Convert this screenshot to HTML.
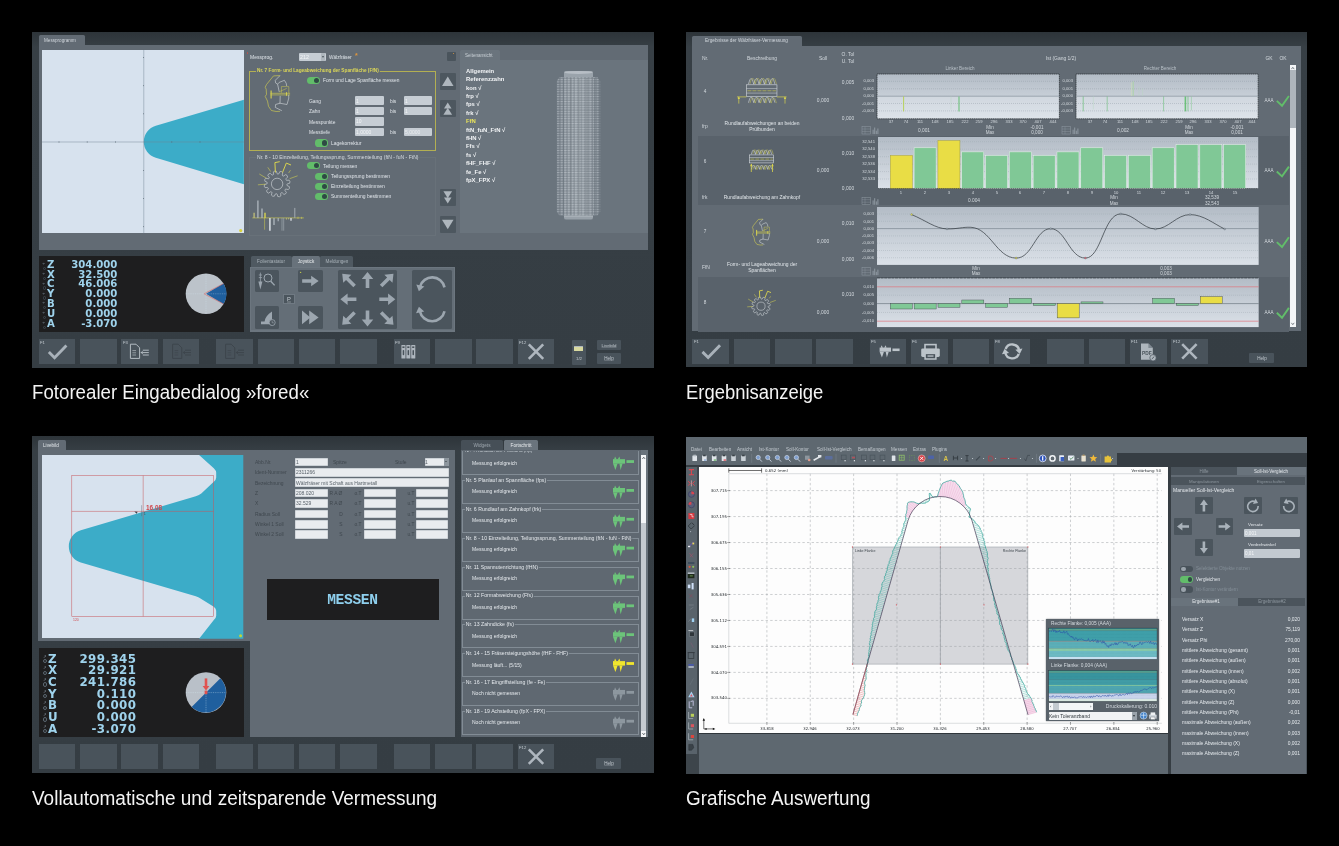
<!DOCTYPE html>
<html lang="de"><head><meta charset="utf-8"><title>fored – Softwareansichten</title>
<style>
html,body{margin:0;padding:0;background:#000;}
body{width:1339px;height:846px;position:relative;overflow:hidden;font-family:"Liberation Sans",sans-serif;color:#fff;}
.a{position:absolute;}
.t{position:absolute;white-space:nowrap;transform-origin:0 0;}
.cap{position:absolute;white-space:nowrap;font-size:20px;line-height:24px;color:#f4f4f4;transform-origin:0 50%;filter:blur(.25px);}
svg{overflow:visible;}
section{position:absolute;left:0;top:0;width:1339px;height:846px;filter:blur(.3px);}
</style></head><body>
<section>
<div class="a" style="left:32px;top:32px;width:622px;height:335.6px;background:#353d43;background:linear-gradient(#2d3439,#373f45 15px,#353d43)"></div>
<div class="a" style="left:38.75px;top:35.2px;width:45.85px;height:10.8px;background:#626b74;border-radius:1.5px 1.5px 0 0"></div>
<div class="t" style="left:43.5px;top:38px;font-size:18.4px;line-height:22.08px;color:#d0d6dc;transform:scale(0.25);">Messprogramm</div>
<div class="a" style="left:38.75px;top:45.4px;width:609.05px;height:204.2px;background:#626b74;"></div>
<div class="a" style="left:41.9px;top:50px;width:201.9px;height:183.4px;background:#d7e2ee;"></div>
<svg class="a" style="left:41.9px;top:50px;" width="201.9" height="183.4" viewBox="41.9 50 201.9 183.4"><path d="M243.8 99.7 L155.7 125.66 A16.71 16.71 0 0 0 155.7 157.74 L243.8 184.3 Z" fill="#3cacc8"/><path d="M143.7 50V233.4M41.9 142H243.8" stroke="#6f8290" stroke-width="0.45" fill="none"/><rect x="58.5" y="141.5" width="0.8" height="1" fill="#55636e"/><rect x="86.7" y="141.5" width="0.8" height="1" fill="#55636e"/><rect x="114.9" y="141.5" width="0.8" height="1" fill="#55636e"/><rect x="171.3" y="141.5" width="0.8" height="1" fill="#55636e"/><rect x="199.5" y="141.5" width="0.8" height="1" fill="#55636e"/><rect x="143" y="57.2" width="0.8" height="0.8" fill="#55636e"/><rect x="143" y="85.3" width="0.8" height="0.8" fill="#55636e"/><rect x="143" y="113.4" width="0.8" height="0.8" fill="#55636e"/><rect x="143" y="170.2" width="0.8" height="0.8" fill="#55636e"/><rect x="143" y="198.2" width="0.8" height="0.8" fill="#55636e"/><rect x="143" y="226.3" width="0.8" height="0.8" fill="#55636e"/><circle cx="240.6" cy="230.6" r="1.6" fill="#d8d23c"/></svg>
<div class="t" style="left:250px;top:54px;font-size:20px;line-height:24px;color:#dfe4e9;transform:scale(0.25);">Messprog.</div>
<div class="a" style="left:246.7px;top:52.2px;width:1.4px;height:1.4px;background:#c0504d;border-radius:50%"></div>
<div class="a" style="left:298.8px;top:53px;width:27px;height:8.2px;background:#c6cdd4;border-radius:1px"></div>
<div class="a" style="left:320.6px;top:53.4px;width:4.8px;height:7.4px;background:#aeb6bd;border-radius:.8px"></div>
<div class="t" style="left:299.6px;top:54px;font-size:21.6px;line-height:25.92px;color:#f4f6f8;transform:scale(0.25);">212</div>
<div class="a" style="left:321.6px;top:56.2px;border:1.4px solid transparent;border-top:2px solid #4a545c;width:0;height:0"></div>
<div class="t" style="left:329px;top:55px;font-size:19px;line-height:22.8px;color:#dfe4e9;transform:scale(0.25);">Wälzfräser</div>
<div class="t" style="left:355px;top:51px;font-size:28px;line-height:33.6px;color:#e0963c;transform:scale(0.25);font-weight:bold;">*</div>
<div class="a" style="left:447px;top:52.4px;width:8.5px;height:8.6px;background:#4a545c;border-radius:1px"></div>
<div class="a" style="left:452.6px;top:53.2px;width:1.3px;height:1.3px;background:#e0963c;border-radius:50%"></div>
<div class="a" style="left:249px;top:70.6px;width:187.2px;height:80.4px;background:transparent;border:0.5px solid #b3af52;box-sizing:border-box"></div>
<div class="t" style="left:255.6px;top:68px;font-size:18.88px;line-height:22.66px;color:#dcd757;transform:scale(0.25);font-weight:bold;background:#626b74;padding:0 4px;">Nr. 7 Form- und Lageabweichung der Spanfläche (FfN)</div>
<div class="a" style="left:306.7px;top:76.6px;width:13.6px;height:7.2px;background:#62bd6a;border-radius:3.6px"></div>
<div class="a" style="left:314.1px;top:77.6px;width:5.2px;height:5.2px;background:#2f4a44;border-radius:50%"></div>
<div class="t" style="left:322.6px;top:77px;font-size:19.28px;line-height:23.14px;color:#dfe4e9;transform:scale(0.25);">Form und Lage Spanfläche messen</div>
<div class="t" style="left:308.8px;top:98px;font-size:19.6px;line-height:23.52px;color:#dfe4e9;transform:scale(0.25);">Gang</div>
<div class="t" style="left:308.8px;top:108px;font-size:19.6px;line-height:23.52px;color:#dfe4e9;transform:scale(0.25);">Zahn</div>
<div class="t" style="left:308.8px;top:119px;font-size:19.6px;line-height:23.52px;color:#dfe4e9;transform:scale(0.25);">Messpunkte</div>
<div class="t" style="left:308.8px;top:129px;font-size:19.6px;line-height:23.52px;color:#dfe4e9;transform:scale(0.25);">Messtiefe</div>
<div class="a" style="left:354.7px;top:96.3px;width:29.3px;height:8.6px;background:#c6cdd4;border-radius:1px"></div>
<div class="t" style="left:355.7px;top:98px;font-size:20px;line-height:24px;color:#f2f4f6;transform:scale(0.25);">1</div>
<div class="a" style="left:403.9px;top:96.3px;width:28.6px;height:8.6px;background:#c6cdd4;border-radius:1px"></div>
<div class="t" style="left:404.9px;top:98px;font-size:20px;line-height:24px;color:#f2f4f6;transform:scale(0.25);">1</div>
<div class="a" style="left:354.7px;top:106.7px;width:29.3px;height:8.6px;background:#c6cdd4;border-radius:1px"></div>
<div class="t" style="left:355.7px;top:108px;font-size:20px;line-height:24px;color:#f2f4f6;transform:scale(0.25);">1</div>
<div class="a" style="left:403.9px;top:106.7px;width:28.6px;height:8.6px;background:#c6cdd4;border-radius:1px"></div>
<div class="t" style="left:404.9px;top:108px;font-size:20px;line-height:24px;color:#f2f4f6;transform:scale(0.25);">1</div>
<div class="a" style="left:354.7px;top:117.2px;width:29.3px;height:8.6px;background:#c6cdd4;border-radius:1px"></div>
<div class="t" style="left:355.7px;top:118px;font-size:20px;line-height:24px;color:#f2f4f6;transform:scale(0.25);">10</div>
<div class="a" style="left:354.7px;top:127.6px;width:29.3px;height:8.6px;background:#c6cdd4;border-radius:1px"></div>
<div class="t" style="left:355.7px;top:129px;font-size:20px;line-height:24px;color:#f2f4f6;transform:scale(0.25);">1,0000</div>
<div class="a" style="left:403.9px;top:127.6px;width:28.6px;height:8.6px;background:#c6cdd4;border-radius:1px"></div>
<div class="t" style="left:404.9px;top:129px;font-size:20px;line-height:24px;color:#e9ecef;transform:scale(0.25);">5,0000</div>
<div class="t" style="left:389.8px;top:98px;font-size:19.6px;line-height:23.52px;color:#dfe4e9;transform:scale(0.25);">bis</div>
<div class="t" style="left:389.8px;top:108px;font-size:19.6px;line-height:23.52px;color:#dfe4e9;transform:scale(0.25);">bis</div>
<div class="t" style="left:389.8px;top:129px;font-size:19.6px;line-height:23.52px;color:#dfe4e9;transform:scale(0.25);">bis</div>
<div class="a" style="left:314.5px;top:139.4px;width:13.6px;height:7.2px;background:#62bd6a;border-radius:3.6px"></div>
<div class="a" style="left:321.9px;top:140.4px;width:5.2px;height:5.2px;background:#2f4a44;border-radius:50%"></div>
<div class="t" style="left:330.6px;top:140px;font-size:19.72px;line-height:23.66px;color:#dfe4e9;transform:scale(0.25);">Lagekorrektur</div>
<div class="a" style="left:249px;top:157px;width:187.2px;height:79px;background:transparent;border:0.5px solid #687179;box-sizing:border-box"></div>
<div class="t" style="left:255.6px;top:154px;font-size:20.2px;line-height:24.24px;color:#d6dce1;transform:scale(0.25);background:#626b74;padding:0 4px;">Nr. 8 - 10 Einzelteilung, Teilungssprung, Summenteilung (ftN - fuN - FtN)</div>
<div class="a" style="left:306.7px;top:162.2px;width:13.6px;height:7.2px;background:#62bd6a;border-radius:3.6px"></div>
<div class="a" style="left:314.1px;top:163.2px;width:5.2px;height:5.2px;background:#2f4a44;border-radius:50%"></div>
<div class="t" style="left:322.6px;top:163px;font-size:19.8px;line-height:23.76px;color:#dfe4e9;transform:scale(0.25);">Teilung messen</div>
<div class="a" style="left:314.5px;top:172.6px;width:13.6px;height:7.2px;background:#62bd6a;border-radius:3.6px"></div>
<div class="a" style="left:321.9px;top:173.6px;width:5.2px;height:5.2px;background:#2f4a44;border-radius:50%"></div>
<div class="t" style="left:330.6px;top:173px;font-size:19.88px;line-height:23.86px;color:#dfe4e9;transform:scale(0.25);">Teilungssprung bestimmen</div>
<div class="a" style="left:314.5px;top:182.7px;width:13.6px;height:7.2px;background:#62bd6a;border-radius:3.6px"></div>
<div class="a" style="left:321.9px;top:183.7px;width:5.2px;height:5.2px;background:#2f4a44;border-radius:50%"></div>
<div class="t" style="left:330.6px;top:183px;font-size:19.88px;line-height:23.86px;color:#dfe4e9;transform:scale(0.25);">Einzelteilung bestimmen</div>
<div class="a" style="left:314.5px;top:193px;width:13.6px;height:7.2px;background:#62bd6a;border-radius:3.6px"></div>
<div class="a" style="left:321.9px;top:194px;width:5.2px;height:5.2px;background:#2f4a44;border-radius:50%"></div>
<div class="t" style="left:330.6px;top:193px;font-size:19.88px;line-height:23.86px;color:#dfe4e9;transform:scale(0.25);">Summenteilung bestimmen</div>
<svg class="a" style="left:249px;top:72px;" width="57" height="164" viewBox="249 72 57 164"><path d="M280 75.6 L273.5 75.9 L266.5 84.5 L265.2 87.3 L266.2 89.2 L266.5 94.4 L265.2 96.4 L267.5 101.1 L268.5 106.3 L271.4 110.5 L276.1 111.5 L280 111.3" fill="none" stroke="#d9d44e" stroke-width="0.6" stroke-linejoin="round"/><path d="M280 75.6 L275.3 80.3 L275.6 82.9 L277.6 84.2 L279.2 82.4 L284.4 80.3 L286.2 83.2 L286.7 86 M277.6 84.2 L279.2 91.8 M280.2 95.9 L280 103.2 L275.6 104.5 L275.3 107.4 L281.8 110.7 M279.7 103.2 L287 104.5 L288.8 98 L288.6 94.9" fill="none" stroke="#d5dade" stroke-width="0.6" stroke-linejoin="round"/><path d="M281.4 92.8 V86.6 H288.8 V93.3 M279.2 91.8 L286.7 88.4" fill="none" stroke="#d9d44e" stroke-width="0.55" opacity=".85"/><path d="M270.4 93.3 H290.1 M270.4 94.9 H290.1" fill="none" stroke="#d9d44e" stroke-width="0.6"/><path d="M271.1 90.5 V98.5" stroke="#d9d44e" stroke-width="1.1"/><path d="M286.5 92.2 V95.8" stroke="#d9d44e" stroke-width="0.9"/><path d="M277.1 173.7 Q277.89 174.53 278.8 173.84 L279.85 171.6 Q281.71 171.1 282.82 172.67 L282.2 175.07L282.2 175.07 Q282.46 176.18 283.6 176.04 L285.63 174.63 Q287.49 175.12 287.67 177.04 L285.93 178.8L285.93 178.8 Q285.61 179.9 286.66 180.34 L289.12 180.13 Q290.49 181.49 289.68 183.24 L287.3 183.9L287.3 183.9 Q286.47 184.69 287.16 185.6 L289.4 186.65 Q289.9 188.51 288.33 189.62 L285.93 189L285.93 189 Q284.82 189.26 284.96 190.4 L286.37 192.43 Q285.88 194.29 283.96 194.47 L282.2 192.73L282.2 192.73 Q281.1 192.41 280.66 193.46 L280.87 195.92 Q279.51 197.29 277.76 196.48 L277.1 194.1L277.1 194.1 Q276.31 193.27 275.4 193.96 L274.35 196.2 Q272.49 196.7 271.38 195.13 L272 192.73L272 192.73 Q271.74 191.62 270.6 191.76 L268.57 193.17 Q266.71 192.68 266.53 190.76 L268.27 189L268.27 189 Q268.59 187.9 267.54 187.46 L265.08 187.67 Q263.71 186.31 264.52 184.56 L266.9 183.9L266.9 183.9 Q267.73 183.11 267.04 182.2 L264.8 181.15 Q264.3 179.29 265.87 178.18 L268.27 178.8L268.27 178.8 Q269.38 178.54 269.24 177.4 L267.83 175.37 Q268.32 173.51 270.24 173.33 L272 175.07L272 175.07 Q273.1 175.39 273.54 174.34 L273.33 171.88 Q274.69 170.51 276.44 171.32 L277.1 173.7Z" fill="none" stroke="#d5dade" stroke-width="0.6" stroke-linejoin="round"/><circle cx="277.1" cy="183.9" r="5.7" fill="none" stroke="#d5dade" stroke-width="0.6"/><path d="M275.4 172.5 L274.9 162.6 L279.7 161.7 M282.5 172.5 L286.3 163.1 L291 165" fill="none" stroke="#d9d44e" stroke-width="1" stroke-linejoin="round"/><path d="M259.3 174 L266.4 178.2 M257.9 184.8 L265.5 184.2 M297.6 175.8 L289.6 178.7 M267.8 167.3 L270.7 171.6 M290.5 170.2 L288.6 173" fill="none" stroke="#d9d44e" stroke-width="0.55"/><path d="M252.3 217.9 H303.8" stroke="#d9d44e" stroke-width="0.6"/><path d="M254.1 212.7V217.9" stroke="#b9b878" stroke-width="1.4"/><path d="M257.9 200.4V217.9" stroke="#aab2b9" stroke-width="1.4"/><path d="M262 208.5V217.9" stroke="#aab2b9" stroke-width="1.4"/><path d="M265 212.7V217.9" stroke="#d9d44e" stroke-width="1.4"/><path d="M264.6 217.9V229.7" stroke="#d9d44e" stroke-width="0.5"/><path d="M269.9 217.9V230.7" stroke="#d5dade" stroke-width="1.6"/><path d="M274 217.9V224.9" stroke="#aab2b9" stroke-width="1.4"/><path d="M278.2 217.9V221.2" stroke="#aab2b9" stroke-width="1.2"/><path d="M282 217.9V230.7" stroke="#aab2b9" stroke-width="0.6"/><path d="M283.7 217.9V230.7" stroke="#aab2b9" stroke-width="0.6"/><path d="M286.4 217.9V219.6" stroke="#b9b878" stroke-width="0.9"/><path d="M288.6 217.9V219.4" stroke="#b9b878" stroke-width="0.9"/><path d="M291 217.9V220.7" stroke="#d5dade" stroke-width="1.4"/><path d="M294.8 207.9V217.9" stroke="#aab2b9" stroke-width="0.9"/><path d="M298 216.6V219" stroke="#d9d44e" stroke-width="0.5"/><path d="M301.6 216.8V219" stroke="#d9d44e" stroke-width="0.5"/></svg>
<div class="a" style="left:439.5px;top:73.2px;width:16.5px;height:16.8px;background:#4d575f;border-radius:1px"></div>
<div class="a" style="left:439.5px;top:100.4px;width:16.5px;height:16.6px;background:#4d575f;border-radius:1px"></div>
<div class="a" style="left:439.5px;top:189px;width:16.5px;height:16.6px;background:#4d575f;border-radius:1px"></div>
<div class="a" style="left:439.5px;top:216px;width:16.5px;height:16.7px;background:#4d575f;border-radius:1px"></div>
<svg class="a" style="left:439px;top:72px;" width="18" height="162" viewBox="439 72 18 162"><polygon points="442,86 447.75,76.6 453.5,86" fill="#aeb6bd"/><polygon points="444,108.6 447.75,102.6 451.5,108.6" fill="#aeb6bd"/><polygon points="443.4,114.8 447.75,107.8 452.1,114.8" fill="#aeb6bd"/><polygon points="443.4,191.2 447.75,198.2 452.1,191.2" fill="#aeb6bd"/><polygon points="444,197.4 447.75,203.4 451.5,197.4" fill="#aeb6bd"/><polygon points="442,219.8 447.75,229.2 453.5,219.8" fill="#aeb6bd"/></svg>
<div class="a" style="left:459.5px;top:50px;width:40.7px;height:10.5px;background:#6a747d;border-radius:1.5px 1.5px 0 0"></div>
<div class="t" style="left:464.6px;top:53px;font-size:18.4px;line-height:22.08px;color:#c9d0d6;transform:scale(0.25);">Seitenansicht</div>
<div class="a" style="left:459.5px;top:60px;width:188.1px;height:172.7px;background:#6a747d;"></div>
<div class="t" style="left:466.2px;top:67px;font-size:23.6px;line-height:28.32px;color:#f2f4f6;transform:scale(0.25);font-weight:bold;">Allgemein</div>
<div class="t" style="left:466.2px;top:75px;font-size:23.6px;line-height:28.32px;color:#f2f4f6;transform:scale(0.25);font-weight:bold;">Referenzzahn</div>
<div class="t" style="left:466.2px;top:84px;font-size:23.6px;line-height:28.32px;color:#f2f4f6;transform:scale(0.25);font-weight:bold;">kon √</div>
<div class="t" style="left:466.2px;top:92px;font-size:23.6px;line-height:28.32px;color:#f2f4f6;transform:scale(0.25);font-weight:bold;">frp √</div>
<div class="t" style="left:466.2px;top:100px;font-size:23.6px;line-height:28.32px;color:#f2f4f6;transform:scale(0.25);font-weight:bold;">fps √</div>
<div class="t" style="left:466.2px;top:109px;font-size:23.6px;line-height:28.32px;color:#f2f4f6;transform:scale(0.25);font-weight:bold;">frk √</div>
<div class="t" style="left:466.2px;top:117px;font-size:23.6px;line-height:28.32px;color:#e9e35a;transform:scale(0.25);font-weight:bold;">FfN</div>
<div class="t" style="left:466.2px;top:126px;font-size:23.6px;line-height:28.32px;color:#f2f4f6;transform:scale(0.25);font-weight:bold;">ftN_fuN_FtN √</div>
<div class="t" style="left:466.2px;top:134px;font-size:23.6px;line-height:28.32px;color:#f2f4f6;transform:scale(0.25);font-weight:bold;">fHN √</div>
<div class="t" style="left:466.2px;top:142px;font-size:23.6px;line-height:28.32px;color:#f2f4f6;transform:scale(0.25);font-weight:bold;">Ffs √</div>
<div class="t" style="left:466.2px;top:151px;font-size:23.6px;line-height:28.32px;color:#f2f4f6;transform:scale(0.25);font-weight:bold;">fs √</div>
<div class="t" style="left:466.2px;top:159px;font-size:23.6px;line-height:28.32px;color:#f2f4f6;transform:scale(0.25);font-weight:bold;">fHF_FHF √</div>
<div class="t" style="left:466.2px;top:168px;font-size:23.6px;line-height:28.32px;color:#f2f4f6;transform:scale(0.25);font-weight:bold;">fe_Fe √</div>
<div class="t" style="left:466.2px;top:176px;font-size:23.6px;line-height:28.32px;color:#f2f4f6;transform:scale(0.25);font-weight:bold;">fpX_FPX √</div>
<svg class="a" style="left:556px;top:70px;" width="45" height="150" viewBox="556 70 45 150"><defs><linearGradient id="hobg" x1="0" x2="1"><stop offset="0" stop-color="#747e87"/><stop offset=".2" stop-color="#8d969e"/><stop offset=".5" stop-color="#99a2a9"/><stop offset=".8" stop-color="#8c959d"/><stop offset="1" stop-color="#727c85"/></linearGradient><pattern id="hobp" x="557" y="79" width="3.6" height="2.45" patternUnits="userSpaceOnUse"><rect x="0" y="0" width="2.2" height="1" fill="#ccd2d7" opacity=".5"/><rect x="1.8" y="1.2" width="1.8" height=".9" fill="#5a646c" opacity=".45"/></pattern></defs><rect x="564" y="71" width="29" height="8" rx="1.6" fill="#9aa3ab"/><ellipse cx="578.5" cy="72.4" rx="14" ry="1.5" fill="#b7bec5"/><rect x="564" y="212" width="29" height="7.6" rx="2.2" fill="#98a1a9"/><rect x="564" y="215.4" width="29" height="1.4" fill="#b4bbc2" opacity=".7"/><path d="M559.4 77 H597.4 L600.2 81.4 V211.4 L597.4 215.6 H559.4 L556.6 211.4 V81.4 Z" fill="url(#hobg)"/><path d="M559.4 77 H597.4 L600.2 81.4 V211.4 L597.4 215.6 H559.4 L556.6 211.4 V81.4 Z" fill="url(#hobp)"/><rect x="563" y="78" width="0.9" height="137" fill="#636d76" opacity=".5"/><rect x="570.5" y="78" width="0.9" height="137" fill="#636d76" opacity=".5"/><rect x="578.5" y="78" width="0.9" height="137" fill="#636d76" opacity=".5"/><rect x="586.5" y="78" width="0.9" height="137" fill="#636d76" opacity=".5"/><rect x="594" y="78" width="0.9" height="137" fill="#636d76" opacity=".5"/></svg>
<div class="a" style="left:38.75px;top:256px;width:205.55px;height:75.8px;background:#1e1e1f;"></div>
<div class="t" style="left:46.9px;top:259.43px;font-size:10.15px;line-height:12.18px;color:#9fd3ec;font-weight:bold;font-family:'DejaVu Sans','Liberation Sans',sans-serif;">Z</div>
<div class="t" style="left:117.4px;top:259.43px;font-size:10.15px;line-height:12.18px;color:#9fd3ec;transform:translateX(-100%);font-weight:bold;font-family:'DejaVu Sans','Liberation Sans',sans-serif;">304.000</div>
<div class="t" style="left:42px;top:261px;font-size:16px;line-height:19.2px;color:#66737d;transform:scale(0.25);font-family:'DejaVu Sans','Liberation Sans',sans-serif;">+</div>
<div class="a" style="left:42.6px;top:266.7px;width:1.6px;height:1.6px;background:transparent;border:0.4px solid #3f4950;border-radius:50%"></div>
<div class="t" style="left:46.9px;top:269.43px;font-size:10.15px;line-height:12.18px;color:#9fd3ec;font-weight:bold;font-family:'DejaVu Sans','Liberation Sans',sans-serif;">X</div>
<div class="t" style="left:117.4px;top:269.43px;font-size:10.15px;line-height:12.18px;color:#9fd3ec;transform:translateX(-100%);font-weight:bold;font-family:'DejaVu Sans','Liberation Sans',sans-serif;">32.500</div>
<div class="t" style="left:42px;top:271px;font-size:16px;line-height:19.2px;color:#66737d;transform:scale(0.25);font-family:'DejaVu Sans','Liberation Sans',sans-serif;">+</div>
<div class="a" style="left:42.6px;top:276.5px;width:1.6px;height:1.6px;background:transparent;border:0.4px solid #3f4950;border-radius:50%"></div>
<div class="t" style="left:46.9px;top:278.43px;font-size:10.15px;line-height:12.18px;color:#9fd3ec;font-weight:bold;font-family:'DejaVu Sans','Liberation Sans',sans-serif;">C</div>
<div class="t" style="left:117.4px;top:278.43px;font-size:10.15px;line-height:12.18px;color:#9fd3ec;transform:translateX(-100%);font-weight:bold;font-family:'DejaVu Sans','Liberation Sans',sans-serif;">46.006</div>
<div class="t" style="left:42px;top:281px;font-size:16px;line-height:19.2px;color:#66737d;transform:scale(0.25);font-family:'DejaVu Sans','Liberation Sans',sans-serif;">+</div>
<div class="a" style="left:42.6px;top:286.3px;width:1.6px;height:1.6px;background:transparent;border:0.4px solid #3f4950;border-radius:50%"></div>
<div class="t" style="left:46.9px;top:288.43px;font-size:10.15px;line-height:12.18px;color:#9fd3ec;font-weight:bold;font-family:'DejaVu Sans','Liberation Sans',sans-serif;">Y</div>
<div class="t" style="left:117.4px;top:288.43px;font-size:10.15px;line-height:12.18px;color:#9fd3ec;transform:translateX(-100%);font-weight:bold;font-family:'DejaVu Sans','Liberation Sans',sans-serif;">0.000</div>
<div class="t" style="left:42px;top:291px;font-size:16px;line-height:19.2px;color:#66737d;transform:scale(0.25);font-family:'DejaVu Sans','Liberation Sans',sans-serif;">+</div>
<div class="a" style="left:42.6px;top:296.1px;width:1.6px;height:1.6px;background:transparent;border:0.4px solid #3f4950;border-radius:50%"></div>
<div class="t" style="left:46.9px;top:298.43px;font-size:10.15px;line-height:12.18px;color:#9fd3ec;font-weight:bold;font-family:'DejaVu Sans','Liberation Sans',sans-serif;">B</div>
<div class="t" style="left:117.4px;top:298.43px;font-size:10.15px;line-height:12.18px;color:#9fd3ec;transform:translateX(-100%);font-weight:bold;font-family:'DejaVu Sans','Liberation Sans',sans-serif;">0.000</div>
<div class="t" style="left:42px;top:300px;font-size:16px;line-height:19.2px;color:#66737d;transform:scale(0.25);font-family:'DejaVu Sans','Liberation Sans',sans-serif;">+</div>
<div class="a" style="left:42.6px;top:305.9px;width:1.6px;height:1.6px;background:transparent;border:0.4px solid #3f4950;border-radius:50%"></div>
<div class="t" style="left:46.9px;top:308.43px;font-size:10.15px;line-height:12.18px;color:#9fd3ec;font-weight:bold;font-family:'DejaVu Sans','Liberation Sans',sans-serif;">U</div>
<div class="t" style="left:117.4px;top:308.43px;font-size:10.15px;line-height:12.18px;color:#9fd3ec;transform:translateX(-100%);font-weight:bold;font-family:'DejaVu Sans','Liberation Sans',sans-serif;">0.000</div>
<div class="t" style="left:42px;top:310px;font-size:16px;line-height:19.2px;color:#66737d;transform:scale(0.25);font-family:'DejaVu Sans','Liberation Sans',sans-serif;">+</div>
<div class="a" style="left:42.6px;top:315.7px;width:1.6px;height:1.6px;background:transparent;border:0.4px solid #3f4950;border-radius:50%"></div>
<div class="t" style="left:46.9px;top:318.43px;font-size:10.15px;line-height:12.18px;color:#9fd3ec;font-weight:bold;font-family:'DejaVu Sans','Liberation Sans',sans-serif;">A</div>
<div class="t" style="left:117.4px;top:318.43px;font-size:10.15px;line-height:12.18px;color:#9fd3ec;transform:translateX(-100%);font-weight:bold;font-family:'DejaVu Sans','Liberation Sans',sans-serif;">-3.070</div>
<div class="t" style="left:42px;top:320px;font-size:16px;line-height:19.2px;color:#66737d;transform:scale(0.25);font-family:'DejaVu Sans','Liberation Sans',sans-serif;">+</div>
<div class="a" style="left:42.6px;top:325.5px;width:1.6px;height:1.6px;background:transparent;border:0.4px solid #3f4950;border-radius:50%"></div>
<svg class="a" style="left:185px;top:273px;" width="42" height="42" viewBox="185 273 42 42"><circle cx="206" cy="293.8" r="20.3" fill="#bcc3ca"/><path d="M206 293.8 L223.6 283.6 A20.3 20.3 0 0 1 223.6 304 Z" fill="#1f5f9e"/><path d="M223.6 283.6 L204 293.8 L223.6 304" fill="none" stroke="#d9534f" stroke-width="0.5"/><path d="M186 293.8H226M206 274V314" stroke="#d8eef8" stroke-width="0.35" stroke-dasharray="1 0.8" opacity=".8"/></svg>
<div class="a" style="left:250.8px;top:256.4px;width:40.8px;height:10.6px;background:#4f5961;border-radius:1.5px 1.5px 0 0"></div>
<div class="a" style="left:292.4px;top:256.4px;width:27.3px;height:10.6px;background:#68727b;border-radius:1.5px 1.5px 0 0"></div>
<div class="a" style="left:320.2px;top:256.4px;width:32.6px;height:10.6px;background:#4f5961;border-radius:1.5px 1.5px 0 0"></div>
<div class="t" style="left:271.2px;top:259px;font-size:18.4px;line-height:22.08px;color:#aab3ba;transform:scale(0.25) translateX(-50%);">Folientastatur</div>
<div class="t" style="left:306px;top:259px;font-size:18.4px;line-height:22.08px;color:#eef1f3;transform:scale(0.25) translateX(-50%);">Joystick</div>
<div class="t" style="left:336.5px;top:259px;font-size:18.4px;line-height:22.08px;color:#aab3ba;transform:scale(0.25) translateX(-50%);">Meldungen</div>
<div class="a" style="left:250px;top:266.9px;width:205px;height:64.7px;background:#6c767f;"></div>
<div class="a" style="left:251.4px;top:268.2px;width:202.2px;height:62px;background:#646e77;"></div>
<div class="a" style="left:254.7px;top:270px;width:24.2px;height:21.6px;background:#4b555d;border-radius:1.5px"></div>
<div class="a" style="left:254.7px;top:306.2px;width:24.2px;height:22.6px;background:#4b555d;border-radius:1.5px"></div>
<div class="a" style="left:297.9px;top:270px;width:24.9px;height:21.6px;background:#4b555d;border-radius:1.5px"></div>
<div class="a" style="left:297.9px;top:306.2px;width:24.9px;height:22.6px;background:#4b555d;border-radius:1.5px"></div>
<div class="a" style="left:337.9px;top:270px;width:59.4px;height:58.8px;background:#4b555d;border-radius:1.5px"></div>
<div class="a" style="left:411.9px;top:270px;width:40.5px;height:58.8px;background:#4b555d;border-radius:1.5px"></div>
<div class="a" style="left:282.8px;top:294.3px;width:11.8px;height:9.9px;background:#4b555d;border:0.5px solid #707a83;box-sizing:border-box"></div>
<div class="t" style="left:288.7px;top:296px;font-size:23.2px;line-height:27.84px;color:#c3cad0;transform:scale(0.25) translateX(-50%);text-decoration:underline;">P</div>
<svg class="a" style="left:250px;top:267px;" width="205" height="65" viewBox="250 267 205 65"><polygon points="-8.25,-1.7 0.75,-1.7 0.75,-5.25 8.25,0 0.75,5.25 0.75,1.7 -8.25,1.7" fill="#9ca6af" transform="translate(310.4 281) rotate(0)"/><polygon points="302,310.6 310.4,317.4 302,324.2" fill="#9ca6af"/><polygon points="309.2,310.6 318.6,317.4 309.2,324.2" fill="#9ca6af"/><circle cx="300.6" cy="272.4" r="0.7" fill="#b9c24a"/><polygon points="-8.75,-1.8 1.55,-1.8 1.55,-5.75 8.75,0 1.55,5.75 1.55,1.8 -8.75,1.8" fill="#9ca6af" transform="translate(348.4 279.9) rotate(225)"/><polygon points="-8,-1.8 0.8,-1.8 0.8,-5.75 8,0 0.8,5.75 0.8,1.8 -8,1.8" fill="#9ca6af" transform="translate(367.5 279.9) rotate(270)"/><polygon points="-8.75,-1.8 1.55,-1.8 1.55,-5.75 8.75,0 1.55,5.75 1.55,1.8 -8.75,1.8" fill="#9ca6af" transform="translate(387.3 279.9) rotate(315)"/><polygon points="-8,-1.8 0.8,-1.8 0.8,-5.75 8,0 0.8,5.75 0.8,1.8 -8,1.8" fill="#9ca6af" transform="translate(348.4 299.2) rotate(180)"/><polygon points="-8,-1.8 0.8,-1.8 0.8,-5.75 8,0 0.8,5.75 0.8,1.8 -8,1.8" fill="#9ca6af" transform="translate(387.3 299.2) rotate(0)"/><polygon points="-8.75,-1.8 1.55,-1.8 1.55,-5.75 8.75,0 1.55,5.75 1.55,1.8 -8.75,1.8" fill="#9ca6af" transform="translate(348.4 318.6) rotate(135)"/><polygon points="-8,-1.8 0.8,-1.8 0.8,-5.75 8,0 0.8,5.75 0.8,1.8 -8,1.8" fill="#9ca6af" transform="translate(367.5 318.6) rotate(90)"/><polygon points="-8.75,-1.8 1.55,-1.8 1.55,-5.75 8.75,0 1.55,5.75 1.55,1.8 -8.75,1.8" fill="#9ca6af" transform="translate(387.3 318.6) rotate(45)"/><path d="M420.03 286.74 A12.6 12.6 0 0 1 444.52 287.38" fill="none" stroke="#9ca6af" stroke-width="2.6"/><polygon points="418.83,291.2 416.3,284.43 424.41,286.61" fill="#9ca6af"/><path d="M419.88 311.22 A12.6 12.6 0 0 0 444.52 311.22" fill="none" stroke="#9ca6af" stroke-width="2.6"/><polygon points="418.91,306.7 424.25,311.58 416.03,313.33" fill="#9ca6af"/><path d="M260.4 272.6V282 M258.8 275H262 M258.8 277.6H262" stroke="#9ca6af" stroke-width="0.8" fill="none"/><polygon points="258.4,281.4 262.4,281.4 260.4,289.6" fill="#9ca6af"/><circle cx="268" cy="278" r="4" fill="none" stroke="#9ca6af" stroke-width="1"/><path d="M270.8 281.2L274.6 285.4" stroke="#9ca6af" stroke-width="1.4"/><path d="M261 324.2 H272 V311.4 C267.5 314 265 318 264.6 321.4 H261 Z" fill="#9ca6af"/><circle cx="272.2" cy="322.6" r="3" fill="#4b555d" stroke="#9ca6af" stroke-width="0.8"/><path d="M272.2 320.8V322.8H273.8" stroke="#9ca6af" stroke-width="0.6" fill="none"/></svg>
<div class="a" style="left:38.75px;top:339px;width:36.6px;height:25.3px;background:#49535b;"></div>
<div class="t" style="left:39.95px;top:340px;font-size:16.8px;line-height:20.16px;color:#c3cad0;transform:scale(0.25);">F1</div>
<div class="a" style="left:80.1px;top:339px;width:36.6px;height:25.3px;background:#49535b;"></div>
<div class="a" style="left:121.45px;top:339px;width:36.6px;height:25.3px;background:#49535b;"></div>
<div class="t" style="left:122.65px;top:340px;font-size:16.8px;line-height:20.16px;color:#c3cad0;transform:scale(0.25);">F3</div>
<div class="a" style="left:162.8px;top:339px;width:36.6px;height:25.3px;background:#49535b;"></div>
<div class="a" style="left:216.2px;top:339px;width:36.6px;height:25.3px;background:#49535b;"></div>
<div class="a" style="left:257.55px;top:339px;width:36.6px;height:25.3px;background:#49535b;"></div>
<div class="a" style="left:298.9px;top:339px;width:36.6px;height:25.3px;background:#49535b;"></div>
<div class="a" style="left:340.25px;top:339px;width:36.6px;height:25.3px;background:#49535b;"></div>
<div class="a" style="left:393.65px;top:339px;width:36.6px;height:25.3px;background:#49535b;"></div>
<div class="t" style="left:394.85px;top:340px;font-size:16.8px;line-height:20.16px;color:#c3cad0;transform:scale(0.25);">F9</div>
<div class="a" style="left:435px;top:339px;width:36.6px;height:25.3px;background:#49535b;"></div>
<div class="a" style="left:476.35px;top:339px;width:36.6px;height:25.3px;background:#49535b;"></div>
<div class="a" style="left:517.7px;top:339px;width:36.6px;height:25.3px;background:#49535b;"></div>
<div class="t" style="left:518.9px;top:340px;font-size:16.8px;line-height:20.16px;color:#c3cad0;transform:scale(0.25);">F12</div>
<svg class="a" style="left:38px;top:339px;" width="522" height="26" viewBox="38 339 522 26"><path d="M48.85 352.08 l5.7 5.7 l11.88 -12.35" fill="none" stroke="#a9b2ba" stroke-width="2.85" stroke-linejoin="miter"/><path d="M528.8 344.4 L543.2 358.8 M543.2 344.4 L528.8 358.8" stroke="#aeb6be" stroke-width="2.6" fill="none"/><g opacity="1"><path d="M130.4 344.2 h5.6 l3.6 3.6 v10.6 h-9.2 z" fill="none" stroke="#b3bbc2" stroke-width="1"/><path d="M132.4 350.6 h3.6 M132.4 352.8 h3.6 M132.4 355 h3.6" stroke="#b3bbc2" stroke-width="0.7"/><path d="M142.8 350.2 h6 M142.8 352.6 h6 M142.8 355 h6" stroke="#b3bbc2" stroke-width="1"/><polygon points="140.4,352.6 142.8,351 142.8,354.2" fill="#b3bbc2"/></g><g opacity="0.9"><path d="M172.6 344.2 h5.6 l3.6 3.6 v10.6 h-9.2 z" fill="none" stroke="#3c444b" stroke-width="1"/><path d="M174.6 350.6 h3.6 M174.6 352.8 h3.6 M174.6 355 h3.6" stroke="#3c444b" stroke-width="0.7"/><path d="M185 350.2 h6 M185 352.6 h6 M185 355 h6" stroke="#3c444b" stroke-width="1"/><polygon points="182.6,352.6 185,351 185,354.2" fill="#3c444b"/></g><g opacity="0.9"><path d="M225.6 344.2 h5.6 l3.6 3.6 v10.6 h-9.2 z" fill="none" stroke="#3c444b" stroke-width="1"/><path d="M227.6 350.6 h3.6 M227.6 352.8 h3.6 M227.6 355 h3.6" stroke="#3c444b" stroke-width="0.7"/><path d="M238 350.2 h6 M238 352.6 h6 M238 355 h6" stroke="#3c444b" stroke-width="1"/><polygon points="235.6,352.6 238,351 238,354.2" fill="#3c444b"/></g><rect x="401.4" y="345" width="4.1" height="13.6" rx=".6" fill="#aeb6be"/><rect x="402.7" y="350" width="1.5" height="5.2" rx=".7" fill="#49535b"/><rect x="402.4" y="346.4" width="2.1" height="1.6" fill="#49535b"/><rect x="406.3" y="345" width="4.1" height="13.6" rx=".6" fill="#aeb6be"/><rect x="407.6" y="350" width="1.5" height="5.2" rx=".7" fill="#49535b"/><rect x="407.3" y="346.4" width="2.1" height="1.6" fill="#49535b"/><rect x="411.2" y="345" width="4.1" height="13.6" rx=".6" fill="#aeb6be"/><rect x="412.5" y="350" width="1.5" height="5.2" rx=".7" fill="#49535b"/><rect x="412.2" y="346.4" width="2.1" height="1.6" fill="#49535b"/></svg>
<div class="a" style="left:571.6px;top:339.5px;width:14.4px;height:25.1px;background:#4a545c;border-radius:1px"></div>
<div class="a" style="left:574.2px;top:345.6px;width:9.2px;height:5px;background:#d8d9a0;border-radius:.6px;border-top:1px solid #aeb6bd;box-sizing:border-box"></div>
<div class="t" style="left:578.8px;top:356px;font-size:17.6px;line-height:21.12px;color:#c3cad0;transform:scale(0.25) translateX(-50%);">1/2</div>
<div class="a" style="left:596.6px;top:340.4px;width:24.5px;height:9.2px;background:#49535b;border-radius:1px"></div>
<div class="a" style="left:596.6px;top:353px;width:24.5px;height:11.2px;background:#49535b;border-radius:1px"></div>
<div class="t" style="left:608.8px;top:343px;font-size:17.6px;line-height:21.12px;color:#c3cad0;transform:scale(0.25) translateX(-50%);text-decoration:underline;">Livebild</div>
<div class="t" style="left:608.8px;top:356px;font-size:18.4px;line-height:22.08px;color:#c3cad0;transform:scale(0.25) translateX(-50%);text-decoration:underline;">Help</div>
</section>
<section>
<div class="a" style="left:686px;top:32px;width:621.4px;height:335.4px;background:#353d43;background:linear-gradient(#2d3439,#373f45 15px,#353d43)"></div>
<div class="a" style="left:692.4px;top:35.6px;width:110px;height:10.8px;background:#626b74;border-radius:1.5px 1.5px 0 0"></div>
<div class="t" style="left:704.6px;top:38px;font-size:18.8px;line-height:22.56px;color:#d0d6dc;transform:scale(0.25);">Ergebnisse der Wälzfräser-Vermessung</div>
<div class="a" style="left:692.4px;top:45.9px;width:608.3px;height:285.6px;background:#626b74;"></div>
<div class="a" style="left:698px;top:136px;width:591px;height:69.3px;background:#59626b;"></div>
<div class="a" style="left:698px;top:277px;width:591px;height:54.5px;background:#59626b;"></div>
<div class="t" style="left:702px;top:55px;font-size:19.8px;line-height:23.76px;color:#d3d9de;transform:scale(0.25);">Nr.</div>
<div class="t" style="left:762px;top:55px;font-size:19.8px;line-height:23.76px;color:#d3d9de;transform:scale(0.25) translateX(-50%);">Beschreibung</div>
<div class="t" style="left:822.7px;top:55px;font-size:19.8px;line-height:23.76px;color:#d3d9de;transform:scale(0.25) translateX(-50%);">Soll</div>
<div class="t" style="left:848px;top:51px;font-size:19.8px;line-height:23.76px;color:#d3d9de;transform:scale(0.25) translateX(-50%);">O. Tol</div>
<div class="t" style="left:848px;top:58px;font-size:19.8px;line-height:23.76px;color:#d3d9de;transform:scale(0.25) translateX(-50%);">U. Tol</div>
<div class="t" style="left:1061px;top:55px;font-size:19.8px;line-height:23.76px;color:#d3d9de;transform:scale(0.25) translateX(-50%);">Ist (Gang 1/2)</div>
<div class="t" style="left:1268.6px;top:55px;font-size:19.8px;line-height:23.76px;color:#d3d9de;transform:scale(0.25) translateX(-50%);">GK</div>
<div class="t" style="left:1283.4px;top:55px;font-size:19.8px;line-height:23.76px;color:#d3d9de;transform:scale(0.25) translateX(-50%);">OK</div>
<div class="t" style="left:960px;top:66px;font-size:18px;line-height:21.6px;color:#b9c1c8;transform:scale(0.25) translateX(-50%);">Linker Bereich</div>
<div class="t" style="left:1159.7px;top:66px;font-size:18px;line-height:21.6px;color:#b9c1c8;transform:scale(0.25) translateX(-50%);">Rechter Bereich</div>
<div class="t" style="left:705.2px;top:89px;font-size:18.8px;line-height:22.56px;color:#d3d9de;transform:scale(0.25) translateX(-50%);">4</div>
<div class="t" style="left:702px;top:123px;font-size:19.6px;line-height:23.52px;color:#d3d9de;transform:scale(0.25);">frp</div>
<div class="t" style="left:848px;top:79px;font-size:19.6px;line-height:23.52px;color:#d3d9de;transform:scale(0.25) translateX(-50%);">0,005</div>
<div class="t" style="left:822.7px;top:97px;font-size:19.6px;line-height:23.52px;color:#d3d9de;transform:scale(0.25) translateX(-50%);">0,000</div>
<div class="t" style="left:848px;top:115px;font-size:19.6px;line-height:23.52px;color:#d3d9de;transform:scale(0.25) translateX(-50%);">0,000</div>
<div class="t" style="left:762px;top:120px;font-size:19.8px;line-height:23.76px;color:#e1e6ea;transform:scale(0.25) translateX(-50%);">Rundlaufabweichungen an beiden</div>
<div class="t" style="left:762px;top:126px;font-size:19.8px;line-height:23.76px;color:#e1e6ea;transform:scale(0.25) translateX(-50%);">Prüfbunden</div>
<div class="t" style="left:1268.6px;top:98px;font-size:18px;line-height:21.6px;color:#d3d9de;transform:scale(0.25) translateX(-50%);">AAA</div>
<div class="t" style="left:705.2px;top:159px;font-size:18.8px;line-height:22.56px;color:#d3d9de;transform:scale(0.25) translateX(-50%);">6</div>
<div class="t" style="left:702px;top:194px;font-size:19.6px;line-height:23.52px;color:#d3d9de;transform:scale(0.25);">frk</div>
<div class="t" style="left:848px;top:150px;font-size:19.6px;line-height:23.52px;color:#d3d9de;transform:scale(0.25) translateX(-50%);">0,010</div>
<div class="t" style="left:822.7px;top:167px;font-size:19.6px;line-height:23.52px;color:#d3d9de;transform:scale(0.25) translateX(-50%);">0,000</div>
<div class="t" style="left:848px;top:185px;font-size:19.6px;line-height:23.52px;color:#d3d9de;transform:scale(0.25) translateX(-50%);">0,000</div>
<div class="t" style="left:762px;top:194px;font-size:19.8px;line-height:23.76px;color:#e1e6ea;transform:scale(0.25) translateX(-50%);">Rundlaufabweichung am Zahnkopf</div>
<div class="t" style="left:1268.6px;top:168px;font-size:18px;line-height:21.6px;color:#d3d9de;transform:scale(0.25) translateX(-50%);">AAA</div>
<div class="t" style="left:705.2px;top:229px;font-size:18.8px;line-height:22.56px;color:#d3d9de;transform:scale(0.25) translateX(-50%);">7</div>
<div class="t" style="left:702px;top:264px;font-size:19.6px;line-height:23.52px;color:#d3d9de;transform:scale(0.25);">FfN</div>
<div class="t" style="left:848px;top:220px;font-size:19.6px;line-height:23.52px;color:#d3d9de;transform:scale(0.25) translateX(-50%);">0,010</div>
<div class="t" style="left:822.7px;top:238px;font-size:19.6px;line-height:23.52px;color:#d3d9de;transform:scale(0.25) translateX(-50%);">0,000</div>
<div class="t" style="left:848px;top:256px;font-size:19.6px;line-height:23.52px;color:#d3d9de;transform:scale(0.25) translateX(-50%);">0,000</div>
<div class="t" style="left:762px;top:261px;font-size:19.8px;line-height:23.76px;color:#e1e6ea;transform:scale(0.25) translateX(-50%);">Form- und Lageabweichung der</div>
<div class="t" style="left:762px;top:267px;font-size:19.8px;line-height:23.76px;color:#e1e6ea;transform:scale(0.25) translateX(-50%);">Spanflächen</div>
<div class="t" style="left:1268.6px;top:239px;font-size:18px;line-height:21.6px;color:#d3d9de;transform:scale(0.25) translateX(-50%);">AAA</div>
<div class="t" style="left:705.2px;top:300px;font-size:18.8px;line-height:22.56px;color:#d3d9de;transform:scale(0.25) translateX(-50%);">8</div>
<div class="t" style="left:848px;top:291px;font-size:19.6px;line-height:23.52px;color:#d3d9de;transform:scale(0.25) translateX(-50%);">0,010</div>
<div class="t" style="left:822.7px;top:309px;font-size:19.6px;line-height:23.52px;color:#d3d9de;transform:scale(0.25) translateX(-50%);">0,000</div>
<div class="t" style="left:1268.6px;top:310px;font-size:18px;line-height:21.6px;color:#d3d9de;transform:scale(0.25) translateX(-50%);">AAA</div>
<svg class="a" style="left:1276px;top:85px;" width="14" height="231" viewBox="1276 85 14 231"><path d="M1276.8 100.9 l5.2 4.9 l6.9 -9.8" fill="none" stroke="#62bd6a" stroke-width="1.9"/><path d="M1276.8 171.5 l5.2 4.9 l6.9 -9.8" fill="none" stroke="#62bd6a" stroke-width="1.9"/><path d="M1276.8 242.1 l5.2 4.9 l6.9 -9.8" fill="none" stroke="#62bd6a" stroke-width="1.9"/><path d="M1276.8 312.8 l5.2 4.9 l6.9 -9.8" fill="none" stroke="#62bd6a" stroke-width="1.9"/></svg>
<div class="a" style="left:1290px;top:65px;width:5.6px;height:261.8px;background:#f4f6f8;"></div>
<div class="a" style="left:1290px;top:70.4px;width:5.6px;height:58px;background:#aeb5bc;"></div>
<svg class="a" style="left:1290px;top:65px" width="5.6" height="262" viewBox="0 0 5.6 262"><path d="M1.4 4 L2.8 2.2 L4.2 4 M1.4 258 L2.8 259.8 L4.2 258" fill="none" stroke="#4a545c" stroke-width="0.7"/></svg>
<svg class="a" style="left:735px;top:76px;" width="55" height="242" viewBox="735 76 55 242"><rect x="746.45" y="84.8" width="30.5" height="11.5" fill="none" stroke="#d5dade" stroke-width="0.6"/><path d="M746.45 88.59H776.95 M746.45 93.08H776.95" stroke="#d5dade" stroke-width="0.5"/><path d="M747.45 90.78H775.95" stroke="#d9d44e" stroke-width="0.7" stroke-dasharray="4 1" opacity=".8"/><path d="M748.45 84.2 q2.65 -11.6 5.3 0 q2.65 -11.6 5.3 0 q2.65 -11.6 5.3 0 q2.65 -11.6 5.3 0 q2.65 -11.6 5.3 0" fill="none" stroke="#d5dade" stroke-width="0.6"/><path d="M749.95 83.9 q2.65 -11.6 5.3 0 q2.65 -11.6 5.3 0 q2.65 -11.6 5.3 0 q2.65 -11.6 5.3 0 q2.65 -11.6 5.3 0" fill="none" stroke="#d9d44e" stroke-width="0.55" opacity=".8"/><path d="M748.45 102.7 q2.65 -11.2 5.3 0 q2.65 -11.2 5.3 0 q2.65 -11.2 5.3 0 q2.65 -11.2 5.3 0 q2.65 -11.2 5.3 0" fill="none" stroke="#d5dade" stroke-width="0.6"/><path d="M749.95 103.1 q2.65 -11.2 5.3 0 q2.65 -11.2 5.3 0 q2.65 -11.2 5.3 0 q2.65 -11.2 5.3 0 q2.65 -11.2 5.3 0" fill="none" stroke="#d9d44e" stroke-width="0.55" opacity=".8"/><path d="M737 96.9H746.4M776.9 96.9H786.6M738.8 97V103.6M785 97V103.6" stroke="#d9d44e" stroke-width="0.7"/><polygon points="737.6,99 738.8,96.6 740,99" fill="#d9d44e"/><polygon points="783.8,99 785,96.6 786.2,99" fill="#d9d44e"/><rect x="749.35" y="154.9" width="24.3" height="8" fill="none" stroke="#d5dade" stroke-width="0.6"/><path d="M749.35 157.54H773.65 M749.35 160.66H773.65" stroke="#d5dade" stroke-width="0.5"/><path d="M750.35 159.06H772.65" stroke="#d9d44e" stroke-width="0.7" stroke-dasharray="4 1" opacity=".8"/><path d="M751.35 154.3 q2.03 -8.8 4.06 0 q2.03 -8.8 4.06 0 q2.03 -8.8 4.06 0 q2.03 -8.8 4.06 0 q2.03 -8.8 4.06 0" fill="none" stroke="#d5dade" stroke-width="0.6"/><path d="M752.85 154 q2.03 -8.8 4.06 0 q2.03 -8.8 4.06 0 q2.03 -8.8 4.06 0 q2.03 -8.8 4.06 0 q2.03 -8.8 4.06 0" fill="none" stroke="#d9d44e" stroke-width="0.55" opacity=".8"/><path d="M751.35 169.3 q2.03 -8.52 4.06 0 q2.03 -8.52 4.06 0 q2.03 -8.52 4.06 0 q2.03 -8.52 4.06 0 q2.03 -8.52 4.06 0" fill="none" stroke="#d5dade" stroke-width="0.6"/><path d="M752.85 169.7 q2.03 -8.52 4.06 0 q2.03 -8.52 4.06 0 q2.03 -8.52 4.06 0 q2.03 -8.52 4.06 0 q2.03 -8.52 4.06 0" fill="none" stroke="#d9d44e" stroke-width="0.55" opacity=".8"/><path d="M751.3 164V172M772.5 164V172" stroke="#d9d44e" stroke-width="0.8"/><polygon points="750.1,166.2 751.3,163.6 752.5,166.2" fill="#d9d44e"/><polygon points="771.3,166.2 772.5,163.6 773.7,166.2" fill="#d9d44e"/><g transform="translate(752.4 219.2) scale(.72) translate(-265.2 -75.6)"><path d="M280 75.6 L273.5 75.9 L266.5 84.5 L265.2 87.3 L266.2 89.2 L266.5 94.4 L265.2 96.4 L267.5 101.1 L268.5 106.3 L271.4 110.5 L276.1 111.5 L280 111.3" fill="none" stroke="#d9d44e" stroke-width="0.75" stroke-linejoin="round"/><path d="M280 75.6 L275.3 80.3 L275.6 82.9 L277.6 84.2 L279.2 82.4 L284.4 80.3 L286.2 83.2 L286.7 86 M277.6 84.2 L279.2 91.8 M280.2 95.9 L280 103.2 L275.6 104.5 L275.3 107.4 L281.8 110.7 M279.7 103.2 L287 104.5 L288.8 98 L288.6 94.9" fill="none" stroke="#d5dade" stroke-width="0.75" stroke-linejoin="round"/><path d="M281.4 92.8 V86.6 H288.8 V93.3 M279.2 91.8 L286.7 88.4" fill="none" stroke="#d9d44e" stroke-width="0.69" opacity=".85"/><path d="M270.4 93.3 H290.1 M270.4 94.9 H290.1" fill="none" stroke="#d9d44e" stroke-width="0.75"/><path d="M271.1 90.5 V98.5" stroke="#d9d44e" stroke-width="1.38"/><path d="M286.5 92.2 V95.8" stroke="#d9d44e" stroke-width="1.12"/></g><g transform="translate(761 306.2) scale(.72) translate(-277.1 -183.9)"><path d="M277.1 173.7 Q277.89 174.53 278.8 173.84 L279.85 171.6 Q281.71 171.1 282.82 172.67 L282.2 175.07L282.2 175.07 Q282.46 176.18 283.6 176.04 L285.63 174.63 Q287.49 175.12 287.67 177.04 L285.93 178.8L285.93 178.8 Q285.61 179.9 286.66 180.34 L289.12 180.13 Q290.49 181.49 289.68 183.24 L287.3 183.9L287.3 183.9 Q286.47 184.69 287.16 185.6 L289.4 186.65 Q289.9 188.51 288.33 189.62 L285.93 189L285.93 189 Q284.82 189.26 284.96 190.4 L286.37 192.43 Q285.88 194.29 283.96 194.47 L282.2 192.73L282.2 192.73 Q281.1 192.41 280.66 193.46 L280.87 195.92 Q279.51 197.29 277.76 196.48 L277.1 194.1L277.1 194.1 Q276.31 193.27 275.4 193.96 L274.35 196.2 Q272.49 196.7 271.38 195.13 L272 192.73L272 192.73 Q271.74 191.62 270.6 191.76 L268.57 193.17 Q266.71 192.68 266.53 190.76 L268.27 189L268.27 189 Q268.59 187.9 267.54 187.46 L265.08 187.67 Q263.71 186.31 264.52 184.56 L266.9 183.9L266.9 183.9 Q267.73 183.11 267.04 182.2 L264.8 181.15 Q264.3 179.29 265.87 178.18 L268.27 178.8L268.27 178.8 Q269.38 178.54 269.24 177.4 L267.83 175.37 Q268.32 173.51 270.24 173.33 L272 175.07L272 175.07 Q273.1 175.39 273.54 174.34 L273.33 171.88 Q274.69 170.51 276.44 171.32 L277.1 173.7Z" fill="none" stroke="#d5dade" stroke-width="0.75" stroke-linejoin="round"/><circle cx="277.1" cy="183.9" r="5.7" fill="none" stroke="#d5dade" stroke-width="0.75"/><path d="M275.4 172.5 L274.9 162.6 L279.7 161.7 M282.5 172.5 L286.3 163.1 L291 165" fill="none" stroke="#d9d44e" stroke-width="1.25" stroke-linejoin="round"/><path d="M259.3 174 L266.4 178.2 M257.9 184.8 L265.5 184.2 M297.6 175.8 L289.6 178.7 M267.8 167.3 L270.7 171.6 M290.5 170.2 L288.6 173" fill="none" stroke="#d9d44e" stroke-width="0.69"/></g></svg>
<svg class="a" style="left:860px;top:125px;" width="225" height="152" viewBox="860 125 225 152"><rect x="862" y="126.6" width="8.6" height="7.4" fill="none" stroke="#8f99a2" stroke-width="0.5"/><path d="M862 129h8.6M862 131.5h8.6M865 126.6v7.4" stroke="#8f99a2" stroke-width="0.4"/><rect x="872.6" y="129.7" width="1" height="4.4" fill="#8f99a2"/><rect x="874.2" y="127.5" width="1" height="6.6" fill="#8f99a2"/><rect x="875.8" y="130.7" width="1" height="3.4" fill="#8f99a2"/><rect x="877.4" y="128.5" width="1" height="5.6" fill="#8f99a2"/><rect x="1062" y="126.6" width="8.6" height="7.4" fill="none" stroke="#8f99a2" stroke-width="0.5"/><path d="M1062 129h8.6M1062 131.5h8.6M1065 126.6v7.4" stroke="#8f99a2" stroke-width="0.4"/><rect x="1072.6" y="129.7" width="1" height="4.4" fill="#8f99a2"/><rect x="1074.2" y="127.5" width="1" height="6.6" fill="#8f99a2"/><rect x="1075.8" y="130.7" width="1" height="3.4" fill="#8f99a2"/><rect x="1077.4" y="128.5" width="1" height="5.6" fill="#8f99a2"/><rect x="862" y="197.3" width="8.6" height="7.4" fill="none" stroke="#8f99a2" stroke-width="0.5"/><path d="M862 199.7h8.6M862 202.2h8.6M865 197.3v7.4" stroke="#8f99a2" stroke-width="0.4"/><rect x="872.6" y="200.4" width="1" height="4.4" fill="#8f99a2"/><rect x="874.2" y="198.2" width="1" height="6.6" fill="#8f99a2"/><rect x="875.8" y="201.4" width="1" height="3.4" fill="#8f99a2"/><rect x="877.4" y="199.2" width="1" height="5.6" fill="#8f99a2"/><rect x="862" y="267.7" width="8.6" height="7.4" fill="none" stroke="#8f99a2" stroke-width="0.5"/><path d="M862 270.1h8.6M862 272.6h8.6M865 267.7v7.4" stroke="#8f99a2" stroke-width="0.4"/><rect x="872.6" y="270.8" width="1" height="4.4" fill="#8f99a2"/><rect x="874.2" y="268.6" width="1" height="6.6" fill="#8f99a2"/><rect x="875.8" y="271.8" width="1" height="3.4" fill="#8f99a2"/><rect x="877.4" y="269.6" width="1" height="5.6" fill="#8f99a2"/></svg>
<svg class="a" style="left:876.5px;top:73.6px;" width="182.4" height="44.8" viewBox="876.5 73.6 182.4 44.8"><defs><linearGradient id="c1l" x1="0" y1="0" x2="0" y2="1"><stop offset="0" stop-color="#b3bcc6"/><stop offset="1" stop-color="#dbe1e8"/></linearGradient></defs><rect x="876.5" y="73.6" width="182.4" height="44.8" fill="url(#c1l)"/><rect x="876.5" y="95.8" width="182.4" height="22.6" fill="#e3e9ef" opacity=".35"/><rect x="876.5" y="73.6" width="182.4" height="44.8" fill="none" stroke="#2d3439" stroke-width="0.8" stroke-dasharray="1.4 0.5"/><path d="M876.5 80.9H1058.9" stroke="#8c97a1" stroke-width="0.5" stroke-dasharray="0.8 1.2"/><path d="M876.5 88.4H1058.9" stroke="#8c97a1" stroke-width="0.5" stroke-dasharray="0.8 1.2"/><path d="M876.5 103.1H1058.9" stroke="#8c97a1" stroke-width="0.5" stroke-dasharray="0.8 1.2"/><path d="M876.5 110.5H1058.9" stroke="#8c97a1" stroke-width="0.5" stroke-dasharray="0.8 1.2"/><path d="M876.5 95.8H1058.9" stroke="#8f99a3" stroke-width="0.8"/><path d="M903.1 96V111" stroke="#b4d04c" stroke-width="0.9"/><path d="M958.5 96V111" stroke="#6cc07a" stroke-width="1.1"/><path d="M950.5 96V109" stroke="#b7d8c0" stroke-width="0.4"/></svg>
<svg class="a" style="left:1076px;top:73.6px;" width="182.2" height="44.8" viewBox="1076 73.6 182.2 44.8"><defs><linearGradient id="c1r" x1="0" y1="0" x2="0" y2="1"><stop offset="0" stop-color="#b3bcc6"/><stop offset="1" stop-color="#dbe1e8"/></linearGradient></defs><rect x="1076" y="73.6" width="182.2" height="44.8" fill="url(#c1r)"/><rect x="1076" y="95.8" width="182.2" height="22.6" fill="#e3e9ef" opacity=".35"/><rect x="1076" y="73.6" width="182.2" height="44.8" fill="none" stroke="#2d3439" stroke-width="0.8" stroke-dasharray="1.4 0.5"/><path d="M1076 80.9H1258.2" stroke="#8c97a1" stroke-width="0.5" stroke-dasharray="0.8 1.2"/><path d="M1076 88.4H1258.2" stroke="#8c97a1" stroke-width="0.5" stroke-dasharray="0.8 1.2"/><path d="M1076 103.1H1258.2" stroke="#8c97a1" stroke-width="0.5" stroke-dasharray="0.8 1.2"/><path d="M1076 110.5H1258.2" stroke="#8c97a1" stroke-width="0.5" stroke-dasharray="0.8 1.2"/><path d="M1076 95.8H1258.2" stroke="#8f99a3" stroke-width="0.8"/><path d="M1083.2 96V111" stroke="#6cc07a" stroke-width="0.7"/><path d="M1107.2 96V111" stroke="#6cc07a" stroke-width="0.6"/><path d="M1093.4 96V109" stroke="#b7d8c0" stroke-width="0.4"/><path d="M1133.2 81V95.6" stroke="#a9d6a0" stroke-width="0.9"/><path d="M1131.4 82V95.6" stroke="#cfe2b0" stroke-width="0.5"/><path d="M1139 86V95.6" stroke="#b7d8c0" stroke-width="0.4"/><path d="M1142.6 88V95.6" stroke="#b7d8c0" stroke-width="0.4"/><path d="M1163.6 96V111" stroke="#6cc07a" stroke-width="0.6"/><path d="M1185.4 96V111" stroke="#6cc07a" stroke-width="1.6"/><path d="M1188 96V111" stroke="#6cc07a" stroke-width="0.7"/><path d="M1191.4 96V110" stroke="#8fcb9a" stroke-width="0.6"/></svg>
<div class="t" style="left:873.6px;top:78px;font-size:16.8px;line-height:20.16px;color:#d3d9de;transform:scale(0.25) translateX(-100%);">0,003</div>
<div class="t" style="left:873.6px;top:86px;font-size:16.8px;line-height:20.16px;color:#d3d9de;transform:scale(0.25) translateX(-100%);">0,001</div>
<div class="t" style="left:873.6px;top:93px;font-size:16.8px;line-height:20.16px;color:#d3d9de;transform:scale(0.25) translateX(-100%);">0,000</div>
<div class="t" style="left:873.6px;top:101px;font-size:16.8px;line-height:20.16px;color:#d3d9de;transform:scale(0.25) translateX(-100%);">-0,001</div>
<div class="t" style="left:873.6px;top:108px;font-size:16.8px;line-height:20.16px;color:#d3d9de;transform:scale(0.25) translateX(-100%);">-0,003</div>
<div class="t" style="left:1073.2px;top:78px;font-size:16.8px;line-height:20.16px;color:#d3d9de;transform:scale(0.25) translateX(-100%);">0,003</div>
<div class="t" style="left:1073.2px;top:86px;font-size:16.8px;line-height:20.16px;color:#d3d9de;transform:scale(0.25) translateX(-100%);">0,001</div>
<div class="t" style="left:1073.2px;top:93px;font-size:16.8px;line-height:20.16px;color:#d3d9de;transform:scale(0.25) translateX(-100%);">0,000</div>
<div class="t" style="left:1073.2px;top:101px;font-size:16.8px;line-height:20.16px;color:#d3d9de;transform:scale(0.25) translateX(-100%);">-0,001</div>
<div class="t" style="left:1073.2px;top:108px;font-size:16.8px;line-height:20.16px;color:#d3d9de;transform:scale(0.25) translateX(-100%);">-0,003</div>
<div class="t" style="left:890.9px;top:119px;font-size:16.4px;line-height:19.68px;color:#d3d9de;transform:scale(0.25) translateX(-50%);">37</div>
<div class="t" style="left:1090.4px;top:119px;font-size:16.4px;line-height:19.68px;color:#d3d9de;transform:scale(0.25) translateX(-50%);">37</div>
<div class="t" style="left:905.62px;top:119px;font-size:16.4px;line-height:19.68px;color:#d3d9de;transform:scale(0.25) translateX(-50%);">74</div>
<div class="t" style="left:1105.12px;top:119px;font-size:16.4px;line-height:19.68px;color:#d3d9de;transform:scale(0.25) translateX(-50%);">74</div>
<div class="t" style="left:920.34px;top:119px;font-size:16.4px;line-height:19.68px;color:#d3d9de;transform:scale(0.25) translateX(-50%);">111</div>
<div class="t" style="left:1119.84px;top:119px;font-size:16.4px;line-height:19.68px;color:#d3d9de;transform:scale(0.25) translateX(-50%);">111</div>
<div class="t" style="left:935.06px;top:119px;font-size:16.4px;line-height:19.68px;color:#d3d9de;transform:scale(0.25) translateX(-50%);">148</div>
<div class="t" style="left:1134.56px;top:119px;font-size:16.4px;line-height:19.68px;color:#d3d9de;transform:scale(0.25) translateX(-50%);">148</div>
<div class="t" style="left:949.78px;top:119px;font-size:16.4px;line-height:19.68px;color:#d3d9de;transform:scale(0.25) translateX(-50%);">185</div>
<div class="t" style="left:1149.28px;top:119px;font-size:16.4px;line-height:19.68px;color:#d3d9de;transform:scale(0.25) translateX(-50%);">185</div>
<div class="t" style="left:964.5px;top:119px;font-size:16.4px;line-height:19.68px;color:#d3d9de;transform:scale(0.25) translateX(-50%);">222</div>
<div class="t" style="left:1164px;top:119px;font-size:16.4px;line-height:19.68px;color:#d3d9de;transform:scale(0.25) translateX(-50%);">222</div>
<div class="t" style="left:979.22px;top:119px;font-size:16.4px;line-height:19.68px;color:#d3d9de;transform:scale(0.25) translateX(-50%);">259</div>
<div class="t" style="left:1178.72px;top:119px;font-size:16.4px;line-height:19.68px;color:#d3d9de;transform:scale(0.25) translateX(-50%);">259</div>
<div class="t" style="left:993.94px;top:119px;font-size:16.4px;line-height:19.68px;color:#d3d9de;transform:scale(0.25) translateX(-50%);">296</div>
<div class="t" style="left:1193.44px;top:119px;font-size:16.4px;line-height:19.68px;color:#d3d9de;transform:scale(0.25) translateX(-50%);">296</div>
<div class="t" style="left:1008.66px;top:119px;font-size:16.4px;line-height:19.68px;color:#d3d9de;transform:scale(0.25) translateX(-50%);">333</div>
<div class="t" style="left:1208.16px;top:119px;font-size:16.4px;line-height:19.68px;color:#d3d9de;transform:scale(0.25) translateX(-50%);">333</div>
<div class="t" style="left:1023.38px;top:119px;font-size:16.4px;line-height:19.68px;color:#d3d9de;transform:scale(0.25) translateX(-50%);">370</div>
<div class="t" style="left:1222.88px;top:119px;font-size:16.4px;line-height:19.68px;color:#d3d9de;transform:scale(0.25) translateX(-50%);">370</div>
<div class="t" style="left:1038.1px;top:119px;font-size:16.4px;line-height:19.68px;color:#d3d9de;transform:scale(0.25) translateX(-50%);">407</div>
<div class="t" style="left:1237.6px;top:119px;font-size:16.4px;line-height:19.68px;color:#d3d9de;transform:scale(0.25) translateX(-50%);">407</div>
<div class="t" style="left:1052.82px;top:119px;font-size:16.4px;line-height:19.68px;color:#d3d9de;transform:scale(0.25) translateX(-50%);">444</div>
<div class="t" style="left:1252.32px;top:119px;font-size:16.4px;line-height:19.68px;color:#d3d9de;transform:scale(0.25) translateX(-50%);">444</div>
<div class="t" style="left:923.8px;top:127px;font-size:19.2px;line-height:23.04px;color:#d3d9de;transform:scale(0.25) translateX(-50%);">0,001</div>
<div class="t" style="left:989.5px;top:125px;font-size:18.4px;line-height:22.08px;color:#d3d9de;transform:scale(0.25) translateX(-50%);">Min</div>
<div class="t" style="left:989.5px;top:130px;font-size:18.4px;line-height:22.08px;color:#d3d9de;transform:scale(0.25) translateX(-50%);">Max</div>
<div class="t" style="left:1037px;top:125px;font-size:18.4px;line-height:22.08px;color:#d3d9de;transform:scale(0.25) translateX(-50%);">-0,001</div>
<div class="t" style="left:1037px;top:130px;font-size:18.4px;line-height:22.08px;color:#d3d9de;transform:scale(0.25) translateX(-50%);">0,000</div>
<div class="t" style="left:1123.4px;top:127px;font-size:19.2px;line-height:23.04px;color:#d3d9de;transform:scale(0.25) translateX(-50%);">0,002</div>
<div class="t" style="left:1189px;top:125px;font-size:18.4px;line-height:22.08px;color:#d3d9de;transform:scale(0.25) translateX(-50%);">Min</div>
<div class="t" style="left:1189px;top:130px;font-size:18.4px;line-height:22.08px;color:#d3d9de;transform:scale(0.25) translateX(-50%);">Max</div>
<div class="t" style="left:1236.8px;top:125px;font-size:18.4px;line-height:22.08px;color:#d3d9de;transform:scale(0.25) translateX(-50%);">-0,001</div>
<div class="t" style="left:1236.8px;top:130px;font-size:18.4px;line-height:22.08px;color:#d3d9de;transform:scale(0.25) translateX(-50%);">0,001</div>
<svg class="a" style="left:878px;top:136.7px;" width="380.2" height="51.5" viewBox="878 136.7 380.2 51.5"><defs><linearGradient id="c2" x1="0" y1="0" x2="0" y2="1"><stop offset="0" stop-color="#b3bcc6"/><stop offset="1" stop-color="#dbe1e8"/></linearGradient></defs><rect x="878" y="136.7" width="380.2" height="51.5" fill="url(#c2)"/><path d="M878 141.4H1258.2" stroke="#98a3ad" stroke-width="0.45" stroke-dasharray="0.8 1.2"/><path d="M878 148.9H1258.2" stroke="#98a3ad" stroke-width="0.45" stroke-dasharray="0.8 1.2"/><path d="M878 156.4H1258.2" stroke="#98a3ad" stroke-width="0.45" stroke-dasharray="0.8 1.2"/><path d="M878 163.8H1258.2" stroke="#98a3ad" stroke-width="0.45" stroke-dasharray="0.8 1.2"/><path d="M878 171.3H1258.2" stroke="#98a3ad" stroke-width="0.45" stroke-dasharray="0.8 1.2"/><path d="M878 178.7H1258.2" stroke="#98a3ad" stroke-width="0.45" stroke-dasharray="0.8 1.2"/><rect x="890.3" y="155.2" width="22" height="33" fill="#e9dd45" stroke="#a9a23a" stroke-width="0.5"/><rect x="914.11" y="147.5" width="22" height="40.7" fill="#80c896" stroke="#e6f2ea" stroke-width="0.5"/><rect x="937.92" y="140.3" width="22" height="47.9" fill="#e9dd45" stroke="#a9a23a" stroke-width="0.5"/><rect x="961.73" y="151.6" width="22" height="36.6" fill="#80c896" stroke="#e6f2ea" stroke-width="0.5"/><rect x="985.54" y="155.2" width="22" height="33" fill="#80c896" stroke="#e6f2ea" stroke-width="0.5"/><rect x="1009.35" y="151.6" width="22" height="36.6" fill="#80c896" stroke="#e6f2ea" stroke-width="0.5"/><rect x="1033.16" y="155.2" width="22" height="33" fill="#80c896" stroke="#e6f2ea" stroke-width="0.5"/><rect x="1056.97" y="151.6" width="22" height="36.6" fill="#80c896" stroke="#e6f2ea" stroke-width="0.5"/><rect x="1080.78" y="147.5" width="22" height="40.7" fill="#80c896" stroke="#e6f2ea" stroke-width="0.5"/><rect x="1104.59" y="155.2" width="22" height="33" fill="#80c896" stroke="#e6f2ea" stroke-width="0.5"/><rect x="1128.4" y="155.2" width="22" height="33" fill="#80c896" stroke="#e6f2ea" stroke-width="0.5"/><rect x="1152.21" y="147.5" width="22" height="40.7" fill="#80c896" stroke="#e6f2ea" stroke-width="0.5"/><rect x="1176.02" y="144.4" width="22" height="43.8" fill="#80c896" stroke="#e6f2ea" stroke-width="0.5"/><rect x="1199.83" y="144.4" width="22" height="43.8" fill="#80c896" stroke="#e6f2ea" stroke-width="0.5"/><rect x="1223.64" y="144.4" width="22" height="43.8" fill="#80c896" stroke="#e6f2ea" stroke-width="0.5"/><path d="M878 188.2H1258.2" stroke="#2d3439" stroke-width="0.6" stroke-dasharray="1.4 0.5"/></svg>
<div class="t" style="left:875px;top:139px;font-size:16.8px;line-height:20.16px;color:#d3d9de;transform:scale(0.25) translateX(-100%);">32,541</div>
<div class="t" style="left:875px;top:146px;font-size:16.8px;line-height:20.16px;color:#d3d9de;transform:scale(0.25) translateX(-100%);">32,540</div>
<div class="t" style="left:875px;top:154px;font-size:16.8px;line-height:20.16px;color:#d3d9de;transform:scale(0.25) translateX(-100%);">32,538</div>
<div class="t" style="left:875px;top:161px;font-size:16.8px;line-height:20.16px;color:#d3d9de;transform:scale(0.25) translateX(-100%);">32,536</div>
<div class="t" style="left:875px;top:169px;font-size:16.8px;line-height:20.16px;color:#d3d9de;transform:scale(0.25) translateX(-100%);">32,534</div>
<div class="t" style="left:875px;top:176px;font-size:16.8px;line-height:20.16px;color:#d3d9de;transform:scale(0.25) translateX(-100%);">32,533</div>
<div class="t" style="left:901.3px;top:190px;font-size:16.8px;line-height:20.16px;color:#d3d9de;transform:scale(0.25) translateX(-50%);">1</div>
<div class="t" style="left:925.11px;top:190px;font-size:16.8px;line-height:20.16px;color:#d3d9de;transform:scale(0.25) translateX(-50%);">2</div>
<div class="t" style="left:948.92px;top:190px;font-size:16.8px;line-height:20.16px;color:#d3d9de;transform:scale(0.25) translateX(-50%);">3</div>
<div class="t" style="left:972.73px;top:190px;font-size:16.8px;line-height:20.16px;color:#d3d9de;transform:scale(0.25) translateX(-50%);">4</div>
<div class="t" style="left:996.54px;top:190px;font-size:16.8px;line-height:20.16px;color:#d3d9de;transform:scale(0.25) translateX(-50%);">5</div>
<div class="t" style="left:1020.35px;top:190px;font-size:16.8px;line-height:20.16px;color:#d3d9de;transform:scale(0.25) translateX(-50%);">6</div>
<div class="t" style="left:1044.16px;top:190px;font-size:16.8px;line-height:20.16px;color:#d3d9de;transform:scale(0.25) translateX(-50%);">7</div>
<div class="t" style="left:1067.97px;top:190px;font-size:16.8px;line-height:20.16px;color:#d3d9de;transform:scale(0.25) translateX(-50%);">8</div>
<div class="t" style="left:1091.78px;top:190px;font-size:16.8px;line-height:20.16px;color:#d3d9de;transform:scale(0.25) translateX(-50%);">9</div>
<div class="t" style="left:1115.59px;top:190px;font-size:16.8px;line-height:20.16px;color:#d3d9de;transform:scale(0.25) translateX(-50%);">10</div>
<div class="t" style="left:1139.4px;top:190px;font-size:16.8px;line-height:20.16px;color:#d3d9de;transform:scale(0.25) translateX(-50%);">11</div>
<div class="t" style="left:1163.21px;top:190px;font-size:16.8px;line-height:20.16px;color:#d3d9de;transform:scale(0.25) translateX(-50%);">12</div>
<div class="t" style="left:1187.02px;top:190px;font-size:16.8px;line-height:20.16px;color:#d3d9de;transform:scale(0.25) translateX(-50%);">13</div>
<div class="t" style="left:1210.83px;top:190px;font-size:16.8px;line-height:20.16px;color:#d3d9de;transform:scale(0.25) translateX(-50%);">14</div>
<div class="t" style="left:1234.64px;top:190px;font-size:16.8px;line-height:20.16px;color:#d3d9de;transform:scale(0.25) translateX(-50%);">15</div>
<div class="t" style="left:973.5px;top:197px;font-size:19.2px;line-height:23.04px;color:#d3d9de;transform:scale(0.25) translateX(-50%);">0.004</div>
<div class="t" style="left:1114.3px;top:195px;font-size:18.4px;line-height:22.08px;color:#d3d9de;transform:scale(0.25) translateX(-50%);">Min</div>
<div class="t" style="left:1114.3px;top:201px;font-size:18.4px;line-height:22.08px;color:#d3d9de;transform:scale(0.25) translateX(-50%);">Max</div>
<div class="t" style="left:1211.8px;top:195px;font-size:18.4px;line-height:22.08px;color:#d3d9de;transform:scale(0.25) translateX(-50%);">32,539</div>
<div class="t" style="left:1211.8px;top:201px;font-size:18.4px;line-height:22.08px;color:#d3d9de;transform:scale(0.25) translateX(-50%);">32,543</div>
<svg class="a" style="left:876.5px;top:206.7px;" width="381.7" height="57.9" viewBox="876.5 206.7 381.7 57.9"><defs><linearGradient id="c3" x1="0" y1="0" x2="0" y2="1"><stop offset="0" stop-color="#b3bcc6"/><stop offset="1" stop-color="#dbe1e8"/></linearGradient></defs><rect x="876.5" y="206.7" width="381.7" height="57.9" fill="url(#c3)"/><path d="M876.5 213.7H1258.2" stroke="#98a3ad" stroke-width="0.45" stroke-dasharray="0.8 1.2"/><path d="M876.5 221H1258.2" stroke="#98a3ad" stroke-width="0.45" stroke-dasharray="0.8 1.2"/><path d="M876.5 235.6H1258.2" stroke="#98a3ad" stroke-width="0.45" stroke-dasharray="0.8 1.2"/><path d="M876.5 242.9H1258.2" stroke="#98a3ad" stroke-width="0.45" stroke-dasharray="0.8 1.2"/><path d="M876.5 250.2H1258.2" stroke="#98a3ad" stroke-width="0.45" stroke-dasharray="0.8 1.2"/><path d="M876.5 257.5H1258.2" stroke="#98a3ad" stroke-width="0.45" stroke-dasharray="0.8 1.2"/><path d="M876.5 228.3H1258.2" stroke="#6f7a84" stroke-width="0.6"/><path d="M911.1 214.3 C925 220 935 228.4 946.5 228.6 C957 228.8 962 226.6 970.4 227 C990 228 996 257.6 1015.6 257.8 C1032 258 1035 228.4 1050.2 228.4 C1065 228.4 1069 257.8 1084.9 257.8 C1101 257.8 1103 213.6 1120.3 213.6 C1134 213.6 1142 228.6 1154.9 228.7 C1168 228.8 1176 214.3 1189.6 214.3 C1203 214.3 1214 224 1224.2 228.7" fill="none" stroke="#2f363c" stroke-width="0.7"/><circle cx="911.1" cy="214.3" r="1" fill="#d9d44e" stroke="#5a646c" stroke-width="0.3"/><circle cx="1015.6" cy="257.8" r="1" fill="#d9d44e" stroke="#5a646c" stroke-width="0.3"/><circle cx="1084.9" cy="257.8" r="1" fill="#d9707a" stroke="#5a646c" stroke-width="0.3"/><circle cx="946.5" cy="228.6" r="1" fill="#9aa4ad" stroke="#5a646c" stroke-width="0.3"/><circle cx="1050.2" cy="228.4" r="1" fill="#9aa4ad" stroke="#5a646c" stroke-width="0.3"/><circle cx="1120.3" cy="213.6" r="1" fill="#9aa4ad" stroke="#5a646c" stroke-width="0.3"/><circle cx="1154.9" cy="228.7" r="1" fill="#9aa4ad" stroke="#5a646c" stroke-width="0.3"/><circle cx="1189.6" cy="214.3" r="1" fill="#9aa4ad" stroke="#5a646c" stroke-width="0.3"/><circle cx="1224.2" cy="228.7" r="1" fill="#9aa4ad" stroke="#5a646c" stroke-width="0.3"/></svg>
<div class="t" style="left:873.6px;top:211px;font-size:16.8px;line-height:20.16px;color:#d3d9de;transform:scale(0.25) translateX(-100%);">0,003</div>
<div class="t" style="left:873.6px;top:219px;font-size:16.8px;line-height:20.16px;color:#d3d9de;transform:scale(0.25) translateX(-100%);">0,001</div>
<div class="t" style="left:873.6px;top:226px;font-size:16.8px;line-height:20.16px;color:#d3d9de;transform:scale(0.25) translateX(-100%);">0,000</div>
<div class="t" style="left:873.6px;top:233px;font-size:16.8px;line-height:20.16px;color:#d3d9de;transform:scale(0.25) translateX(-100%);">-0,001</div>
<div class="t" style="left:873.6px;top:240px;font-size:16.8px;line-height:20.16px;color:#d3d9de;transform:scale(0.25) translateX(-100%);">-0,003</div>
<div class="t" style="left:873.6px;top:248px;font-size:16.8px;line-height:20.16px;color:#d3d9de;transform:scale(0.25) translateX(-100%);">-0,004</div>
<div class="t" style="left:873.6px;top:255px;font-size:16.8px;line-height:20.16px;color:#d3d9de;transform:scale(0.25) translateX(-100%);">-0,006</div>
<div class="t" style="left:976.4px;top:266px;font-size:18.4px;line-height:22.08px;color:#d3d9de;transform:scale(0.25) translateX(-50%);">Min</div>
<div class="t" style="left:976.4px;top:271px;font-size:18.4px;line-height:22.08px;color:#d3d9de;transform:scale(0.25) translateX(-50%);">Max</div>
<div class="t" style="left:1165.7px;top:266px;font-size:18.4px;line-height:22.08px;color:#d3d9de;transform:scale(0.25) translateX(-50%);">0,003</div>
<div class="t" style="left:1165.7px;top:271px;font-size:18.4px;line-height:22.08px;color:#d3d9de;transform:scale(0.25) translateX(-50%);">0,003</div>
<svg class="a" style="left:876.5px;top:277.7px;" width="381.7" height="49.1" viewBox="876.5 277.7 381.7 49.1"><defs><linearGradient id="c4" x1="0" y1="0" x2="0" y2="1"><stop offset="0" stop-color="#b3bcc6"/><stop offset="1" stop-color="#dbe1e8"/></linearGradient></defs><rect x="876.5" y="277.7" width="381.7" height="49.1" fill="url(#c4)"/><path d="M876.5 277.7H1258.2" stroke="#2d3439" stroke-width="0.7" stroke-dasharray="3 0.6"/><path d="M876.5 294.9H1258.2" stroke="#98a3ad" stroke-width="0.45" stroke-dasharray="0.8 1.2"/><path d="M876.5 312.2H1258.2" stroke="#98a3ad" stroke-width="0.45" stroke-dasharray="0.8 1.2"/><path d="M876.5 286.5H1258.2 M876.5 320.9H1258.2" stroke="#e0767c" stroke-width="0.7"/><path d="M876.5 303.3H1258.2" stroke="#5f6a73" stroke-width="0.6"/><rect x="889.8" y="303.3" width="22" height="5.4" fill="#80c896" stroke="#3a4248" stroke-width="0.4"/><rect x="913.64" y="303.3" width="22" height="5.4" fill="#80c896" stroke="#3a4248" stroke-width="0.4"/><rect x="937.48" y="303.3" width="22" height="3.7" fill="#80c896" stroke="#3a4248" stroke-width="0.4"/><rect x="961.32" y="299.7" width="22" height="3.6" fill="#80c896" stroke="#3a4248" stroke-width="0.4"/><rect x="985.16" y="303.3" width="22" height="3.7" fill="#80c896" stroke="#3a4248" stroke-width="0.4"/><rect x="1009" y="298" width="22" height="5.3" fill="#80c896" stroke="#3a4248" stroke-width="0.4"/><rect x="1032.84" y="303.3" width="22" height="1.9" fill="#80c896" stroke="#3a4248" stroke-width="0.4"/><rect x="1056.68" y="303.3" width="22" height="14.3" fill="#e9dd45" stroke="#3a4248" stroke-width="0.4"/><rect x="1080.52" y="301.6" width="22" height="1.7" fill="#80c896" stroke="#3a4248" stroke-width="0.4"/><rect x="1152.04" y="298" width="22" height="5.3" fill="#80c896" stroke="#3a4248" stroke-width="0.4"/><rect x="1175.88" y="303.3" width="22" height="1.9" fill="#80c896" stroke="#3a4248" stroke-width="0.4"/><rect x="1199.72" y="296.3" width="22" height="7" fill="#e9dd45" stroke="#3a4248" stroke-width="0.4"/></svg>
<div class="t" style="left:873.6px;top:284px;font-size:16.8px;line-height:20.16px;color:#d3d9de;transform:scale(0.25) translateX(-100%);">0,010</div>
<div class="t" style="left:873.6px;top:292px;font-size:16.8px;line-height:20.16px;color:#d3d9de;transform:scale(0.25) translateX(-100%);">0,005</div>
<div class="t" style="left:873.6px;top:301px;font-size:16.8px;line-height:20.16px;color:#d3d9de;transform:scale(0.25) translateX(-100%);">0,000</div>
<div class="t" style="left:873.6px;top:310px;font-size:16.8px;line-height:20.16px;color:#d3d9de;transform:scale(0.25) translateX(-100%);">-0,005</div>
<div class="t" style="left:873.6px;top:318px;font-size:16.8px;line-height:20.16px;color:#d3d9de;transform:scale(0.25) translateX(-100%);">-0,010</div>
<div class="a" style="left:692.4px;top:338.6px;width:36.6px;height:25.2px;background:#49535b;"></div>
<div class="t" style="left:693.6px;top:339px;font-size:16.8px;line-height:20.16px;color:#c3cad0;transform:scale(0.25);">F1</div>
<div class="a" style="left:733.75px;top:338.6px;width:36.6px;height:25.2px;background:#49535b;"></div>
<div class="a" style="left:775.1px;top:338.6px;width:36.6px;height:25.2px;background:#49535b;"></div>
<div class="a" style="left:816.45px;top:338.6px;width:36.6px;height:25.2px;background:#49535b;"></div>
<div class="a" style="left:869.85px;top:338.6px;width:36.6px;height:25.2px;background:#49535b;"></div>
<div class="t" style="left:871.05px;top:339px;font-size:16.8px;line-height:20.16px;color:#c3cad0;transform:scale(0.25);">F5</div>
<div class="a" style="left:911.2px;top:338.6px;width:36.6px;height:25.2px;background:#49535b;"></div>
<div class="t" style="left:912.4px;top:339px;font-size:16.8px;line-height:20.16px;color:#c3cad0;transform:scale(0.25);">F6</div>
<div class="a" style="left:952.55px;top:338.6px;width:36.6px;height:25.2px;background:#49535b;"></div>
<div class="a" style="left:993.9px;top:338.6px;width:36.6px;height:25.2px;background:#49535b;"></div>
<div class="t" style="left:995.1px;top:339px;font-size:16.8px;line-height:20.16px;color:#c3cad0;transform:scale(0.25);">F8</div>
<div class="a" style="left:1047.3px;top:338.6px;width:36.6px;height:25.2px;background:#49535b;"></div>
<div class="a" style="left:1088.65px;top:338.6px;width:36.6px;height:25.2px;background:#49535b;"></div>
<div class="a" style="left:1130px;top:338.6px;width:36.6px;height:25.2px;background:#49535b;"></div>
<div class="t" style="left:1131.2px;top:339px;font-size:16.8px;line-height:20.16px;color:#c3cad0;transform:scale(0.25);">F11</div>
<div class="a" style="left:1171.35px;top:338.6px;width:36.6px;height:25.2px;background:#49535b;"></div>
<div class="t" style="left:1172.55px;top:339px;font-size:16.8px;line-height:20.16px;color:#c3cad0;transform:scale(0.25);">F12</div>
<svg class="a" style="left:692px;top:338px;" width="518" height="27" viewBox="692 338 518 27"><path d="M702.45 351.88 l5.7 5.7 l11.88 -12.35" fill="none" stroke="#a9b2ba" stroke-width="2.85" stroke-linejoin="miter"/><path d="M1182.2 344.2 L1196.6 358.6 M1196.6 344.2 L1182.2 358.6" stroke="#aeb6be" stroke-width="2.6" fill="none"/><polygon points="879.6,347.59 891.03,347.59 891.03,351.72 879.6,351.72" fill="#bcc4ca"/><polygon points="892.46,348.51 899.6,348.51 899.6,351.08 892.46,351.08" fill="#bcc4ca"/><polygon points="880.74,347.77 881.5,345.2 883.03,347.77" fill="#bcc4ca"/><polygon points="884.17,347.77 885.7,345.2 886.46,347.77" fill="#bcc4ca"/><polygon points="879.6,351.63 883.98,351.63 881.89,357.6" fill="#bcc4ca"/><polygon points="885.7,351.63 888.74,351.63 886.84,357.6" fill="#bcc4ca"/><rect x="925" y="344.6" width="11" height="5" fill="none" stroke="#bcc4ca" stroke-width="1.6"/><rect x="921.2" y="348.4" width="18.6" height="8.6" rx="1.4" fill="#bcc4ca"/><rect x="925.1" y="353.4" width="10.8" height="5.6" fill="#49535b" stroke="#bcc4ca" stroke-width="1.5"/><rect x="927.5" y="355.4" width="6" height="1.3" fill="#bcc4ca"/><path d="M1005.62 349.01 A7 7 0 0 1 1019.09 350.18" fill="none" stroke="#bcc4ca" stroke-width="2.4"/><polygon points="1019.78,354.08 1015.36,349.75 1022.45,348.5" fill="#bcc4ca"/><path d="M1018.78 353.79 A7 7 0 0 1 1005.31 352.62" fill="none" stroke="#bcc4ca" stroke-width="2.4"/><polygon points="1004.62,348.72 1009.04,353.05 1001.95,354.3" fill="#bcc4ca"/><path d="M1141 343.6 h7.4 l4.4 4.4 v11.8 h-11.8 z" fill="#aeb6bd"/><path d="M1148.4 343.6 v4.4 h4.4 z" fill="#7f8992"/><text x="1142" y="354.6" font-family="Liberation Sans,sans-serif" font-size="4.8" font-weight="bold" fill="#49535b">PDF</text><circle cx="1153" cy="357.8" r="3.2" fill="#aeb6bd" stroke="#49535b" stroke-width="0.7"/><path d="M1151.7 359.1 l2.6 -2.6" stroke="#49535b" stroke-width="0.9"/></svg>
<div class="a" style="left:1249.3px;top:353px;width:24.7px;height:10.4px;background:#49535b;border-radius:1px"></div>
<div class="t" style="left:1261.6px;top:356px;font-size:18.4px;line-height:22.08px;color:#c3cad0;transform:scale(0.25) translateX(-50%);">Help</div>
</section>
<section>
<div class="a" style="left:32px;top:436.2px;width:622px;height:337.3px;background:#353d43;background:linear-gradient(#2d3439,#373f45 15px,#353d43)"></div>
<div class="a" style="left:38.4px;top:440px;width:28.1px;height:11px;background:#626b74;border-radius:1.5px 1.5px 0 0"></div>
<div class="t" style="left:43.4px;top:443px;font-size:18.8px;line-height:22.56px;color:#e1e6ea;transform:scale(0.25);">Livebild</div>
<div class="a" style="left:38.4px;top:450.4px;width:211.4px;height:190.8px;background:#626b74;"></div>
<div class="a" style="left:250.3px;top:450.4px;width:204.4px;height:286.4px;background:#626b74;"></div>
<div class="a" style="left:42.2px;top:454.8px;width:201.3px;height:183.7px;background:#d7e2ee;"></div>
<svg class="a" style="left:42.2px;top:454.8px;" width="201.3" height="183.7" viewBox="42.2 454.8 201.3 183.7"><path d="M199.3 454.8 L214 468 Q216.4 470.4 216.4 472.4 L216.4 477.4 Q216.4 479.6 214 481.6 L201.5 493.2 Q199.4 495 196 496 L81.04 530.16 A16.71 16.71 0 0 0 81.04 562.24 L196 596 Q199.4 597 201.5 598.8 L214 606.6 Q216.4 608.4 216.4 610.6 L216.4 615.6 Q216.4 617.8 214 619.8 L199.3 638.5 L243.5 638.5 L243.5 454.8 Z" fill="#3cacc8"/><rect x="72" y="475.4" width="141.7" height="140.8" fill="none" stroke="#c8555a" stroke-width="0.5"/><path d="M72 511.2H213.7M143.4 475.4V616.2" stroke="#c8555a" stroke-width="0.5"/><path d="M141.8 505V516" stroke="#55636e" stroke-width="0.4"/><polygon points="134.6,511.4 137.8,511.6 136.8,513.6" fill="#3a4248"/><circle cx="240.8" cy="635.6" r="1.5" fill="#c3d436"/></svg>
<div class="t" style="left:146px;top:504px;font-size:25.6px;line-height:30.72px;color:#d0474c;transform:scale(0.25);font-weight:bold;">16.08</div>
<div class="t" style="left:73px;top:618px;font-size:13.6px;line-height:16.32px;color:#d0474c;transform:scale(0.25);">120</div>
<div class="t" style="left:144.4px;top:512px;font-size:12px;line-height:14.4px;color:#3a4248;transform:scale(0.25);">1</div>
<div class="t" style="left:255.4px;top:459px;font-size:19.8px;line-height:23.76px;color:#3f474e;transform:scale(0.25);">Abb.Nr.</div>
<div class="t" style="left:255.4px;top:469px;font-size:19.8px;line-height:23.76px;color:#3f474e;transform:scale(0.25);">Ident-Nummer</div>
<div class="t" style="left:255.4px;top:480px;font-size:19.8px;line-height:23.76px;color:#3f474e;transform:scale(0.25);">Bezeichnung</div>
<div class="t" style="left:255.4px;top:490px;font-size:19.8px;line-height:23.76px;color:#3f474e;transform:scale(0.25);">Z</div>
<div class="t" style="left:255.4px;top:500px;font-size:19.8px;line-height:23.76px;color:#3f474e;transform:scale(0.25);">X</div>
<div class="t" style="left:255.4px;top:511px;font-size:19.8px;line-height:23.76px;color:#3f474e;transform:scale(0.25);">Radius Soll</div>
<div class="t" style="left:255.4px;top:521px;font-size:19.8px;line-height:23.76px;color:#3f474e;transform:scale(0.25);">Winkel 1 Soll</div>
<div class="t" style="left:255.4px;top:531px;font-size:19.8px;line-height:23.76px;color:#3f474e;transform:scale(0.25);">Winkel 2 Soll</div>
<div class="a" style="left:295.4px;top:457.6px;width:32.2px;height:8.7px;background:#e9ecef;border-radius:.8px;box-shadow:inset 0 0 0 .4px #aeb6bd"></div>
<div class="t" style="left:296.3px;top:459px;font-size:20px;line-height:24px;color:#59626a;transform:scale(0.25);">1</div>
<div class="t" style="left:332.6px;top:459px;font-size:19.8px;line-height:23.76px;color:#3f474e;transform:scale(0.25);">Spitze</div>
<div class="t" style="left:395.2px;top:459px;font-size:19.8px;line-height:23.76px;color:#3f474e;transform:scale(0.25);">Stufe</div>
<div class="a" style="left:424.5px;top:457.6px;width:24.8px;height:8.7px;background:#e9ecef;border-radius:.8px;box-shadow:inset 0 0 0 .4px #aeb6bd"></div>
<div class="t" style="left:425.4px;top:459px;font-size:20px;line-height:24px;color:#59626a;transform:scale(0.25);">1</div>
<div class="a" style="left:444px;top:458.2px;width:4.9px;height:7.8px;background:#8d969e;border-radius:.6px"></div>
<div class="a" style="left:445.1px;top:461.2px;border:1.3px solid transparent;border-top:1.9px solid #2f363b;width:0;height:0"></div>
<div class="a" style="left:295.4px;top:468px;width:153.9px;height:8.7px;background:#e9ecef;border-radius:.8px;box-shadow:inset 0 0 0 .4px #aeb6bd"></div>
<div class="t" style="left:296.3px;top:469px;font-size:20px;line-height:24px;color:#59626a;transform:scale(0.25);">2311266</div>
<div class="a" style="left:295.4px;top:478.4px;width:153.9px;height:8.7px;background:#e9ecef;border-radius:.8px;box-shadow:inset 0 0 0 .4px #aeb6bd"></div>
<div class="t" style="left:296.3px;top:480px;font-size:20px;line-height:24px;color:#59626a;transform:scale(0.25);">Wälzfräser mit Schaft aus Hartmetall</div>
<div class="a" style="left:295.4px;top:488.8px;width:32.2px;height:8.7px;background:#e9ecef;border-radius:.8px;box-shadow:inset 0 0 0 .4px #aeb6bd"></div>
<div class="t" style="left:296.3px;top:490px;font-size:20px;line-height:24px;color:#59626a;transform:scale(0.25);">208.020</div>
<div class="a" style="left:295.4px;top:499.1px;width:32.2px;height:8.7px;background:#e9ecef;border-radius:.8px;box-shadow:inset 0 0 0 .4px #aeb6bd"></div>
<div class="t" style="left:296.3px;top:500px;font-size:20px;line-height:24px;color:#59626a;transform:scale(0.25);">32.529</div>
<div class="a" style="left:295.4px;top:509.5px;width:32.2px;height:8.7px;background:#e9ecef;border-radius:.8px;box-shadow:inset 0 0 0 .4px #aeb6bd"></div>
<div class="a" style="left:295.4px;top:519.9px;width:32.2px;height:8.7px;background:#e9ecef;border-radius:.8px;box-shadow:inset 0 0 0 .4px #aeb6bd"></div>
<div class="a" style="left:295.4px;top:530.2px;width:32.2px;height:8.7px;background:#e9ecef;border-radius:.8px;box-shadow:inset 0 0 0 .4px #aeb6bd"></div>
<div class="a" style="left:364px;top:488.8px;width:32px;height:8.7px;background:#e9ecef;border-radius:.8px;box-shadow:inset 0 0 0 .4px #aeb6bd"></div>
<div class="a" style="left:416.3px;top:488.8px;width:31.7px;height:8.7px;background:#e9ecef;border-radius:.8px;box-shadow:inset 0 0 0 .4px #aeb6bd"></div>
<div class="t" style="left:336.4px;top:490px;font-size:19.6px;line-height:23.52px;color:#3f474e;transform:scale(0.25) translateX(-50%);">R A Ø</div>
<div class="t" style="left:358.4px;top:490px;font-size:19.2px;line-height:23.04px;color:#3f474e;transform:scale(0.25) translateX(-50%);">o.T</div>
<div class="t" style="left:410.6px;top:490px;font-size:19.2px;line-height:23.04px;color:#3f474e;transform:scale(0.25) translateX(-50%);">u.T</div>
<div class="a" style="left:364px;top:499.1px;width:32px;height:8.7px;background:#e9ecef;border-radius:.8px;box-shadow:inset 0 0 0 .4px #aeb6bd"></div>
<div class="a" style="left:416.3px;top:499.1px;width:31.7px;height:8.7px;background:#e9ecef;border-radius:.8px;box-shadow:inset 0 0 0 .4px #aeb6bd"></div>
<div class="t" style="left:336.4px;top:500px;font-size:19.6px;line-height:23.52px;color:#3f474e;transform:scale(0.25) translateX(-50%);">R A Ø</div>
<div class="t" style="left:358.4px;top:500px;font-size:19.2px;line-height:23.04px;color:#3f474e;transform:scale(0.25) translateX(-50%);">o.T</div>
<div class="t" style="left:410.6px;top:500px;font-size:19.2px;line-height:23.04px;color:#3f474e;transform:scale(0.25) translateX(-50%);">u.T</div>
<div class="a" style="left:364px;top:509.5px;width:32px;height:8.7px;background:#e9ecef;border-radius:.8px;box-shadow:inset 0 0 0 .4px #aeb6bd"></div>
<div class="a" style="left:416.3px;top:509.5px;width:31.7px;height:8.7px;background:#e9ecef;border-radius:.8px;box-shadow:inset 0 0 0 .4px #aeb6bd"></div>
<div class="t" style="left:341.2px;top:511px;font-size:19.6px;line-height:23.52px;color:#3f474e;transform:scale(0.25) translateX(-50%);">D</div>
<div class="t" style="left:358.4px;top:511px;font-size:19.2px;line-height:23.04px;color:#3f474e;transform:scale(0.25) translateX(-50%);">o.T</div>
<div class="t" style="left:410.6px;top:511px;font-size:19.2px;line-height:23.04px;color:#3f474e;transform:scale(0.25) translateX(-50%);">u.T</div>
<div class="a" style="left:364px;top:519.9px;width:32px;height:8.7px;background:#e9ecef;border-radius:.8px;box-shadow:inset 0 0 0 .4px #aeb6bd"></div>
<div class="a" style="left:416.3px;top:519.9px;width:31.7px;height:8.7px;background:#e9ecef;border-radius:.8px;box-shadow:inset 0 0 0 .4px #aeb6bd"></div>
<div class="t" style="left:341.2px;top:521px;font-size:19.6px;line-height:23.52px;color:#3f474e;transform:scale(0.25) translateX(-50%);">S</div>
<div class="t" style="left:358.4px;top:521px;font-size:19.2px;line-height:23.04px;color:#3f474e;transform:scale(0.25) translateX(-50%);">o.T</div>
<div class="t" style="left:410.6px;top:521px;font-size:19.2px;line-height:23.04px;color:#3f474e;transform:scale(0.25) translateX(-50%);">u.T</div>
<div class="a" style="left:364px;top:530.2px;width:32px;height:8.7px;background:#e9ecef;border-radius:.8px;box-shadow:inset 0 0 0 .4px #aeb6bd"></div>
<div class="a" style="left:416.3px;top:530.2px;width:31.7px;height:8.7px;background:#e9ecef;border-radius:.8px;box-shadow:inset 0 0 0 .4px #aeb6bd"></div>
<div class="t" style="left:341.2px;top:531px;font-size:19.6px;line-height:23.52px;color:#3f474e;transform:scale(0.25) translateX(-50%);">S</div>
<div class="t" style="left:358.4px;top:531px;font-size:19.2px;line-height:23.04px;color:#3f474e;transform:scale(0.25) translateX(-50%);">o.T</div>
<div class="t" style="left:410.6px;top:531px;font-size:19.2px;line-height:23.04px;color:#3f474e;transform:scale(0.25) translateX(-50%);">u.T</div>
<div class="a" style="left:266.6px;top:578.5px;width:172px;height:41.7px;background:#1e1e1f;"></div>
<div class="t" style="left:352.4px;top:592.26px;font-size:14.6px;line-height:17.52px;color:#8fd0ee;transform:translateX(-50%);font-weight:bold;font-family:'Liberation Mono',monospace;letter-spacing:-0.35px;">MESSEN</div>
<div class="a" style="left:38.75px;top:648px;width:205.55px;height:88.8px;background:#1e1e1f;"></div>
<div class="t" style="left:48px;top:651.91px;font-size:11.85px;line-height:14.22px;color:#9fd3ec;font-weight:bold;font-family:'DejaVu Sans','Liberation Sans',sans-serif;">Z</div>
<div class="t" style="left:136.5px;top:651.91px;font-size:11.85px;line-height:14.22px;color:#9fd3ec;transform:translateX(-100%);font-weight:bold;font-family:'DejaVu Sans','Liberation Sans',sans-serif;letter-spacing:.45px;">299.345</div>
<div class="t" style="left:43.4px;top:654px;font-size:16.8px;line-height:20.16px;color:#8794a0;transform:scale(0.25);font-family:'DejaVu Sans','Liberation Sans',sans-serif;">↗</div>
<div class="a" style="left:42.8px;top:658.9px;width:2.4px;height:2.4px;background:transparent;border:0.45px solid #5c6872;border-radius:50%"></div>
<div class="t" style="left:48px;top:662.91px;font-size:11.85px;line-height:14.22px;color:#9fd3ec;font-weight:bold;font-family:'DejaVu Sans','Liberation Sans',sans-serif;">X</div>
<div class="t" style="left:136.5px;top:662.91px;font-size:11.85px;line-height:14.22px;color:#9fd3ec;transform:translateX(-100%);font-weight:bold;font-family:'DejaVu Sans','Liberation Sans',sans-serif;letter-spacing:.45px;">29.921</div>
<div class="t" style="left:43.4px;top:665px;font-size:16.8px;line-height:20.16px;color:#8794a0;transform:scale(0.25);font-family:'DejaVu Sans','Liberation Sans',sans-serif;">↗</div>
<div class="a" style="left:42.8px;top:670.58px;width:2.4px;height:2.4px;background:transparent;border:0.45px solid #5c6872;border-radius:50%"></div>
<div class="t" style="left:48px;top:674.91px;font-size:11.85px;line-height:14.22px;color:#9fd3ec;font-weight:bold;font-family:'DejaVu Sans','Liberation Sans',sans-serif;">C</div>
<div class="t" style="left:136.5px;top:674.91px;font-size:11.85px;line-height:14.22px;color:#9fd3ec;transform:translateX(-100%);font-weight:bold;font-family:'DejaVu Sans','Liberation Sans',sans-serif;letter-spacing:.45px;">241.786</div>
<div class="t" style="left:43.4px;top:677px;font-size:16.8px;line-height:20.16px;color:#8794a0;transform:scale(0.25);font-family:'DejaVu Sans','Liberation Sans',sans-serif;">↗</div>
<div class="a" style="left:42.8px;top:682.26px;width:2.4px;height:2.4px;background:transparent;border:0.45px solid #5c6872;border-radius:50%"></div>
<div class="t" style="left:48px;top:686.91px;font-size:11.85px;line-height:14.22px;color:#9fd3ec;font-weight:bold;font-family:'DejaVu Sans','Liberation Sans',sans-serif;">Y</div>
<div class="t" style="left:136.5px;top:686.91px;font-size:11.85px;line-height:14.22px;color:#9fd3ec;transform:translateX(-100%);font-weight:bold;font-family:'DejaVu Sans','Liberation Sans',sans-serif;letter-spacing:.45px;">0.110</div>
<div class="t" style="left:43.4px;top:689px;font-size:16.8px;line-height:20.16px;color:#8794a0;transform:scale(0.25);font-family:'DejaVu Sans','Liberation Sans',sans-serif;">↗</div>
<div class="a" style="left:42.8px;top:693.94px;width:2.4px;height:2.4px;background:transparent;border:0.45px solid #5c6872;border-radius:50%"></div>
<div class="t" style="left:48px;top:697.91px;font-size:11.85px;line-height:14.22px;color:#9fd3ec;font-weight:bold;font-family:'DejaVu Sans','Liberation Sans',sans-serif;">B</div>
<div class="t" style="left:136.5px;top:697.91px;font-size:11.85px;line-height:14.22px;color:#9fd3ec;transform:translateX(-100%);font-weight:bold;font-family:'DejaVu Sans','Liberation Sans',sans-serif;letter-spacing:.45px;">0.000</div>
<div class="t" style="left:43.4px;top:700px;font-size:16.8px;line-height:20.16px;color:#8794a0;transform:scale(0.25);font-family:'DejaVu Sans','Liberation Sans',sans-serif;">↗</div>
<div class="a" style="left:42.8px;top:705.62px;width:2.4px;height:2.4px;background:transparent;border:0.45px solid #5c6872;border-radius:50%"></div>
<div class="t" style="left:48px;top:709.91px;font-size:11.85px;line-height:14.22px;color:#9fd3ec;font-weight:bold;font-family:'DejaVu Sans','Liberation Sans',sans-serif;">U</div>
<div class="t" style="left:136.5px;top:709.91px;font-size:11.85px;line-height:14.22px;color:#9fd3ec;transform:translateX(-100%);font-weight:bold;font-family:'DejaVu Sans','Liberation Sans',sans-serif;letter-spacing:.45px;">0.000</div>
<div class="t" style="left:43.4px;top:712px;font-size:16.8px;line-height:20.16px;color:#8794a0;transform:scale(0.25);font-family:'DejaVu Sans','Liberation Sans',sans-serif;">↗</div>
<div class="a" style="left:42.8px;top:717.3px;width:2.4px;height:2.4px;background:transparent;border:0.45px solid #5c6872;border-radius:50%"></div>
<div class="t" style="left:48px;top:721.91px;font-size:11.85px;line-height:14.22px;color:#9fd3ec;font-weight:bold;font-family:'DejaVu Sans','Liberation Sans',sans-serif;">A</div>
<div class="t" style="left:136.5px;top:721.91px;font-size:11.85px;line-height:14.22px;color:#9fd3ec;transform:translateX(-100%);font-weight:bold;font-family:'DejaVu Sans','Liberation Sans',sans-serif;letter-spacing:.45px;">-3.070</div>
<div class="t" style="left:43.4px;top:724px;font-size:16.8px;line-height:20.16px;color:#8794a0;transform:scale(0.25);font-family:'DejaVu Sans','Liberation Sans',sans-serif;">↗</div>
<div class="a" style="left:42.8px;top:728.98px;width:2.4px;height:2.4px;background:transparent;border:0.45px solid #5c6872;border-radius:50%"></div>
<svg class="a" style="left:185px;top:672px;" width="42" height="42" viewBox="185 672 42 42"><circle cx="206" cy="692.6" r="20.3" fill="#b9c0c8"/><path d="M191.65 706.95 A20.3 20.3 0 0 0 220.35 678.25 Z" fill="#1f5f9e"/><path d="M186 692.6H226M206 692.6V713" stroke="#d8eef8" stroke-width="0.4" stroke-dasharray="1 0.8" opacity=".85"/><path d="M206 678.4V687" stroke="#e0524f" stroke-width="2.6"/><polygon points="202.6,686 209.4,686 206,690.4" fill="#e0524f"/><rect x="204.6" y="690.6" width="2.8" height="3.6" fill="#e0524f"/></svg>
<div class="a" style="left:461px;top:440.4px;width:42.4px;height:10.6px;background:#464f57;border-radius:1.5px 1.5px 0 0"></div>
<div class="a" style="left:504px;top:440.4px;width:34px;height:10.6px;background:#6a747d;border-radius:1.5px 1.5px 0 0"></div>
<div class="t" style="left:482.4px;top:443px;font-size:18.8px;line-height:22.56px;color:#9fa8b0;transform:scale(0.25) translateX(-50%);">Widgets</div>
<div class="t" style="left:521px;top:443px;font-size:18.8px;line-height:22.56px;color:#e9ecef;transform:scale(0.25) translateX(-50%);">Fortschritt</div>
<div class="a" style="left:461px;top:450.4px;width:186.5px;height:286.4px;background:#69737c;"></div>
<div class="a" style="left:461px;top:450.4px;width:179.6px;height:286.4px;background:#5f6871;"></div>
<div class="a" style="left:640.7px;top:454.6px;width:5.5px;height:282px;background:#f4f6f8;"></div>
<div class="a" style="left:640.7px;top:523px;width:5.5px;height:208px;background:#c4cad0;"></div>
<svg class="a" style="left:640.7px;top:454.6px" width="5.5" height="282" viewBox="0 0 5.5 282"><path d="M1.4 4 L2.75 2.2 L4.1 4 M1.4 278 L2.75 279.8 L4.1 278" fill="none" stroke="#3a4248" stroke-width="0.7"/></svg>
<div class="a" style="left:462px;top:451.25px;width:176.7px;height:24px;background:transparent;border:0.5px solid #828c95;border-top:none;box-sizing:border-box"></div>
<div class="a" style="left:465px;top:451px;width:100px;height:3px;overflow:hidden"><div class="t" style="left:0;top:-2.6px;font-size:4.65px;line-height:5.6px;color:#c9d0d6">Nr. 4 Rundlauf am Prüfbund (frp)</div></div>
<div class="t" style="left:471.6px;top:460px;font-size:20px;line-height:24px;color:#e4e8ec;transform:scale(0.25);">Messung erfolgreich</div>
<div class="a" style="left:462px;top:480.1px;width:176.7px;height:24px;background:transparent;border:0.5px solid #828c95;box-sizing:border-box"></div>
<div class="t" style="left:464.6px;top:477px;font-size:20.72px;line-height:24.86px;color:#e4e8ec;transform:scale(0.25);background:#5f6871;padding:0 3.2px;">Nr. 5 Planlauf an Spannfläche (fps)</div>
<div class="t" style="left:471.6px;top:488px;font-size:20px;line-height:24px;color:#e4e8ec;transform:scale(0.25);">Messung erfolgreich</div>
<div class="a" style="left:462px;top:508.95px;width:176.7px;height:24px;background:transparent;border:0.5px solid #828c95;box-sizing:border-box"></div>
<div class="t" style="left:464.6px;top:506px;font-size:20.72px;line-height:24.86px;color:#e4e8ec;transform:scale(0.25);background:#5f6871;padding:0 3.2px;">Nr. 6 Rundlauf am Zahnkopf (frk)</div>
<div class="t" style="left:471.6px;top:517px;font-size:20px;line-height:24px;color:#e4e8ec;transform:scale(0.25);">Messung erfolgreich</div>
<div class="a" style="left:462px;top:537.8px;width:176.7px;height:24px;background:transparent;border:0.5px solid #828c95;box-sizing:border-box"></div>
<div class="t" style="left:464.6px;top:535px;font-size:20.72px;line-height:24.86px;color:#e4e8ec;transform:scale(0.25);background:#5f6871;padding:0 3.2px;">Nr. 8 - 10 Einzelteilung, Teilungssprung, Summenteilung (ftN - fuN - FtN)</div>
<div class="t" style="left:471.6px;top:546px;font-size:20px;line-height:24px;color:#e4e8ec;transform:scale(0.25);">Messung erfolgreich</div>
<div class="a" style="left:462px;top:566.65px;width:176.7px;height:24px;background:transparent;border:0.5px solid #828c95;box-sizing:border-box"></div>
<div class="t" style="left:464.6px;top:564px;font-size:20.72px;line-height:24.86px;color:#e4e8ec;transform:scale(0.25);background:#5f6871;padding:0 3.2px;">Nr. 11 Spannutenrichtung (fHN)</div>
<div class="t" style="left:471.6px;top:575px;font-size:20px;line-height:24px;color:#e4e8ec;transform:scale(0.25);">Messung erfolgreich</div>
<div class="a" style="left:462px;top:595.5px;width:176.7px;height:24px;background:transparent;border:0.5px solid #828c95;box-sizing:border-box"></div>
<div class="t" style="left:464.6px;top:592px;font-size:20.72px;line-height:24.86px;color:#e4e8ec;transform:scale(0.25);background:#5f6871;padding:0 3.2px;">Nr. 12 Formabweichung (Ffs)</div>
<div class="t" style="left:471.6px;top:604px;font-size:20px;line-height:24px;color:#e4e8ec;transform:scale(0.25);">Messung erfolgreich</div>
<div class="a" style="left:462px;top:624.35px;width:176.7px;height:24px;background:transparent;border:0.5px solid #828c95;box-sizing:border-box"></div>
<div class="t" style="left:464.6px;top:621px;font-size:20.72px;line-height:24.86px;color:#e4e8ec;transform:scale(0.25);background:#5f6871;padding:0 3.2px;">Nr. 13 Zahndicke (fs)</div>
<div class="t" style="left:471.6px;top:633px;font-size:20px;line-height:24px;color:#e4e8ec;transform:scale(0.25);">Messung erfolgreich</div>
<div class="a" style="left:462px;top:653.2px;width:176.7px;height:24px;background:transparent;border:0.5px solid #828c95;box-sizing:border-box"></div>
<div class="t" style="left:464.6px;top:650px;font-size:20.72px;line-height:24.86px;color:#e4e8ec;transform:scale(0.25);background:#5f6871;padding:0 3.2px;">Nr. 14 - 15 Fräsersteigungshöhe (fHF - FHF)</div>
<div class="t" style="left:471.6px;top:662px;font-size:20px;line-height:24px;color:#e4e8ec;transform:scale(0.25);">Messung läuft... (5/15)</div>
<div class="a" style="left:462px;top:682.05px;width:176.7px;height:24px;background:transparent;border:0.5px solid #828c95;box-sizing:border-box"></div>
<div class="t" style="left:464.6px;top:679px;font-size:20.72px;line-height:24.86px;color:#e4e8ec;transform:scale(0.25);background:#5f6871;padding:0 3.2px;">Nr. 16 - 17 Eingriffsteilung (fe - Fe)</div>
<div class="t" style="left:471.6px;top:690px;font-size:20px;line-height:24px;color:#e4e8ec;transform:scale(0.25);">Noch nicht gemessen</div>
<div class="a" style="left:462px;top:710.9px;width:176.7px;height:24px;background:transparent;border:0.5px solid #828c95;box-sizing:border-box"></div>
<div class="t" style="left:464.6px;top:708px;font-size:20.72px;line-height:24.86px;color:#e4e8ec;transform:scale(0.25);background:#5f6871;padding:0 3.2px;">Nr. 18 - 19 Achsteilung (fpX - FPX)</div>
<div class="t" style="left:471.6px;top:719px;font-size:20px;line-height:24px;color:#e4e8ec;transform:scale(0.25);">Noch nicht gemessen</div>
<svg class="a" style="left:612px;top:455px;" width="23" height="281" viewBox="612 455 23 281"><polygon points="613,459.15 625,459.15 625,463.65 613,463.65" fill="#6cc47a"/><polygon points="626.5,460.15 634,460.15 634,462.95 626.5,462.95" fill="#6cc47a"/><polygon points="614.2,459.35 615,456.55 616.6,459.35" fill="#6cc47a"/><polygon points="617.8,459.35 619.4,456.55 620.2,459.35" fill="#6cc47a"/><polygon points="613,463.55 617.6,463.55 615.4,470.05" fill="#6cc47a"/><polygon points="619.4,463.55 622.6,463.55 620.6,470.05" fill="#6cc47a"/><polygon points="613,488 625,488 625,492.5 613,492.5" fill="#6cc47a"/><polygon points="626.5,489 634,489 634,491.8 626.5,491.8" fill="#6cc47a"/><polygon points="614.2,488.2 615,485.4 616.6,488.2" fill="#6cc47a"/><polygon points="617.8,488.2 619.4,485.4 620.2,488.2" fill="#6cc47a"/><polygon points="613,492.4 617.6,492.4 615.4,498.9" fill="#6cc47a"/><polygon points="619.4,492.4 622.6,492.4 620.6,498.9" fill="#6cc47a"/><polygon points="613,516.85 625,516.85 625,521.35 613,521.35" fill="#6cc47a"/><polygon points="626.5,517.85 634,517.85 634,520.65 626.5,520.65" fill="#6cc47a"/><polygon points="614.2,517.05 615,514.25 616.6,517.05" fill="#6cc47a"/><polygon points="617.8,517.05 619.4,514.25 620.2,517.05" fill="#6cc47a"/><polygon points="613,521.25 617.6,521.25 615.4,527.75" fill="#6cc47a"/><polygon points="619.4,521.25 622.6,521.25 620.6,527.75" fill="#6cc47a"/><polygon points="613,545.7 625,545.7 625,550.2 613,550.2" fill="#6cc47a"/><polygon points="626.5,546.7 634,546.7 634,549.5 626.5,549.5" fill="#6cc47a"/><polygon points="614.2,545.9 615,543.1 616.6,545.9" fill="#6cc47a"/><polygon points="617.8,545.9 619.4,543.1 620.2,545.9" fill="#6cc47a"/><polygon points="613,550.1 617.6,550.1 615.4,556.6" fill="#6cc47a"/><polygon points="619.4,550.1 622.6,550.1 620.6,556.6" fill="#6cc47a"/><polygon points="613,574.55 625,574.55 625,579.05 613,579.05" fill="#6cc47a"/><polygon points="626.5,575.55 634,575.55 634,578.35 626.5,578.35" fill="#6cc47a"/><polygon points="614.2,574.75 615,571.95 616.6,574.75" fill="#6cc47a"/><polygon points="617.8,574.75 619.4,571.95 620.2,574.75" fill="#6cc47a"/><polygon points="613,578.95 617.6,578.95 615.4,585.45" fill="#6cc47a"/><polygon points="619.4,578.95 622.6,578.95 620.6,585.45" fill="#6cc47a"/><polygon points="613,603.4 625,603.4 625,607.9 613,607.9" fill="#6cc47a"/><polygon points="626.5,604.4 634,604.4 634,607.2 626.5,607.2" fill="#6cc47a"/><polygon points="614.2,603.6 615,600.8 616.6,603.6" fill="#6cc47a"/><polygon points="617.8,603.6 619.4,600.8 620.2,603.6" fill="#6cc47a"/><polygon points="613,607.8 617.6,607.8 615.4,614.3" fill="#6cc47a"/><polygon points="619.4,607.8 622.6,607.8 620.6,614.3" fill="#6cc47a"/><polygon points="613,632.25 625,632.25 625,636.75 613,636.75" fill="#6cc47a"/><polygon points="626.5,633.25 634,633.25 634,636.05 626.5,636.05" fill="#6cc47a"/><polygon points="614.2,632.45 615,629.65 616.6,632.45" fill="#6cc47a"/><polygon points="617.8,632.45 619.4,629.65 620.2,632.45" fill="#6cc47a"/><polygon points="613,636.65 617.6,636.65 615.4,643.15" fill="#6cc47a"/><polygon points="619.4,636.65 622.6,636.65 620.6,643.15" fill="#6cc47a"/><polygon points="613,661.1 625,661.1 625,665.6 613,665.6" fill="#f0e52e"/><polygon points="626.5,662.1 634,662.1 634,664.9 626.5,664.9" fill="#f0e52e"/><polygon points="614.2,661.3 615,658.5 616.6,661.3" fill="#f0e52e"/><polygon points="617.8,661.3 619.4,658.5 620.2,661.3" fill="#f0e52e"/><polygon points="613,665.5 617.6,665.5 615.4,672" fill="#f0e52e"/><polygon points="619.4,665.5 622.6,665.5 620.6,672" fill="#f0e52e"/><polygon points="613,689.95 625,689.95 625,694.45 613,694.45" fill="#8d979f"/><polygon points="626.5,690.95 634,690.95 634,693.75 626.5,693.75" fill="#8d979f"/><polygon points="614.2,690.15 615,687.35 616.6,690.15" fill="#8d979f"/><polygon points="617.8,690.15 619.4,687.35 620.2,690.15" fill="#8d979f"/><polygon points="613,694.35 617.6,694.35 615.4,700.85" fill="#8d979f"/><polygon points="619.4,694.35 622.6,694.35 620.6,700.85" fill="#8d979f"/><polygon points="613,718.8 625,718.8 625,723.3 613,723.3" fill="#8d979f"/><polygon points="626.5,719.8 634,719.8 634,722.6 626.5,722.6" fill="#8d979f"/><polygon points="614.2,719 615,716.2 616.6,719" fill="#8d979f"/><polygon points="617.8,719 619.4,716.2 620.2,719" fill="#8d979f"/><polygon points="613,723.2 617.6,723.2 615.4,729.7" fill="#8d979f"/><polygon points="619.4,723.2 622.6,723.2 620.6,729.7" fill="#8d979f"/></svg>
<div class="a" style="left:38.75px;top:744px;width:36.6px;height:25.3px;background:#49535b;"></div>
<div class="a" style="left:80.1px;top:744px;width:36.6px;height:25.3px;background:#49535b;"></div>
<div class="a" style="left:121.45px;top:744px;width:36.6px;height:25.3px;background:#49535b;"></div>
<div class="a" style="left:162.8px;top:744px;width:36.6px;height:25.3px;background:#49535b;"></div>
<div class="a" style="left:216.2px;top:744px;width:36.6px;height:25.3px;background:#49535b;"></div>
<div class="a" style="left:257.55px;top:744px;width:36.6px;height:25.3px;background:#49535b;"></div>
<div class="a" style="left:298.9px;top:744px;width:36.6px;height:25.3px;background:#49535b;"></div>
<div class="a" style="left:340.25px;top:744px;width:36.6px;height:25.3px;background:#49535b;"></div>
<div class="a" style="left:393.65px;top:744px;width:36.6px;height:25.3px;background:#49535b;"></div>
<div class="a" style="left:435px;top:744px;width:36.6px;height:25.3px;background:#49535b;"></div>
<div class="a" style="left:476.35px;top:744px;width:36.6px;height:25.3px;background:#49535b;"></div>
<div class="a" style="left:517.7px;top:744px;width:36.6px;height:25.3px;background:#49535b;"></div>
<div class="t" style="left:518.9px;top:745px;font-size:16.8px;line-height:20.16px;color:#c3cad0;transform:scale(0.25);">F12</div>
<svg class="a" style="left:517px;top:744px;" width="39" height="26" viewBox="517 744 39 26"><path d="M528.8 749.4 L543.2 763.8 M543.2 749.4 L528.8 763.8" stroke="#aeb6be" stroke-width="2.6" fill="none"/></svg>
<div class="a" style="left:596.2px;top:758.3px;width:24.6px;height:10.4px;background:#49535b;border-radius:1px"></div>
<div class="t" style="left:608.6px;top:761px;font-size:18.4px;line-height:22.08px;color:#c3cad0;transform:scale(0.25) translateX(-50%);text-decoration:underline;">Help</div>
</section>
<section>
<div class="a" style="left:686.2px;top:437px;width:621px;height:336.8px;background:#5e6870;"></div>
<div class="a" style="left:1117.3px;top:453px;width:189.9px;height:14px;background:#363d43;"></div>
<div class="a" style="left:686.2px;top:464.8px;width:621px;height:2.2px;background:#363d43;"></div>
<div class="t" style="left:691.2px;top:447px;font-size:18.4px;line-height:22.08px;color:#c3cad0;transform:scale(0.25);">Datei</div>
<div class="t" style="left:708.6px;top:447px;font-size:18.4px;line-height:22.08px;color:#c3cad0;transform:scale(0.25);">Bearbeiten</div>
<div class="t" style="left:736.6px;top:447px;font-size:18.4px;line-height:22.08px;color:#c3cad0;transform:scale(0.25);">Ansicht</div>
<div class="t" style="left:758.7px;top:447px;font-size:18.4px;line-height:22.08px;color:#c3cad0;transform:scale(0.25);">Ist-Kontur</div>
<div class="t" style="left:785.5px;top:447px;font-size:18.4px;line-height:22.08px;color:#c3cad0;transform:scale(0.25);">Soll-Kontur</div>
<div class="t" style="left:816.5px;top:447px;font-size:18.4px;line-height:22.08px;color:#c3cad0;transform:scale(0.25);">Soll-Ist-Vergleich</div>
<div class="t" style="left:857.8px;top:447px;font-size:18.4px;line-height:22.08px;color:#c3cad0;transform:scale(0.25);">Bemaßungen</div>
<div class="t" style="left:891px;top:447px;font-size:18.4px;line-height:22.08px;color:#c3cad0;transform:scale(0.25);">Messen</div>
<div class="t" style="left:912.9px;top:447px;font-size:18.4px;line-height:22.08px;color:#c3cad0;transform:scale(0.25);">Extras</div>
<div class="t" style="left:931.5px;top:447px;font-size:18.4px;line-height:22.08px;color:#c3cad0;transform:scale(0.25);">Plugins</div>
<svg class="a" style="left:690px;top:453px;" width="428" height="12" viewBox="690 453 428 12"><rect x="692.4" y="455.5" width="4.6" height="5.6" rx=".5" fill="#dfe4e9"/><rect x="693.4" y="454.7" width="2.6" height="1.6" fill="#aeb6bd"/><rect x="702.1" y="455.5" width="4.6" height="5.6" rx=".5" fill="#dfe4e9"/><rect x="703.1" y="454.7" width="2.6" height="1.6" fill="#3a4248"/><rect x="704" y="459.3" width="2.4" height="1.6" fill="#9ab4d8"/><rect x="711.9" y="455.5" width="4.6" height="5.6" rx=".5" fill="#dfe4e9"/><rect x="712.9" y="454.7" width="2.6" height="1.6" fill="#3a4248"/><rect x="713.8" y="459.3" width="2.4" height="1.6" fill="#7fbf7f"/><rect x="721.7" y="455.5" width="4.6" height="5.6" rx=".5" fill="#dfe4e9"/><rect x="722.7" y="454.7" width="2.6" height="1.6" fill="#3a4248"/><rect x="723.6" y="459.3" width="2.4" height="1.6" fill="#e06c75"/><rect x="731.2" y="455.5" width="4.6" height="5.6" rx=".5" fill="#c9d0d6"/><rect x="732.2" y="454.7" width="2.6" height="1.6" fill="#3a4248"/><rect x="741.1" y="455.5" width="4.6" height="5.6" rx=".5" fill="#c9d0d6"/><rect x="742.1" y="454.7" width="2.6" height="1.6" fill="#3a4248"/><path d="M751.7 453.8V462.8" stroke="#7d8790" stroke-width="0.5"/><path d="M836 453.8V462.8" stroke="#7d8790" stroke-width="0.5"/><path d="M939.3 453.8V462.8" stroke="#7d8790" stroke-width="0.5"/><path d="M1036.6 453.8V462.8" stroke="#7d8790" stroke-width="0.5"/><path d="M1100.6 453.8V462.8" stroke="#7d8790" stroke-width="0.5"/><circle cx="758.2" cy="457.5" r="2.1" fill="#7f9fd0" stroke="#cfd8e6" stroke-width="0.7"/><path d="M759.7 459.2l2.2 2.4" stroke="#cfd8e6" stroke-width="0.9"/><circle cx="767.7" cy="457.5" r="2.1" fill="#7f9fd0" stroke="#cfd8e6" stroke-width="0.7"/><path d="M769.2 459.2l2.2 2.4" stroke="#cfd8e6" stroke-width="0.9"/><circle cx="777.4" cy="457.5" r="2.1" fill="#7f9fd0" stroke="#cfd8e6" stroke-width="0.7"/><path d="M778.9 459.2l2.2 2.4" stroke="#cfd8e6" stroke-width="0.9"/><circle cx="786.9" cy="457.5" r="2.1" fill="#7f9fd0" stroke="#cfd8e6" stroke-width="0.7"/><path d="M788.4 459.2l2.2 2.4" stroke="#cfd8e6" stroke-width="0.9"/><circle cx="796.4" cy="457.5" r="2.1" fill="#7f9fd0" stroke="#cfd8e6" stroke-width="0.7"/><path d="M797.9 459.2l2.2 2.4" stroke="#cfd8e6" stroke-width="0.9"/><rect x="805" y="455.6" width="4.6" height="4.2" fill="#8d969e"/><circle cx="809.2" cy="460" r="1.3" fill="#e09a8a"/><path d="M813.6 460.2L820.6 456.4" stroke="#e3e7ea" stroke-width="1.6"/><rect x="818" y="455" width="3.4" height="2.4" fill="#e3e7ea"/><rect x="825" y="456" width="7.6" height="3.6" rx="1" fill="#5a6fa8" opacity=".8"/><rect x="841.3" y="455.1" width="4.8" height="4.6" fill="none" stroke="#4a545c" stroke-width="0.7"/><rect x="844.5" y="460.1" width="1.2" height="1.2" fill="#e3e7ea"/><rect x="850.6" y="455.1" width="4.8" height="4.6" fill="none" stroke="#4a545c" stroke-width="0.7"/><rect x="853.8" y="460.1" width="1.2" height="1.2" fill="#e3e7ea"/><rect x="861.6" y="455.1" width="4.8" height="4.6" fill="none" stroke="#4a545c" stroke-width="0.7"/><rect x="864.8" y="460.1" width="1.2" height="1.2" fill="#e3e7ea"/><rect x="870.1" y="455.1" width="4.8" height="4.6" fill="none" stroke="#4a545c" stroke-width="0.7"/><rect x="873.3" y="460.1" width="1.2" height="1.2" fill="#e3e7ea"/><rect x="880.1" y="455.1" width="4.8" height="4.6" fill="none" stroke="#4a545c" stroke-width="0.7"/><rect x="883.3" y="460.1" width="1.2" height="1.2" fill="#e3e7ea"/><rect x="852" y="456.8" width="3" height="1.6" fill="#b0505a"/><rect x="891.8" y="455.6" width="3.6" height="5.4" rx=".5" fill="#dfe4e9"/><rect x="899.2" y="455.2" width="5" height="5" fill="none" stroke="#8fc06a" stroke-width="0.8"/><path d="M901.7 455.2v5M899.2 457.7h5" stroke="#8fc06a" stroke-width="0.5"/><rect x="909.4" y="455.6" width="5" height="5" fill="none" stroke="#6f9f5a" stroke-width="0.6" stroke-dasharray="0.8 0.8"/><circle cx="921.7" cy="458.4" r="3.5" fill="#d9444a" stroke="#f0c8c8" stroke-width="0.5"/><path d="M920.2 456.9l3 3M923.2 456.9l-3 3" stroke="#fff" stroke-width="0.9"/><rect x="928" y="455.4" width="6" height="3.6" rx=".8" fill="#4a63b0" opacity=".85"/><text x="943.6" y="461" font-size="6.4" font-weight="bold" font-family="Liberation Sans,sans-serif" fill="#d8c24a">A</text><path d="M953.4 455.8v4.4M957.6 455.8v4.4M953.4 458h4.2" stroke="#2f363b" stroke-width="0.8"/><path d="M967 455.6v5.4M965.4 455.6h3.2M965.4 461h3.2" stroke="#2f363b" stroke-width="0.8"/><path d="M976 460.4l4-4" stroke="#3f484f" stroke-width="1.1"/><path d="M988.6 456v5h2a2.5 2.5 0 0 0 0-5z" fill="none" stroke="#b0444c" stroke-width="0.8"/><path d="M1000.5 458.4h6.5M1010 458.4h7" stroke="#a8404a" stroke-width="0.9"/><path d="M1024.4 458.6l1.4 2.4 1.8-5.6h2.4" stroke="#3f484f" stroke-width="0.7" fill="none"/><circle cx="961.6" cy="458.5" r=".55" fill="#d0d6dc"/><circle cx="972.6" cy="458.5" r=".55" fill="#d0d6dc"/><circle cx="983.6" cy="458.5" r=".55" fill="#d0d6dc"/><circle cx="995.6" cy="458.5" r=".55" fill="#d0d6dc"/><circle cx="1008.6" cy="458.5" r=".55" fill="#d0d6dc"/><circle cx="1020.4" cy="458.5" r=".55" fill="#d0d6dc"/><circle cx="1032.4" cy="458.5" r=".55" fill="#d0d6dc"/><circle cx="1078" cy="458.5" r=".55" fill="#d0d6dc"/><circle cx="1112.6" cy="458.5" r=".55" fill="#d0d6dc"/><circle cx="1042.7" cy="458.4" r="3.4" fill="#2b50b8" stroke="#e8edf6" stroke-width="0.8"/><rect x="1042.1" y="456.2" width="1.2" height="4.4" fill="#fff"/><circle cx="1052.5" cy="458.4" r="2.6" fill="none" stroke="#f2f4f6" stroke-width="1.5"/><rect x="1059.2" y="455.2" width="4.8" height="6" rx=".5" fill="#e8edf6"/><rect x="1060.6" y="457" width="3.4" height="4.2" fill="#3a5fc0"/><rect x="1068" y="455.4" width="6.4" height="5.2" rx=".5" fill="#e8edf6"/><path d="M1069.6 458l1.4 1.4 2.6-2.8" stroke="#3f7f4a" stroke-width="0.8" fill="none"/><rect x="1081.4" y="455.4" width="4.4" height="6" rx=".4" fill="#e9e2d0"/><rect x="1082.6" y="454.6" width="2" height="1.4" fill="#b59a6a"/><polygon points="1093.4,454.4 1094.5,457 1097.3,457.2 1095.2,459 1095.9,461.8 1093.4,460.3 1090.9,461.8 1091.6,459 1089.5,457.2 1092.3,457" fill="#f0b93a"/><path d="M1104.6 456.6h2.2a1.1 1.1 0 1 1 2.2 0h2v2.2a1.1 1.1 0 1 1 0 2.2v1.4h-6.4z" fill="#e6c23a"/></svg>
<div class="a" style="left:686.2px;top:466.6px;width:11px;height:287.8px;background:#59636b;"></div>
<div class="a" style="left:697.2px;top:466.6px;width:1.6px;height:287.8px;background:#3f474d;"></div>
<div class="a" style="left:686.2px;top:754.4px;width:12.6px;height:19.4px;background:#3d454b;"></div>
<svg class="a" style="left:686.2px;top:467px;" width="12" height="293" viewBox="686.2 467 12 293"><path d="M689 469.6h5.2M689 474.8h5.2M691.6 470v4.4" stroke="#d9464f" stroke-width="1.1"/><path d="M688.4 481.2l2 2.2l-2 2.2M694.8 481.2l-2 2.2l2 2.2" stroke="#d9464f" stroke-width="1" fill="none"/><path d="M691.6 480.4v6" stroke="#e9a6aa" stroke-width=".7"/><circle cx="691.6" cy="494.3" r="3" fill="#5a5f78" stroke="#3f4468" stroke-width=".8"/><path d="M691.6 494.3 v-3 a3 3 0 0 1 3 3 z" fill="#d9464f"/><circle cx="691.6" cy="504.8" r="3" fill="#5a5f78" stroke="#3f4468" stroke-width=".8"/><path d="M691.6 504.8 v-3 a3 3 0 0 0 -3 3 z" fill="#d9464f"/><rect x="688.6" y="513" width="6" height="6" rx=".6" fill="#d53a42"/><path d="M690 514.4h2.2v2.4h1.6" stroke="#f6d6d8" stroke-width=".8" fill="none"/><path d="M691.4 523l-3 3l3 3l3-3" stroke="#2f363b" stroke-width=".8" fill="none"/><path d="M692 522.6l2.6 2.8" stroke="#2f363b" stroke-width=".9"/><circle cx="690.8" cy="531.6" r=".6" fill="#aeb6bd"/><path d="M689 547l4.6-5.2" stroke="#6a5aa8" stroke-width="1.1"/><rect x="692.6" y="542.6" width="1.8" height="1.8" fill="#e6d45a"/><rect x="688.2" y="545.8" width="2.2" height="1.4" fill="#e9ecef"/><path d="M689.6 553l3.6 4.4M693.4 553.4l-3.4 3.8" stroke="#a8506a" stroke-width=".7" opacity=".8"/><rect x="688.2" y="562.2" width="6.4" height="1.6" fill="#3a4a5a"/><circle cx="689.8" cy="566.8" r="1.1" fill="#d9563a"/><circle cx="693.4" cy="566.8" r="1.1" fill="#8fbf5a"/><rect x="688" y="572.4" width="6.6" height="1.6" fill="#aeb6bd"/><rect x="688" y="574" width="6.6" height="4.2" fill="#1f2a1c"/><rect x="690" y="575" width="3" height="1.6" fill="#4a6a3a"/><rect x="688" y="584.6" width="2.6" height="3.6" fill="#cfe0f8"/><rect x="691.8" y="583" width="2" height="6.4" fill="#cfe0f8"/><path d="M689 594l4.4 3.4M689.6 598l3-4" stroke="#8a4a5a" stroke-width=".6" opacity=".8"/><path d="M689 605h5M690 609.6l3.6-2.4" stroke="#8d969e" stroke-width=".6" opacity=".7"/><rect x="692" y="618.4" width="2.4" height="3.6" fill="#9fd0f0"/><path d="M688.6 621.4l2.4-2.4" stroke="#7f8992" stroke-width=".7"/><path d="M688.6 630.6h4.8" stroke="#e9ecef" stroke-width=".7"/><rect x="690" y="632" width="4.4" height="4.2" fill="#2f363b" stroke="#7f8992" stroke-width=".4"/><path d="M691 642.6l2.6 5" stroke="#8a5a7a" stroke-width=".6" opacity=".8"/><rect x="688.4" y="652.6" width="5.6" height="6" fill="none" stroke="#353c42" stroke-width=".8"/><path d="M688 652.6h7" stroke="#353c42" stroke-width=".8"/><rect x="688.6" y="664" width="5.4" height="1.8" fill="#4a5aa8"/><rect x="688.6" y="666.4" width="5.4" height="1.2" fill="#d8e0f0"/><path d="M693.6 678.4l-3.4 6.4" stroke="#6f7982" stroke-width=".6" opacity=".8"/><polygon points="691.6,691.4 694.8,697.2 688.4,697.2" fill="#a8d0f0"/><polygon points="691.6,694 693,696.6 690.2,696.6" fill="#d9565f"/><path d="M689.4 701.4v6.4h3M690.8 701.6l2.6-.8v5" stroke="#d0d0f0" stroke-width=".8" fill="none"/><path d="M688.8 712v6.6h4.6" stroke="#aeb6bd" stroke-width=".7" fill="none"/><rect x="691" y="713.8" width="3.2" height="3" fill="#b9cf5a"/><path d="M688.8 722.4v6.6h4.6" stroke="#aeb6bd" stroke-width=".7" fill="none"/><rect x="691" y="724.2" width="3.2" height="3" fill="#d9565f"/><path d="M688.8 733.2v6.6h4.6" stroke="#aeb6bd" stroke-width=".7" fill="none"/><rect x="691" y="735" width="3.2" height="3" fill="#d9463f"/><path d="M689 744.4h4l1 3.4l-2.4 2.4h-2.6z" fill="#3a4248" stroke="#2a3036" stroke-width=".5"/></svg>
<div class="a" style="left:698.6px;top:466.7px;width:469.7px;height:266.1px;background:#fdfdfd;"></div>
<div class="a" style="left:698.6px;top:732.6px;width:469.7px;height:1.6px;background:#2f363b;"></div>
<div class="a" style="left:1168.3px;top:466.7px;width:2.7px;height:307.1px;background:#363d43;"></div>
<svg class="a" style="left:698.6px;top:466.7px;" width="469.7" height="265.9" viewBox="698.6 466.7 469.7 265.9"><rect x="852" y="546.7" width="175.5" height="117.1" fill="#d6d7db" stroke="#8f959c" stroke-width="0.5"/><path d="M940 546.7V663.8" stroke="#8f959c" stroke-width="0.6"/><path d="M766.5 473.4V723" stroke="#9b9fa3" stroke-width="0.5" stroke-dasharray="2.4 2.2"/><path d="M766.5 722V724.4" stroke="#222" stroke-width="0.5"/><path d="M809.87 473.4V723" stroke="#9b9fa3" stroke-width="0.5" stroke-dasharray="2.4 2.2"/><path d="M809.87 722V724.4" stroke="#222" stroke-width="0.5"/><path d="M853.24 473.4V723" stroke="#9b9fa3" stroke-width="0.5" stroke-dasharray="2.4 2.2"/><path d="M853.24 722V724.4" stroke="#222" stroke-width="0.5"/><path d="M896.61 473.4V723" stroke="#9b9fa3" stroke-width="0.5" stroke-dasharray="2.4 2.2"/><path d="M896.61 722V724.4" stroke="#222" stroke-width="0.5"/><path d="M939.98 473.4V723" stroke="#9b9fa3" stroke-width="0.5" stroke-dasharray="2.4 2.2"/><path d="M939.98 722V724.4" stroke="#222" stroke-width="0.5"/><path d="M983.35 473.4V723" stroke="#9b9fa3" stroke-width="0.5" stroke-dasharray="2.4 2.2"/><path d="M983.35 722V724.4" stroke="#222" stroke-width="0.5"/><path d="M1026.72 473.4V723" stroke="#9b9fa3" stroke-width="0.5" stroke-dasharray="2.4 2.2"/><path d="M1026.72 722V724.4" stroke="#222" stroke-width="0.5"/><path d="M1070.09 473.4V723" stroke="#9b9fa3" stroke-width="0.5" stroke-dasharray="2.4 2.2"/><path d="M1070.09 722V724.4" stroke="#222" stroke-width="0.5"/><path d="M1113.46 473.4V723" stroke="#9b9fa3" stroke-width="0.5" stroke-dasharray="2.4 2.2"/><path d="M1113.46 722V724.4" stroke="#222" stroke-width="0.5"/><path d="M1156.83 473.4V723" stroke="#9b9fa3" stroke-width="0.5" stroke-dasharray="2.4 2.2"/><path d="M1156.83 722V724.4" stroke="#222" stroke-width="0.5"/><path d="M728.4 490.3H1161.4" stroke="#9b9fa3" stroke-width="0.5" stroke-dasharray="2.4 2.2"/><path d="M727 490.3H729.6" stroke="#222" stroke-width="0.5"/><path d="M728.4 516.27H1161.4" stroke="#9b9fa3" stroke-width="0.5" stroke-dasharray="2.4 2.2"/><path d="M727 516.27H729.6" stroke="#222" stroke-width="0.5"/><path d="M728.4 542.24H1161.4" stroke="#9b9fa3" stroke-width="0.5" stroke-dasharray="2.4 2.2"/><path d="M727 542.24H729.6" stroke="#222" stroke-width="0.5"/><path d="M728.4 568.21H1161.4" stroke="#9b9fa3" stroke-width="0.5" stroke-dasharray="2.4 2.2"/><path d="M727 568.21H729.6" stroke="#222" stroke-width="0.5"/><path d="M728.4 594.18H1161.4" stroke="#9b9fa3" stroke-width="0.5" stroke-dasharray="2.4 2.2"/><path d="M727 594.18H729.6" stroke="#222" stroke-width="0.5"/><path d="M728.4 620.15H1161.4" stroke="#9b9fa3" stroke-width="0.5" stroke-dasharray="2.4 2.2"/><path d="M727 620.15H729.6" stroke="#222" stroke-width="0.5"/><path d="M728.4 646.12H1161.4" stroke="#9b9fa3" stroke-width="0.5" stroke-dasharray="2.4 2.2"/><path d="M727 646.12H729.6" stroke="#222" stroke-width="0.5"/><path d="M728.4 672.09H1161.4" stroke="#9b9fa3" stroke-width="0.5" stroke-dasharray="2.4 2.2"/><path d="M727 672.09H729.6" stroke="#222" stroke-width="0.5"/><path d="M728.4 698.06H1161.4" stroke="#9b9fa3" stroke-width="0.5" stroke-dasharray="2.4 2.2"/><path d="M727 698.06H729.6" stroke="#222" stroke-width="0.5"/><path d="M728.4 473.4V723H1161.4M728.4 473.4H1161.4" fill="none" stroke="#b9bdc1" stroke-width="0.5"/><path d="M728.4 470.2H761.2M728.4 468V472.4M761.2 468V472.4" stroke="#111" stroke-width="0.6"/><path d="M703.4 719V728.6H713.6" fill="none" stroke="#111" stroke-width="0.6"/><polygon points="702.2,720.4 703.4,717.6 704.6,720.4" fill="#111"/><polygon points="712.4,727.4 715,728.6 712.4,729.8" fill="#111"/><polygon points="706.2,727.6 704,728.6 706.2,729.6" fill="#111"/><polygon points="908.47,517.7 908.8,516.86 909.15,516.03 909.52,515.21 909.91,514.4 910.33,513.6 910.77,512.82 911.23,512.04 911.71,511.28 912.21,510.53 912.73,509.8 913.27,509.08 913.83,508.37 914.41,507.68 915,507.01 915.62,506.35 916.25,505.71 916.9,505.09 917.57,504.48 918.25,503.9 917.81,503.37 916.13,502.85 913.75,501.71 912.11,501.51 910.58,501.51 909.14,501.67 907.84,502.03 907.1,502.88 907.08,504.3 906.73,505.42 906.56,506.64 906.66,508 906.65,509.24 906.4,510.3 906.17,511.36 906.18,512.51 905.79,513.45 905.27,514.33 905.5,515.52 905.26,516.49" fill="#f6dcec"/><polygon points="937.12,496.23 938.02,496.18 938.92,496.15 939.82,496.14 940.72,496.16 941.62,496.2 942.52,496.27 943.41,496.36 944.3,496.47 945.19,496.61 946.08,496.78 946.96,496.96 947.83,497.18 948.7,497.41 949.57,497.67 950.42,497.95 951.27,498.25 952.11,498.58 952.94,498.93 953.76,499.3 954.56,499.7 955.36,500.11 956.15,500.55 956.92,501.01 957.69,501.49 958.43,501.99 959.17,502.51 959.89,503.05 960.6,503.6 961.29,504.18 961.96,504.78 962.62,505.39 963.26,506.02 963.88,506.67 965.86,504.82 965.46,503.85 964.93,502.98 965,501.43 964.65,500.27 964.33,499.02 963.81,497.96 963.31,496.82 963.18,495.08 962.74,493.69 962.43,491.98 961.77,490.76 961.1,489.45 960.27,488.36 959.5,487.08 958.8,485.52 957.76,484.65 956.75,483.62 955.75,482.47 954.78,481.06 953.46,480.71 952.01,480.83 950.85,479.83 949.39,480.13 947.89,480.79 946.52,480.96 945.11,481.63 943.75,482.25 942.43,482.82 941.11,484.72 939.88,487.64 938.8,490.49 937.87,493.09 937.1,495.93" fill="#f6dcec"/><polygon points="1023.36,699.7 1023.61,700.56 1023.86,701.43 1024.11,702.29 1024.35,703.16 1024.6,704.02 1024.85,704.89 1025.1,705.75 1025.35,706.62 1025.6,707.48 1025.85,708.35 1026.1,709.21 1026.35,710.08 1026.6,710.94 1026.85,711.81 1027.1,712.67 1027.35,713.54 1027.6,714.4 1036.29,711.89 1035.95,711.05 1035.81,710.16 1034.85,709.5 1034.95,708.53 1034.42,707.75 1033.91,706.96 1033.79,706.05 1033.33,705.25 1033.4,704.29 1032.44,703.63 1032.62,702.65 1031.99,701.89 1031.44,701.11 1031.72,700.1 1031.25,699.29 1031.05,698.42 1030.32,697.69" fill="#f6dcec"/><path d="M852.5 714.2L856.87 715.44" stroke="#e0575c" stroke-width="0.36"/><path d="M852.99 712.47L856.96 713.6" stroke="#e0575c" stroke-width="0.36"/><path d="M853.48 710.74L857.84 711.98" stroke="#e0575c" stroke-width="0.36"/><path d="M853.98 709.01L858.73 710.36" stroke="#e0575c" stroke-width="0.36"/><path d="M854.47 707.27L858.98 708.56" stroke="#e0575c" stroke-width="0.36"/><path d="M854.96 705.54L859.84 706.93" stroke="#e0575c" stroke-width="0.36"/><path d="M855.45 703.81L860.71 705.3" stroke="#e0575c" stroke-width="0.36"/><path d="M855.95 702.08L860.52 703.38" stroke="#e0575c" stroke-width="0.36"/><path d="M856.44 700.35L860.98 701.64" stroke="#e0575c" stroke-width="0.36"/><path d="M856.93 698.62L861.38 699.88" stroke="#e0575c" stroke-width="0.36"/><path d="M857.42 696.88L862.54 698.34" stroke="#e0575c" stroke-width="0.36"/><path d="M857.92 695.15L863.18 696.65" stroke="#e0575c" stroke-width="0.36"/><path d="M858.41 693.42L864.06 695.03" stroke="#e0575c" stroke-width="0.36"/><path d="M858.9 691.69L864.48 693.28" stroke="#e0575c" stroke-width="0.36"/><path d="M859.39 689.96L864.21 691.33" stroke="#e0575c" stroke-width="0.36"/><path d="M859.88 688.23L864.03 689.41" stroke="#e0575c" stroke-width="0.36"/><path d="M860.38 686.49L864.25 687.6" stroke="#e0575c" stroke-width="0.36"/><path d="M860.87 684.76L864.48 685.79" stroke="#e0575c" stroke-width="0.36"/><path d="M861.36 683.03L864.34 683.88" stroke="#e0575c" stroke-width="0.36"/><path d="M861.85 681.3L864.26 681.98" stroke="#e0575c" stroke-width="0.36"/><path d="M862.35 679.57L865.03 680.33" stroke="#e0575c" stroke-width="0.36"/><path d="M862.84 677.84L865.62 678.63" stroke="#e0575c" stroke-width="0.36"/><path d="M863.33 676.11L865.53 676.73" stroke="#e0575c" stroke-width="0.36"/><path d="M863.82 674.37L865.42 674.83" stroke="#e0575c" stroke-width="0.36"/><path d="M864.32 672.64L865.43 672.96" stroke="#e0575c" stroke-width="0.36"/><path d="M864.81 670.91L866.28 671.33" stroke="#e0575c" stroke-width="0.36"/><path d="M865.3 669.18L866.07 669.4" stroke="#e0575c" stroke-width="0.36"/><path d="M865.79 667.45L865.96 667.5" stroke="#e0575c" stroke-width="0.36"/><path d="M866.28 665.72L866.99 665.92" stroke="#e0575c" stroke-width="0.36"/><path d="M866.78 663.98L866.6 663.93" stroke="#e0575c" stroke-width="0.36"/><path d="M867.27 662.25L867.51 662.32" stroke="#3bb3a6" stroke-width="0.36"/><path d="M867.76 660.52L867.03 660.31" stroke="#3bb3a6" stroke-width="0.36"/><path d="M868.25 658.79L867.69 658.63" stroke="#3bb3a6" stroke-width="0.36"/><path d="M868.75 657.06L868.28 656.93" stroke="#3bb3a6" stroke-width="0.36"/><path d="M869.24 655.33L868.02 654.98" stroke="#3bb3a6" stroke-width="0.36"/><path d="M869.73 653.6L868.3 653.19" stroke="#3bb3a6" stroke-width="0.36"/><path d="M870.22 651.86L868.76 651.45" stroke="#3bb3a6" stroke-width="0.36"/><path d="M870.72 650.13L868.96 649.63" stroke="#3bb3a6" stroke-width="0.36"/><path d="M871.21 648.4L869.24 647.84" stroke="#3bb3a6" stroke-width="0.36"/><path d="M871.7 646.67L869.49 646.04" stroke="#3bb3a6" stroke-width="0.36"/><path d="M872.19 644.94L869.06 644.05" stroke="#3bb3a6" stroke-width="0.36"/><path d="M872.68 643.21L869.51 642.3" stroke="#3bb3a6" stroke-width="0.36"/><path d="M873.18 641.47L869.84 640.53" stroke="#3bb3a6" stroke-width="0.36"/><path d="M873.67 639.74L869.71 638.62" stroke="#3bb3a6" stroke-width="0.36"/><path d="M874.16 638.01L870.45 636.96" stroke="#3bb3a6" stroke-width="0.36"/><path d="M874.65 636.28L870.53 635.11" stroke="#3bb3a6" stroke-width="0.36"/><path d="M875.15 634.55L870.53 633.24" stroke="#3bb3a6" stroke-width="0.36"/><path d="M875.64 632.82L871.12 631.53" stroke="#3bb3a6" stroke-width="0.36"/><path d="M876.13 631.08L871.76 629.84" stroke="#3bb3a6" stroke-width="0.36"/><path d="M876.62 629.35L871.76 627.97" stroke="#3bb3a6" stroke-width="0.36"/><path d="M877.12 627.62L871.95 626.15" stroke="#3bb3a6" stroke-width="0.36"/><path d="M877.61 625.89L871.79 624.24" stroke="#3bb3a6" stroke-width="0.36"/><path d="M878.1 624.16L872.4 622.54" stroke="#3bb3a6" stroke-width="0.36"/><path d="M878.59 622.43L873.04 620.85" stroke="#3bb3a6" stroke-width="0.36"/><path d="M879.08 620.7L873.14 619" stroke="#3bb3a6" stroke-width="0.36"/><path d="M879.58 618.96L873.77 617.31" stroke="#3bb3a6" stroke-width="0.36"/><path d="M880.07 617.23L874.05 615.52" stroke="#3bb3a6" stroke-width="0.36"/><path d="M880.56 615.5L874.58 613.8" stroke="#3bb3a6" stroke-width="0.36"/><path d="M881.05 613.77L874.34 611.86" stroke="#3bb3a6" stroke-width="0.36"/><path d="M881.55 612.04L875.18 610.23" stroke="#3bb3a6" stroke-width="0.36"/><path d="M882.04 610.31L876.29 608.67" stroke="#3bb3a6" stroke-width="0.36"/><path d="M882.53 608.57L876.26 606.79" stroke="#3bb3a6" stroke-width="0.36"/><path d="M883.02 606.84L876.65 605.03" stroke="#3bb3a6" stroke-width="0.36"/><path d="M883.52 605.11L876.66 603.16" stroke="#3bb3a6" stroke-width="0.36"/><path d="M884.01 603.38L877.61 601.56" stroke="#3bb3a6" stroke-width="0.36"/><path d="M884.5 601.65L878.04 599.81" stroke="#3bb3a6" stroke-width="0.36"/><path d="M884.99 599.92L878.2 597.99" stroke="#3bb3a6" stroke-width="0.36"/><path d="M885.48 598.18L878.19 596.11" stroke="#3bb3a6" stroke-width="0.36"/><path d="M885.98 596.45L878.46 594.32" stroke="#3bb3a6" stroke-width="0.36"/><path d="M886.47 594.72L879.72 592.8" stroke="#3bb3a6" stroke-width="0.36"/><path d="M886.96 592.99L879.99 591.01" stroke="#3bb3a6" stroke-width="0.36"/><path d="M887.45 591.26L880.86 589.38" stroke="#3bb3a6" stroke-width="0.36"/><path d="M887.95 589.53L880.97 587.54" stroke="#3bb3a6" stroke-width="0.36"/><path d="M888.44 587.8L881.75 585.89" stroke="#3bb3a6" stroke-width="0.36"/><path d="M888.93 586.06L881.4 583.92" stroke="#3bb3a6" stroke-width="0.36"/><path d="M889.42 584.33L882.14 582.26" stroke="#3bb3a6" stroke-width="0.36"/><path d="M889.92 582.6L883.31 580.72" stroke="#3bb3a6" stroke-width="0.36"/><path d="M890.41 580.87L884.41 579.16" stroke="#3bb3a6" stroke-width="0.36"/><path d="M890.9 579.14L884.04 577.19" stroke="#3bb3a6" stroke-width="0.36"/><path d="M891.39 577.41L885 575.59" stroke="#3bb3a6" stroke-width="0.36"/><path d="M891.88 575.67L885.38 573.82" stroke="#3bb3a6" stroke-width="0.36"/><path d="M892.38 573.94L886.01 572.13" stroke="#3bb3a6" stroke-width="0.36"/><path d="M892.87 572.21L886.7 570.46" stroke="#3bb3a6" stroke-width="0.36"/><path d="M893.36 570.48L886.88 568.64" stroke="#3bb3a6" stroke-width="0.36"/><path d="M893.85 568.75L887.17 566.85" stroke="#3bb3a6" stroke-width="0.36"/><path d="M894.35 567.02L887.69 565.12" stroke="#3bb3a6" stroke-width="0.36"/><path d="M894.84 565.28L888.55 563.5" stroke="#3bb3a6" stroke-width="0.36"/><path d="M895.33 563.55L888.76 561.69" stroke="#3bb3a6" stroke-width="0.36"/><path d="M895.82 561.82L889.6 560.05" stroke="#3bb3a6" stroke-width="0.36"/><path d="M896.32 560.09L889.83 558.25" stroke="#3bb3a6" stroke-width="0.36"/><path d="M896.81 558.36L890.64 556.6" stroke="#3bb3a6" stroke-width="0.36"/><path d="M897.3 556.63L891.38 554.94" stroke="#3bb3a6" stroke-width="0.36"/><path d="M897.79 554.9L892.36 553.35" stroke="#3bb3a6" stroke-width="0.36"/><path d="M898.28 553.16L892.22 551.44" stroke="#3bb3a6" stroke-width="0.36"/><path d="M898.78 551.43L892.81 549.74" stroke="#3bb3a6" stroke-width="0.36"/><path d="M899.27 549.7L893.68 548.11" stroke="#3bb3a6" stroke-width="0.36"/><path d="M899.76 547.97L894.57 546.49" stroke="#3bb3a6" stroke-width="0.36"/><path d="M900.25 546.24L895.5 544.89" stroke="#3bb3a6" stroke-width="0.36"/><path d="M900.75 544.51L896.32 543.25" stroke="#3bb3a6" stroke-width="0.36"/><path d="M901.24 542.77L896.83 541.52" stroke="#3bb3a6" stroke-width="0.36"/><path d="M901.73 541.04L897.55 539.86" stroke="#3bb3a6" stroke-width="0.36"/><path d="M902.22 539.31L898.32 538.2" stroke="#3bb3a6" stroke-width="0.36"/><path d="M902.72 537.58L899.28 536.6" stroke="#3bb3a6" stroke-width="0.36"/><path d="M903.21 535.85L900.54 535.09" stroke="#3bb3a6" stroke-width="0.36"/><path d="M903.7 534.12L901.26 533.42" stroke="#3bb3a6" stroke-width="0.36"/><path d="M904.19 532.39L901.37 531.58" stroke="#3bb3a6" stroke-width="0.36"/><path d="M904.68 530.65L901.99 529.89" stroke="#3bb3a6" stroke-width="0.36"/><path d="M905.18 528.92L902.53 528.17" stroke="#3bb3a6" stroke-width="0.36"/><path d="M905.67 527.19L903.29 526.52" stroke="#3bb3a6" stroke-width="0.36"/><path d="M906.16 525.46L903.41 524.68" stroke="#3bb3a6" stroke-width="0.36"/><path d="M906.65 523.73L903.52 522.84" stroke="#3bb3a6" stroke-width="0.36"/><path d="M907.15 522L904.4 521.22" stroke="#3bb3a6" stroke-width="0.36"/><path d="M907.62 520.26L905.34 519.61" stroke="#3bb3a6" stroke-width="0.36"/><path d="M908.16 518.54L905.2 517.52" stroke="#3bb3a6" stroke-width="0.36"/><path d="M908.8 516.86L905.5 515.52" stroke="#e9a9d2" stroke-width="0.36"/><path d="M909.52 515.21L905.79 513.45" stroke="#e9a9d2" stroke-width="0.36"/><path d="M910.33 513.6L906.17 511.36" stroke="#e9a9d2" stroke-width="0.36"/><path d="M911.23 512.04L906.65 509.24" stroke="#e9a9d2" stroke-width="0.36"/><path d="M912.21 510.53L906.56 506.64" stroke="#e9a9d2" stroke-width="0.36"/><path d="M913.27 509.08L907.08 504.3" stroke="#e9a9d2" stroke-width="0.36"/><path d="M914.41 507.68L907.84 502.03" stroke="#e9a9d2" stroke-width="0.36"/><path d="M915.62 506.35L910.58 501.51" stroke="#e9a9d2" stroke-width="0.36"/><path d="M916.9 505.09L913.75 501.71" stroke="#e9a9d2" stroke-width="0.36"/><path d="M918.25 503.9L917.81 503.37" stroke="#e9a9d2" stroke-width="0.36"/><path d="M919.66 502.78L919.88 503.07" stroke="#3bb3a6" stroke-width="0.36"/><path d="M921.13 501.74L921.96 502.98" stroke="#3bb3a6" stroke-width="0.36"/><path d="M922.65 500.78L923.84 502.79" stroke="#3bb3a6" stroke-width="0.36"/><path d="M924.23 499.91L925.34 502.05" stroke="#3bb3a6" stroke-width="0.36"/><path d="M925.84 499.12L926.99 501.63" stroke="#3bb3a6" stroke-width="0.36"/><path d="M927.5 498.42L928.35 500.6" stroke="#3bb3a6" stroke-width="0.36"/><path d="M929.2 497.81L929.18 497.76" stroke="#3bb3a6" stroke-width="0.36"/><path d="M930.92 497.29L929.75 492.95" stroke="#3bb3a6" stroke-width="0.36"/><path d="M932.67 496.87L932.64 496.74" stroke="#3bb3a6" stroke-width="0.36"/><path d="M934.44 496.54L934.44 496.55" stroke="#3bb3a6" stroke-width="0.36"/><path d="M936.23 496.31L936.25 496.52" stroke="#3bb3a6" stroke-width="0.36"/><path d="M938.02 496.18L937.87 493.09" stroke="#e9a9d2" stroke-width="0.36"/><path d="M939.82 496.14L939.88 487.64" stroke="#e9a9d2" stroke-width="0.36"/><path d="M941.62 496.2L942.43 482.82" stroke="#e9a9d2" stroke-width="0.36"/><path d="M943.41 496.36L945.11 481.63" stroke="#e9a9d2" stroke-width="0.36"/><path d="M945.19 496.61L947.89 480.79" stroke="#e9a9d2" stroke-width="0.36"/><path d="M946.96 496.96L950.85 479.83" stroke="#e9a9d2" stroke-width="0.36"/><path d="M948.7 497.41L953.46 480.71" stroke="#e9a9d2" stroke-width="0.36"/><path d="M950.42 497.95L955.75 482.47" stroke="#e9a9d2" stroke-width="0.36"/><path d="M952.11 498.58L957.76 484.65" stroke="#e9a9d2" stroke-width="0.36"/><path d="M953.76 499.3L959.5 487.08" stroke="#e9a9d2" stroke-width="0.36"/><path d="M955.36 500.11L961.1 489.45" stroke="#e9a9d2" stroke-width="0.36"/><path d="M956.92 501.01L962.43 491.98" stroke="#e9a9d2" stroke-width="0.36"/><path d="M958.43 501.99L963.18 495.08" stroke="#e9a9d2" stroke-width="0.36"/><path d="M959.89 503.05L963.81 497.96" stroke="#e9a9d2" stroke-width="0.36"/><path d="M961.29 504.18L964.65 500.27" stroke="#e9a9d2" stroke-width="0.36"/><path d="M962.62 505.39L964.93 502.98" stroke="#e9a9d2" stroke-width="0.36"/><path d="M963.88 506.67L965.86 504.82" stroke="#e9a9d2" stroke-width="0.36"/><path d="M965.08 508.02L967.34 506.12" stroke="#3bb3a6" stroke-width="0.36"/><path d="M966.2 509.43L968.7 507.55" stroke="#3bb3a6" stroke-width="0.36"/><path d="M967.24 510.9L970.14 508.95" stroke="#3bb3a6" stroke-width="0.36"/><path d="M968.2 512.42L969.22 511.81" stroke="#3bb3a6" stroke-width="0.36"/><path d="M969.08 513.99L969.16 513.95" stroke="#3bb3a6" stroke-width="0.36"/><path d="M969.87 515.61L968.85 516.07" stroke="#3bb3a6" stroke-width="0.36"/><path d="M970.57 517.27L970.24 517.4" stroke="#3bb3a6" stroke-width="0.36"/><path d="M971.18 518.96L972.09 518.66" stroke="#3bb3a6" stroke-width="0.36"/><path d="M971.68 520.69L973.39 520.19" stroke="#3bb3a6" stroke-width="0.36"/><path d="M972.18 522.42L974.52 521.74" stroke="#3bb3a6" stroke-width="0.36"/><path d="M972.68 524.15L975.69 523.28" stroke="#3bb3a6" stroke-width="0.36"/><path d="M973.18 525.88L977.41 524.66" stroke="#3bb3a6" stroke-width="0.36"/><path d="M973.68 527.61L978.76 526.14" stroke="#3bb3a6" stroke-width="0.36"/><path d="M974.18 529.34L979.84 527.7" stroke="#3bb3a6" stroke-width="0.36"/><path d="M974.68 531.06L980.05 529.51" stroke="#3bb3a6" stroke-width="0.36"/><path d="M975.18 532.79L980.83 531.16" stroke="#3bb3a6" stroke-width="0.36"/><path d="M975.68 534.52L981.71 532.78" stroke="#3bb3a6" stroke-width="0.36"/><path d="M976.18 536.25L982.36 534.47" stroke="#3bb3a6" stroke-width="0.36"/><path d="M976.68 537.98L982.35 536.34" stroke="#3bb3a6" stroke-width="0.36"/><path d="M977.17 539.71L983.1 538" stroke="#3bb3a6" stroke-width="0.36"/><path d="M977.67 541.44L983.26 539.83" stroke="#3bb3a6" stroke-width="0.36"/><path d="M978.17 543.17L984.35 541.39" stroke="#3bb3a6" stroke-width="0.36"/><path d="M978.67 544.9L984.44 543.24" stroke="#3bb3a6" stroke-width="0.36"/><path d="M979.17 546.63L984.63 545.06" stroke="#3bb3a6" stroke-width="0.36"/><path d="M979.67 548.36L985.24 546.75" stroke="#3bb3a6" stroke-width="0.36"/><path d="M980.17 550.09L985.87 548.44" stroke="#3bb3a6" stroke-width="0.36"/><path d="M980.67 551.82L986.07 550.26" stroke="#3bb3a6" stroke-width="0.36"/><path d="M981.17 553.55L986.77 551.93" stroke="#3bb3a6" stroke-width="0.36"/><path d="M981.67 555.28L987.24 553.67" stroke="#3bb3a6" stroke-width="0.36"/><path d="M982.17 557.01L986.97 555.62" stroke="#3bb3a6" stroke-width="0.36"/><path d="M982.67 558.74L987.52 557.34" stroke="#3bb3a6" stroke-width="0.36"/><path d="M983.17 560.47L987.3 559.27" stroke="#3bb3a6" stroke-width="0.36"/><path d="M983.67 562.2L986.94 561.25" stroke="#3bb3a6" stroke-width="0.36"/><path d="M984.16 563.93L987.55 562.95" stroke="#3bb3a6" stroke-width="0.36"/><path d="M984.66 565.66L987.65 564.79" stroke="#3bb3a6" stroke-width="0.36"/><path d="M985.16 567.39L987.17 566.81" stroke="#3bb3a6" stroke-width="0.36"/><path d="M985.66 569.12L987.96 568.45" stroke="#3bb3a6" stroke-width="0.36"/><path d="M986.16 570.84L988.09 570.29" stroke="#3bb3a6" stroke-width="0.36"/><path d="M986.66 572.57L987.76 572.26" stroke="#3bb3a6" stroke-width="0.36"/><path d="M987.16 574.3L988.49 573.92" stroke="#3bb3a6" stroke-width="0.36"/><path d="M987.66 576.03L988.65 575.75" stroke="#3bb3a6" stroke-width="0.36"/><path d="M988.16 577.76L988.83 577.57" stroke="#3bb3a6" stroke-width="0.36"/><path d="M988.66 579.49L989.2 579.34" stroke="#3bb3a6" stroke-width="0.36"/><path d="M989.16 581.22L989.55 581.11" stroke="#3bb3a6" stroke-width="0.36"/><path d="M989.66 582.95L990 582.85" stroke="#3bb3a6" stroke-width="0.36"/><path d="M990.16 584.68L990.33 584.63" stroke="#3bb3a6" stroke-width="0.36"/><path d="M990.65 586.41L990.79 586.37" stroke="#3bb3a6" stroke-width="0.36"/><path d="M991.15 588.14L990.72 588.27" stroke="#3bb3a6" stroke-width="0.36"/><path d="M991.65 589.87L991.59 589.89" stroke="#3bb3a6" stroke-width="0.36"/><path d="M992.15 591.6L992.21 591.58" stroke="#3bb3a6" stroke-width="0.36"/><path d="M992.65 593.33L992.65 593.33" stroke="#3bb3a6" stroke-width="0.36"/><path d="M993.15 595.06L992.72 595.18" stroke="#3bb3a6" stroke-width="0.36"/><path d="M993.65 596.79L993.41 596.86" stroke="#3bb3a6" stroke-width="0.36"/><path d="M994.15 598.52L993.03 598.84" stroke="#3bb3a6" stroke-width="0.36"/><path d="M994.65 600.25L993.4 600.61" stroke="#3bb3a6" stroke-width="0.36"/><path d="M995.15 601.98L994.57 602.14" stroke="#3bb3a6" stroke-width="0.36"/><path d="M995.65 603.71L994.19 604.13" stroke="#3bb3a6" stroke-width="0.36"/><path d="M996.15 605.44L994.76 605.84" stroke="#3bb3a6" stroke-width="0.36"/><path d="M996.65 607.17L995.52 607.49" stroke="#3bb3a6" stroke-width="0.36"/><path d="M997.15 608.9L996.19 609.17" stroke="#3bb3a6" stroke-width="0.36"/><path d="M997.64 610.63L996.21 611.04" stroke="#3bb3a6" stroke-width="0.36"/><path d="M998.14 612.35L996.48 612.84" stroke="#3bb3a6" stroke-width="0.36"/><path d="M998.64 614.08L997.31 614.47" stroke="#3bb3a6" stroke-width="0.36"/><path d="M999.14 615.81L998.5 616" stroke="#3bb3a6" stroke-width="0.36"/><path d="M999.64 617.54L998.34 617.92" stroke="#3bb3a6" stroke-width="0.36"/><path d="M1000.14 619.27L998.97 619.61" stroke="#3bb3a6" stroke-width="0.36"/><path d="M1000.64 621L999.16 621.43" stroke="#3bb3a6" stroke-width="0.36"/><path d="M1001.14 622.73L999.19 623.29" stroke="#3bb3a6" stroke-width="0.36"/><path d="M1001.64 624.46L999.98 624.94" stroke="#3bb3a6" stroke-width="0.36"/><path d="M1002.14 626.19L1000.79 626.58" stroke="#3bb3a6" stroke-width="0.36"/><path d="M1002.64 627.92L1000.81 628.45" stroke="#3bb3a6" stroke-width="0.36"/><path d="M1003.14 629.65L1001.84 630.03" stroke="#3bb3a6" stroke-width="0.36"/><path d="M1003.64 631.38L1002.92 631.59" stroke="#3bb3a6" stroke-width="0.36"/><path d="M1004.13 633.11L1002.29 633.64" stroke="#3bb3a6" stroke-width="0.36"/><path d="M1004.63 634.84L1003.3 635.22" stroke="#3bb3a6" stroke-width="0.36"/><path d="M1005.13 636.57L1003.7 636.98" stroke="#3bb3a6" stroke-width="0.36"/><path d="M1005.63 638.3L1004.2 638.71" stroke="#3bb3a6" stroke-width="0.36"/><path d="M1006.13 640.03L1004.75 640.43" stroke="#3bb3a6" stroke-width="0.36"/><path d="M1006.63 641.76L1005.27 642.15" stroke="#3bb3a6" stroke-width="0.36"/><path d="M1007.13 643.49L1005.75 643.89" stroke="#3bb3a6" stroke-width="0.36"/><path d="M1007.63 645.22L1006.67 645.49" stroke="#3bb3a6" stroke-width="0.36"/><path d="M1008.13 646.95L1006.81 647.33" stroke="#3bb3a6" stroke-width="0.36"/><path d="M1008.63 648.68L1007.49 649.01" stroke="#3bb3a6" stroke-width="0.36"/><path d="M1009.13 650.41L1008.4 650.61" stroke="#3bb3a6" stroke-width="0.36"/><path d="M1009.63 652.14L1009.28 652.23" stroke="#3bb3a6" stroke-width="0.36"/><path d="M1010.13 653.86L1009.91 653.93" stroke="#3bb3a6" stroke-width="0.36"/><path d="M1010.63 655.59L1010.27 655.7" stroke="#3bb3a6" stroke-width="0.36"/><path d="M1011.12 657.32L1011.23 657.29" stroke="#3bb3a6" stroke-width="0.36"/><path d="M1011.62 659.05L1011.37 659.13" stroke="#3bb3a6" stroke-width="0.36"/><path d="M1012.12 660.78L1012.38 660.71" stroke="#3bb3a6" stroke-width="0.36"/><path d="M1012.62 662.51L1013.09 662.38" stroke="#3bb3a6" stroke-width="0.36"/><path d="M1013.12 664.24L1013.67 664.08" stroke="#3bb3a6" stroke-width="0.36"/><path d="M1013.62 665.97L1014.5 665.72" stroke="#3bb3a6" stroke-width="0.36"/><path d="M1014.12 667.7L1015.34 667.35" stroke="#3bb3a6" stroke-width="0.36"/><path d="M1014.62 669.43L1015.94 669.05" stroke="#3bb3a6" stroke-width="0.36"/><path d="M1015.12 671.16L1016.18 670.85" stroke="#3bb3a6" stroke-width="0.36"/><path d="M1015.62 672.89L1016.72 672.57" stroke="#3bb3a6" stroke-width="0.36"/><path d="M1016.12 674.62L1018.02 674.07" stroke="#3bb3a6" stroke-width="0.36"/><path d="M1016.62 676.35L1018.7 675.75" stroke="#3bb3a6" stroke-width="0.36"/><path d="M1017.12 678.08L1020.05 677.23" stroke="#3bb3a6" stroke-width="0.36"/><path d="M1017.61 679.81L1020.7 678.92" stroke="#3bb3a6" stroke-width="0.36"/><path d="M1018.11 681.54L1021.46 680.57" stroke="#3bb3a6" stroke-width="0.36"/><path d="M1018.61 683.27L1022.63 682.11" stroke="#3bb3a6" stroke-width="0.36"/><path d="M1019.11 685L1023.37 683.77" stroke="#3bb3a6" stroke-width="0.36"/><path d="M1019.61 686.73L1024.49 685.32" stroke="#3bb3a6" stroke-width="0.36"/><path d="M1020.11 688.46L1024.68 687.14" stroke="#3bb3a6" stroke-width="0.36"/><path d="M1020.61 690.19L1025.34 688.82" stroke="#3bb3a6" stroke-width="0.36"/><path d="M1021.11 691.92L1025.77 690.57" stroke="#3bb3a6" stroke-width="0.36"/><path d="M1021.61 693.65L1026.71 692.17" stroke="#3bb3a6" stroke-width="0.36"/><path d="M1022.11 695.37L1027.41 693.84" stroke="#3bb3a6" stroke-width="0.36"/><path d="M1022.61 697.1L1028.88 695.29" stroke="#3bb3a6" stroke-width="0.36"/><path d="M1023.11 698.83L1030.08 696.82" stroke="#3bb3a6" stroke-width="0.36"/><path d="M1023.61 700.56L1031.05 698.42" stroke="#e59ac4" stroke-width="0.36"/><path d="M1024.11 702.29L1031.72 700.1" stroke="#e59ac4" stroke-width="0.36"/><path d="M1024.6 704.02L1031.99 701.89" stroke="#e59ac4" stroke-width="0.36"/><path d="M1025.1 705.75L1032.44 703.63" stroke="#e59ac4" stroke-width="0.36"/><path d="M1025.6 707.48L1033.33 705.25" stroke="#e59ac4" stroke-width="0.36"/><path d="M1026.1 709.21L1033.91 706.96" stroke="#e59ac4" stroke-width="0.36"/><path d="M1026.6 710.94L1034.95 708.53" stroke="#e59ac4" stroke-width="0.36"/><path d="M1027.1 712.67L1035.81 710.16" stroke="#e59ac4" stroke-width="0.36"/><path d="M1027.6 714.4L1036.29 711.89" stroke="#e59ac4" stroke-width="0.36"/><path d="M856.87 715.44 L857.07 714.56 L856.96 713.6 L857.48 712.81 L857.84 711.98 L858.08 711.11 L858.73 710.36 L858.88 709.46 L858.98 708.56 L859.01 707.63 L859.84 706.93 L860.19 706.09 L860.71 705.3 L860.41 704.28 L860.52 703.38 L861.33 702.68 L860.98 701.64 L860.95 700.7 L861.38 699.88 L861.77 699.06 L862.54 698.34 L863.21 697.59 L863.18 696.65 L863.76 695.88 L864.06 695.03 L864.2 694.13 L864.48 693.28 L864.26 692.28 L864.21 691.33 L863.85 690.29 L864.03 689.41 L864.05 688.48 L864.25 687.6 L864.24 686.66 L864.48 685.79 L864.82 684.95 L864.34 683.88 L864.16 682.89 L864.26 681.98 L864.49 681.11 L865.03 680.33 L865.43 679.51 L865.62 678.63 L865.98 677.79 L865.53 676.73 L865.71 675.85 L865.42 674.83 L865.76 673.99 L865.43 672.96 L865.42 672.02 L866.28 671.33 L866.56 670.47 L866.07 669.4 L866.29 668.53 L865.96 667.5 L866.41 666.69 L866.99 665.92 L866.79 664.92 L866.6 663.93 L867.05 663.13 L867.51 662.32 L867.56 661.4 L867.03 660.31 L867.02 659.38 L867.69 658.63 L867.95 657.77 L868.28 656.93 L868.54 656.06 L868.02 654.98 L868.41 654.16 L868.3 653.19 L868.4 652.28 L868.76 651.45 L868.47 650.43 L868.96 649.63 L868.77 648.64 L869.24 647.84 L869.23 646.9 L869.49 646.04 L869.62 645.14 L869.06 644.05 L869 643.1 L869.51 642.3 L869.26 641.3 L869.84 640.53 L870.01 639.64 L869.71 638.62 L869.82 637.71 L870.45 636.96 L869.97 635.88 L870.53 635.11 L870.82 634.25 L870.53 633.24 L870.87 632.4 L871.12 631.53 L871.52 630.71 L871.76 629.84 L871.46 628.82 L871.76 627.97 L871.67 627.01 L871.95 626.15 L872.1 625.26 L871.79 624.24 L872.19 623.41 L872.4 622.54 L872.32 621.58 L873.04 620.85 L873.52 620.05 L873.14 619 L873.13 618.07 L873.77 617.31 L874.25 616.51 L874.05 615.52 L873.86 614.53 L874.58 613.8 L874.31 612.79 L874.34 611.86 L874.72 611.03 L875.18 610.23 L875.81 609.47 L876.29 608.67 L875.74 607.58 L876.26 606.79 L876.17 605.83 L876.65 605.03 L876.44 604.04 L876.66 603.16 L877.15 602.37 L877.61 601.56 L877.41 600.57 L878.04 599.81 L878.3 598.95 L878.2 597.99 L877.97 596.99 L878.19 596.11 L878.71 595.32 L878.46 594.32 L879.12 593.57 L879.72 592.8 L879.89 591.92 L879.99 591.01 L880.55 590.23 L880.86 589.38 L880.97 588.48 L880.97 587.54 L881.54 586.77 L881.75 585.89 L881.48 584.88 L881.4 583.92 L881.82 583.11 L882.14 582.26 L882.54 581.44 L883.31 580.72 L883.94 579.97 L884.41 579.16 L883.93 578.09 L884.04 577.19 L883.98 576.23 L885 575.59 L885.06 574.67 L885.38 573.82 L885.44 572.91 L886.01 572.13 L885.78 571.13 L886.7 570.46 L886.85 569.56 L886.88 568.64 L886.88 567.7 L887.17 566.85 L887.48 566 L887.69 565.12 L887.81 564.22 L888.55 563.5 L888.74 562.62 L888.76 561.69 L888.94 560.8 L889.6 560.05 L889.71 559.15 L889.83 558.25 L890.31 557.45 L890.64 556.6 L891.17 555.82 L891.38 554.94 L891.6 554.07 L892.36 553.35 L892.39 552.42 L892.22 551.44 L892.41 550.56 L892.81 549.74 L893.5 549 L893.68 548.11 L894.08 547.29 L894.57 546.49 L894.6 545.57 L895.5 544.89 L895.48 543.94 L896.32 543.25 L896.44 542.35 L896.83 541.52 L897.47 540.77 L897.55 539.86 L898 539.05 L898.32 538.2 L898.39 537.29 L899.28 536.6 L900.17 535.92 L900.54 535.09 L900.58 534.16 L901.26 533.42 L901.74 532.62 L901.37 531.58 L901.56 530.7 L901.99 529.89 L901.9 528.93 L902.53 528.17 L902.65 527.27 L903.29 526.52 L903.52 525.64 L903.41 524.68 L903.37 523.73 L903.52 522.84 L904.19 522.09 L904.4 521.22 L904.86 520.41 L905.34 519.61 L905.37 518.61 L905.2 517.52 L905.26 516.49 L905.5 515.52 L905.27 514.33 L905.79 513.45 L906.18 512.51 L906.17 511.36 L906.4 510.3 L906.65 509.24 L906.66 508 L906.56 506.64 L906.73 505.42 L907.08 504.3 L907.1 502.88 L907.84 502.03 L909.14 501.67 L910.58 501.51 L912.11 501.51 L913.75 501.71 L916.13 502.85 L917.81 503.37 L918.76 503.09 L919.88 503.07 L920.65 502.62 L921.96 502.98 L923.01 503.04 L923.84 502.79 L924.94 503.04 L925.34 502.05 L926.17 501.85 L926.99 501.63 L927.79 501.42 L928.35 500.6 L929.09 500.18 L929.18 497.76 L928.79 493.31 L929.75 492.95 L931.44 495.6 L932.64 496.74 L933.59 496.91 L934.44 496.55 L935.34 496.51 L936.25 496.52 L937.1 495.93 L937.87 493.09 L938.8 490.49 L939.88 487.64 L941.11 484.72 L942.43 482.82 L943.75 482.25 L945.11 481.63 L946.52 480.96 L947.89 480.79 L949.39 480.13 L950.85 479.83 L952.01 480.83 L953.46 480.71 L954.78 481.06 L955.75 482.47 L956.75 483.62 L957.76 484.65 L958.8 485.52 L959.5 487.08 L960.27 488.36 L961.1 489.45 L961.77 490.76 L962.43 491.98 L962.74 493.69 L963.18 495.08 L963.31 496.82 L963.81 497.96 L964.33 499.02 L964.65 500.27 L965 501.43 L964.93 502.98 L965.46 503.85 L965.86 504.82 L966.77 505.31 L967.34 506.12 L968.23 506.67 L968.7 507.55 L969.8 507.98 L970.14 508.95 L969.73 510.39 L969.22 511.81 L969.19 512.9 L969.16 513.95 L969.22 514.92 L968.85 516.07 L968.82 517.03 L970.24 517.4 L970.71 518.17 L972.09 518.66 L972.64 519.46 L973.39 520.19 L974.37 520.85 L974.52 521.74 L974.88 522.58 L975.69 523.28 L976.57 523.96 L977.41 524.66 L977.96 525.43 L978.76 526.14 L979 527.01 L979.84 527.7 L979.71 528.68 L980.05 529.51 L980.75 530.25 L980.83 531.16 L981.4 531.93 L981.71 532.78 L981.86 533.68 L982.36 534.47 L982.44 535.38 L982.35 536.34 L982.48 537.24 L983.1 538 L983.58 538.8 L983.26 539.83 L983.82 540.6 L984.35 541.39 L984.3 542.34 L984.44 543.24 L984.27 544.22 L984.63 545.06 L984.89 545.92 L985.24 546.75 L984.98 547.76 L985.87 548.44 L986 549.34 L986.07 550.26 L986.61 551.04 L986.77 551.93 L986.9 552.83 L987.24 553.67 L986.75 554.75 L986.97 555.62 L986.98 556.56 L987.52 557.34 L987.78 558.2 L987.3 559.27 L987.27 560.22 L986.94 561.25 L987.09 562.15 L987.55 562.95 L987.88 563.79 L987.65 564.79 L987.4 565.8 L987.17 566.81 L987.49 567.65 L987.96 568.45 L987.58 569.5 L988.09 570.29 L987.71 571.34 L987.76 572.26 L987.9 573.15 L988.49 573.92 L988.52 574.85 L988.65 575.75 L989.05 576.57 L988.83 577.57 L989.41 578.34 L989.2 579.34 L989.54 580.17 L989.55 581.11 L989.58 582.04 L990 582.85 L990.2 583.73 L990.33 584.63 L990.51 585.52 L990.79 586.37 L990.66 587.35 L990.72 588.27 L991.24 589.05 L991.59 589.89 L991.74 590.78 L992.21 591.58 L992.29 592.5 L992.65 593.33 L992.31 594.36 L992.72 595.18 L993.07 596.02 L993.41 596.86 L993.1 597.88 L993.03 598.84 L993.66 599.6 L993.4 600.61 L994.17 601.32 L994.57 602.14 L994.17 603.2 L994.19 604.13 L994.79 604.89 L994.76 605.84 L994.71 606.79 L995.52 607.49 L995.65 608.39 L996.19 609.17 L995.94 610.18 L996.21 611.04 L996.73 611.83 L996.48 612.84 L996.64 613.72 L997.31 614.47 L997.99 615.21 L998.5 616 L998.06 617.06 L998.34 617.92 L998.84 618.71 L998.97 619.61 L999.33 620.44 L999.16 621.43 L999.08 622.39 L999.19 623.29 L999.31 624.2 L999.98 624.94 L1000.4 625.76 L1000.79 626.58 L1000.7 627.54 L1000.81 628.45 L1001 629.33 L1001.84 630.03 L1002.52 630.77 L1002.92 631.59 L1002.44 632.66 L1002.29 633.64 L1003.2 634.32 L1003.3 635.22 L1003.76 636.03 L1003.7 636.98 L1003.92 637.86 L1004.2 638.71 L1004.38 639.6 L1004.75 640.43 L1004.55 641.42 L1005.27 642.15 L1005.91 642.9 L1005.75 643.89 L1006.08 644.73 L1006.67 645.49 L1006.8 646.39 L1006.81 647.33 L1006.94 648.23 L1007.49 649.01 L1007.43 649.96 L1008.4 650.61 L1008.95 651.39 L1009.28 652.23 L1009.75 653.04 L1009.91 653.93 L1009.93 654.86 L1010.27 655.7 L1010.51 656.57 L1011.23 657.29 L1011.58 658.13 L1011.37 659.13 L1012.05 659.87 L1012.38 660.71 L1012.73 661.54 L1013.09 662.38 L1013.03 663.33 L1013.67 664.08 L1014.21 664.87 L1014.5 665.72 L1014.92 666.53 L1015.34 667.35 L1015.4 668.27 L1015.94 669.05 L1015.79 670.03 L1016.18 670.85 L1016.7 671.64 L1016.72 672.57 L1017.27 673.35 L1018.02 674.07 L1018.59 674.84 L1018.7 675.75 L1019.64 676.41 L1020.05 677.23 L1020.14 678.14 L1020.7 678.92 L1021.1 679.74 L1021.46 680.57 L1021.71 681.44 L1022.63 682.11 L1022.95 682.95 L1023.37 683.77 L1023.84 684.57 L1024.49 685.32 L1024.1 686.37 L1024.68 687.14 L1025.29 687.9 L1025.34 688.82 L1025.71 689.65 L1025.77 690.57 L1026.14 691.4 L1026.71 692.17 L1026.94 693.04 L1027.41 693.84 L1028.48 694.47 L1028.88 695.29 L1029.25 696.12 L1030.08 696.82 L1030.32 697.69 L1031.05 698.42 L1031.25 699.29 L1031.72 700.1 L1031.44 701.11 L1031.99 701.89 L1032.62 702.65 L1032.44 703.63 L1033.4 704.29 L1033.33 705.25 L1033.79 706.05 L1033.91 706.96 L1034.42 707.75 L1034.95 708.53 L1034.85 709.5 L1035.81 710.16 L1035.95 711.05 L1036.29 711.89" fill="none" stroke="#2a9f93" stroke-width="0.7"/><path d="M852.5 714.2 L907.6 520.4 A33.26 33.26 0 0 1 971.6 520.4 L1027.6 714.4" fill="none" stroke="#3a2f4a" stroke-width="0.65"/><path d="M852.5 714.2L866.9 663.6" stroke="#c8444a" stroke-width="0.45"/><rect x="851.5" y="546.2" width="1" height="1" fill="#d9444a"/><rect x="939.5" y="546.2" width="1" height="1" fill="#d9444a"/><rect x="1027" y="546.2" width="1" height="1" fill="#d9444a"/><rect x="851.5" y="663.3" width="1" height="1" fill="#d9444a"/><rect x="939.5" y="663.3" width="1" height="1" fill="#d9444a"/><rect x="1027" y="663.3" width="1" height="1" fill="#d9444a"/><rect x="895.5" y="604.1" width="1" height="1" fill="#d9444a"/><rect x="983.1" y="604.1" width="1" height="1" fill="#d9444a"/></svg>
<div class="t" style="left:765px;top:468px;font-size:15.6px;line-height:18.72px;color:#2a2f33;transform:scale(0.25);font-family:'DejaVu Sans','Liberation Sans',sans-serif;">0,652 (mm)</div>
<div class="t" style="left:1161px;top:468px;font-size:14.8px;line-height:17.76px;color:#2a2f33;transform:scale(0.25) translateX(-100%);font-family:'DejaVu Sans','Liberation Sans',sans-serif;">Verstärkung: 50</div>
<div class="t" style="left:855px;top:549px;font-size:14.4px;line-height:17.28px;color:#3a4248;transform:scale(0.25);">Linke Flanke</div>
<div class="t" style="left:1025.6px;top:549px;font-size:14.4px;line-height:17.28px;color:#3a4248;transform:scale(0.25) translateX(-100%);">Rechte Flanke</div>
<div class="t" style="left:726.6px;top:488px;font-size:15.8px;line-height:18.96px;color:#2a2f33;transform:scale(0.25) translateX(-100%);font-family:'DejaVu Sans','Liberation Sans',sans-serif;">307,715</div>
<div class="t" style="left:726.6px;top:514px;font-size:15.8px;line-height:18.96px;color:#2a2f33;transform:scale(0.25) translateX(-100%);font-family:'DejaVu Sans','Liberation Sans',sans-serif;">307,195</div>
<div class="t" style="left:726.6px;top:540px;font-size:15.8px;line-height:18.96px;color:#2a2f33;transform:scale(0.25) translateX(-100%);font-family:'DejaVu Sans','Liberation Sans',sans-serif;">306,675</div>
<div class="t" style="left:726.6px;top:566px;font-size:15.8px;line-height:18.96px;color:#2a2f33;transform:scale(0.25) translateX(-100%);font-family:'DejaVu Sans','Liberation Sans',sans-serif;">306,155</div>
<div class="t" style="left:726.6px;top:592px;font-size:15.8px;line-height:18.96px;color:#2a2f33;transform:scale(0.25) translateX(-100%);font-family:'DejaVu Sans','Liberation Sans',sans-serif;">305,636</div>
<div class="t" style="left:726.6px;top:618px;font-size:15.8px;line-height:18.96px;color:#2a2f33;transform:scale(0.25) translateX(-100%);font-family:'DejaVu Sans','Liberation Sans',sans-serif;">305,112</div>
<div class="t" style="left:726.6px;top:644px;font-size:15.8px;line-height:18.96px;color:#2a2f33;transform:scale(0.25) translateX(-100%);font-family:'DejaVu Sans','Liberation Sans',sans-serif;">304,591</div>
<div class="t" style="left:726.6px;top:670px;font-size:15.8px;line-height:18.96px;color:#2a2f33;transform:scale(0.25) translateX(-100%);font-family:'DejaVu Sans','Liberation Sans',sans-serif;">304,070</div>
<div class="t" style="left:726.6px;top:695px;font-size:15.8px;line-height:18.96px;color:#2a2f33;transform:scale(0.25) translateX(-100%);font-family:'DejaVu Sans','Liberation Sans',sans-serif;">303,540</div>
<div class="t" style="left:766.5px;top:726px;font-size:15.2px;line-height:18.24px;color:#2a2f33;transform:scale(0.25) translateX(-50%);font-family:'DejaVu Sans','Liberation Sans',sans-serif;">33,818</div>
<div class="t" style="left:809.87px;top:726px;font-size:15.2px;line-height:18.24px;color:#2a2f33;transform:scale(0.25) translateX(-50%);font-family:'DejaVu Sans','Liberation Sans',sans-serif;">32,946</div>
<div class="t" style="left:853.24px;top:726px;font-size:15.2px;line-height:18.24px;color:#2a2f33;transform:scale(0.25) translateX(-50%);font-family:'DejaVu Sans','Liberation Sans',sans-serif;">32,073</div>
<div class="t" style="left:896.61px;top:726px;font-size:15.2px;line-height:18.24px;color:#2a2f33;transform:scale(0.25) translateX(-50%);font-family:'DejaVu Sans','Liberation Sans',sans-serif;">31,200</div>
<div class="t" style="left:939.98px;top:726px;font-size:15.2px;line-height:18.24px;color:#2a2f33;transform:scale(0.25) translateX(-50%);font-family:'DejaVu Sans','Liberation Sans',sans-serif;">30,326</div>
<div class="t" style="left:983.35px;top:726px;font-size:15.2px;line-height:18.24px;color:#2a2f33;transform:scale(0.25) translateX(-50%);font-family:'DejaVu Sans','Liberation Sans',sans-serif;">29,453</div>
<div class="t" style="left:1026.72px;top:726px;font-size:15.2px;line-height:18.24px;color:#2a2f33;transform:scale(0.25) translateX(-50%);font-family:'DejaVu Sans','Liberation Sans',sans-serif;">28,580</div>
<div class="t" style="left:1070.09px;top:726px;font-size:15.2px;line-height:18.24px;color:#2a2f33;transform:scale(0.25) translateX(-50%);font-family:'DejaVu Sans','Liberation Sans',sans-serif;">27,707</div>
<div class="t" style="left:1113.46px;top:726px;font-size:15.2px;line-height:18.24px;color:#2a2f33;transform:scale(0.25) translateX(-50%);font-family:'DejaVu Sans','Liberation Sans',sans-serif;">26,834</div>
<div class="t" style="left:1153.43px;top:726px;font-size:15.2px;line-height:18.24px;color:#2a2f33;transform:scale(0.25) translateX(-50%);font-family:'DejaVu Sans','Liberation Sans',sans-serif;">25,960</div>
<div class="a" style="left:1046.2px;top:618.6px;width:112.8px;height:102.2px;background:#59626a;box-shadow:0 0 1.2px #1c2226;border-radius:1px 1px 0 0"></div>
<div class="t" style="left:1050.6px;top:620px;font-size:19.2px;line-height:23.04px;color:#d3d9de;transform:scale(0.25);">Rechte Flanke: 0,005 (AAA)</div>
<div class="t" style="left:1050.6px;top:662px;font-size:19.2px;line-height:23.04px;color:#d3d9de;transform:scale(0.25);">Linke Flanke: 0,004 (AAA)</div>
<svg class="a" style="left:1048.6px;top:627.5px;" width="108" height="73.5" viewBox="1048.6 627.5 108 73.5"><rect x="1048.3" y="627.6" width="108.4" height="2.55" fill="#2e8e97"/><rect x="1048.3" y="630.1" width="108.4" height="10.69" fill="#3f9fa9"/><rect x="1048.3" y="640.75" width="108.4" height="7.25" fill="#5cafb8"/><rect x="1048.3" y="647.94" width="108.4" height="2.55" fill="#8ccdaa"/><rect x="1048.3" y="650.45" width="108.4" height="6" fill="#6cbac3"/><rect x="1048.3" y="656.4" width="108.4" height="2.55" fill="#c5e0f0"/><path d="M1048.3 629.32H1156.7" stroke="#b9cf7a" stroke-width="0.5"/><path d="M1048.3 640.75H1156.7" stroke="#a8918a" stroke-width="0.55"/><path d="M1048.3 630.73H1156.7" stroke="#2a6f7c" stroke-width="0.25" stroke-dasharray="0.5 0.7" opacity=".55"/><path d="M1048.3 633.86H1156.7" stroke="#2a6f7c" stroke-width="0.25" stroke-dasharray="0.5 0.7" opacity=".55"/><path d="M1048.3 636.99H1156.7" stroke="#2a6f7c" stroke-width="0.25" stroke-dasharray="0.5 0.7" opacity=".55"/><path d="M1048.3 640.12H1156.7" stroke="#2a6f7c" stroke-width="0.25" stroke-dasharray="0.5 0.7" opacity=".55"/><path d="M1048.3 643.25H1156.7" stroke="#2a6f7c" stroke-width="0.25" stroke-dasharray="0.5 0.7" opacity=".55"/><path d="M1048.3 646.38H1156.7" stroke="#2a6f7c" stroke-width="0.25" stroke-dasharray="0.5 0.7" opacity=".55"/><path d="M1048.3 649.51H1156.7" stroke="#2a6f7c" stroke-width="0.25" stroke-dasharray="0.5 0.7" opacity=".55"/><path d="M1048.3 652.64H1156.7" stroke="#2a6f7c" stroke-width="0.25" stroke-dasharray="0.5 0.7" opacity=".55"/><path d="M1048.3 655.77H1156.7" stroke="#2a6f7c" stroke-width="0.25" stroke-dasharray="0.5 0.7" opacity=".55"/><path d="M1048.3 629.83L1049.02 630.8L1049.75 630.12L1050.47 630.84L1051.19 630.83L1051.91 628.82L1052.64 628.55L1053.36 631.31L1054.08 629.34L1054.8 629.37L1055.53 632.11L1056.25 630.43L1056.97 631.81L1057.69 630.69L1058.42 631.37L1059.14 629.81L1059.86 631.6L1060.59 632.53L1061.31 631.46L1062.03 632.33L1062.75 632.22L1063.48 630.25L1064.2 632.76L1064.92 632.3L1065.64 631.43L1066.37 630.62L1067.09 633.83L1067.81 633.02L1068.53 634.42L1069.26 635.52L1069.98 635.5L1070.7 636.76L1071.43 635.49L1072.15 637.44L1072.87 636.76L1073.59 639L1074.32 639.35L1075.04 637.21L1075.76 637.61L1076.48 637.89L1077.21 640.47L1077.93 638.65L1078.65 639.3L1079.37 638.18L1080.1 638.89L1080.82 638.48L1081.54 638.35L1082.27 639.16L1082.99 639.16L1083.71 640.26L1084.43 639.49L1085.16 640.34L1085.88 640.1L1086.6 640.62L1087.32 639.64L1088.05 638.01L1088.77 640.53L1089.49 641L1090.21 640.92L1090.94 639.88L1091.66 640.5L1092.38 638.89L1093.11 641.14L1093.83 640.37L1094.55 639.51L1095.27 638.88L1096 641.73L1096.72 642.33L1097.44 639.36L1098.16 641.94L1098.89 640.72L1099.61 639.96L1100.33 640.58L1101.05 642.35L1101.78 642.84L1102.5 640.12L1103.22 642.53L1103.95 641.02L1104.67 643.79L1105.39 642.91L1106.11 645.26L1106.84 646.05L1107.56 644.87L1108.28 647.02L1109 645.1L1109.73 644.02L1110.45 645.54L1111.17 643.31L1111.89 643.6L1112.62 644.05L1113.34 644.47L1114.06 642.62L1114.79 641.95L1115.51 644.52L1116.23 642.33L1116.95 644.27L1117.68 643.78L1118.4 641.72L1119.12 641.72L1119.84 641.65L1120.57 641.8L1121.29 641.35L1122.01 640.95L1122.73 641.49L1123.46 642.93L1124.18 641.77L1124.9 641.84L1125.63 643.17L1126.35 641.85L1127.07 642.4L1127.79 645.15L1128.52 644.07L1129.24 644.67L1129.96 643.32L1130.68 645.21L1131.41 646.28L1132.13 644.85L1132.85 647.4L1133.57 646.96L1134.3 644.49L1135.02 645.94L1135.74 644.89L1136.47 645.12L1137.19 643.49L1137.91 644.21L1138.63 644.01L1139.36 641.43L1140.08 641.45L1140.8 643.45L1141.52 644.32L1142.25 641.76L1142.97 642.35L1143.69 642.7L1144.41 641.64L1145.14 641.68L1145.86 641.39L1146.58 641.47L1147.31 642.13L1148.03 641L1148.75 641.44L1149.47 642.99L1150.2 640.6L1150.92 642.65L1151.64 643.41L1152.36 642.13L1153.09 642.01L1153.81 644.19L1154.53 642.43L1155.25 642.43L1155.98 643.47L1156.7 644.56" fill="none" stroke="#2b4fa6" stroke-width="0.5" stroke-linejoin="round"/><rect x="1048.3" y="627.6" width="108.4" height="31.3" fill="none" stroke="#2f3a40" stroke-width="0.5"/><rect x="1048.3" y="669.9" width="108.4" height="1.91" fill="#2e8e97"/><rect x="1048.3" y="671.76" width="108.4" height="7.49" fill="#38949e"/><rect x="1048.3" y="679.2" width="108.4" height="5.32" fill="#419ca6"/><rect x="1048.3" y="684.47" width="108.4" height="8.42" fill="#4fa5b0"/><rect x="1048.3" y="692.84" width="108.4" height="5.63" fill="#cad4ec"/><rect x="1048.3" y="698.42" width="108.4" height="2.53" fill="#d9e8e2"/><path d="M1048.3 671.45H1156.7" stroke="#a9c97a" stroke-width="0.5"/><path d="M1048.3 684.93H1156.7" stroke="#8fce9b" stroke-width="0.8"/><path d="M1048.3 692.84H1156.7" stroke="#8aa0a8" stroke-width="0.4"/><path d="M1048.3 673H1156.7" stroke="#2a6f7c" stroke-width="0.25" stroke-dasharray="0.5 0.7" opacity=".55"/><path d="M1048.3 676.1H1156.7" stroke="#2a6f7c" stroke-width="0.25" stroke-dasharray="0.5 0.7" opacity=".55"/><path d="M1048.3 679.2H1156.7" stroke="#2a6f7c" stroke-width="0.25" stroke-dasharray="0.5 0.7" opacity=".55"/><path d="M1048.3 682.3H1156.7" stroke="#2a6f7c" stroke-width="0.25" stroke-dasharray="0.5 0.7" opacity=".55"/><path d="M1048.3 685.4H1156.7" stroke="#2a6f7c" stroke-width="0.25" stroke-dasharray="0.5 0.7" opacity=".55"/><path d="M1048.3 688.5H1156.7" stroke="#2a6f7c" stroke-width="0.25" stroke-dasharray="0.5 0.7" opacity=".55"/><path d="M1048.3 691.6H1156.7" stroke="#2a6f7c" stroke-width="0.25" stroke-dasharray="0.5 0.7" opacity=".55"/><path d="M1048.3 694.7H1156.7" stroke="#2a6f7c" stroke-width="0.25" stroke-dasharray="0.5 0.7" opacity=".55"/><path d="M1048.3 697.8H1156.7" stroke="#2a6f7c" stroke-width="0.25" stroke-dasharray="0.5 0.7" opacity=".55"/><path d="M1048.3 695.86L1049.02 696.12L1049.75 696.26L1050.47 696.58L1051.19 696.24L1051.91 696.62L1052.64 695L1053.36 695.86L1054.08 696.79L1054.8 696.28L1055.53 696.79L1056.25 695.37L1056.97 696.07L1057.69 695.7L1058.42 696.29L1059.14 696.39L1059.86 695.37L1060.59 695.76L1061.31 695.9L1062.03 697.11L1062.75 696.85L1063.48 695.74L1064.2 696.95L1064.92 695.74L1065.64 696.65L1066.37 695.76L1067.09 695.55L1067.81 697.19L1068.53 695.98L1069.26 696.01L1069.98 697.46L1070.7 697.27L1071.43 696.21L1072.15 697.48L1072.87 696.72L1073.59 696.99L1074.32 696.13L1075.04 697.52L1075.76 697.08L1076.48 697.61L1077.21 697.5L1077.93 696.41L1078.65 696.55L1079.37 696.21L1080.1 696.19L1080.82 696.06L1081.54 696.46L1082.27 696.98L1082.99 695.82L1083.71 697.04L1084.43 696.36L1085.16 696.27L1085.88 697.17L1086.6 696.5L1087.32 696.16L1088.05 696.42L1088.77 696.8L1089.49 695.55L1090.21 697.22L1090.94 695.4L1091.66 696.71L1092.38 696.83L1093.11 695.23L1093.83 696.6L1094.55 695.75L1095.27 696.09L1096 694.96L1096.72 694.97L1097.44 695.16L1098.16 696.54L1098.89 695.07L1099.61 696.04L1100.33 696.31L1101.05 696.27L1101.78 695.09L1102.5 695.05L1103.22 695.35L1103.95 695.79L1104.67 694.53L1105.39 695.7L1106.11 695.77L1106.84 695.87L1107.56 694.31L1108.28 695.98L1109 694.37L1109.73 694.82L1110.45 695.3L1111.17 695.85L1111.89 694.75L1112.62 695.82L1113.34 695.09L1114.06 694.6L1114.79 694.55L1115.51 694.22L1116.23 693.98L1116.95 694.05L1117.68 694.99L1118.4 695.5L1119.12 693.88L1119.84 693.61L1120.57 695.3L1121.29 694.39L1122.01 694.09L1122.73 693.72L1123.46 694.32L1124.18 694.69L1124.9 693.83L1125.63 693.6L1126.35 692.76L1127.07 694.19L1127.79 692.38L1128.52 693.08L1129.24 693.55L1129.96 692.07L1130.68 693.02L1131.41 693.26L1132.13 692.5L1132.85 692.63L1133.57 691.2L1134.3 691.64L1135.02 690.95L1135.74 692.03L1136.47 690.81L1137.19 690.89L1137.91 691.7L1138.63 691.22L1139.36 691.25L1140.08 690.07L1140.8 689.92L1141.52 690.17L1142.25 689.49L1142.97 688.94L1143.69 688.94L1144.41 688.26L1145.14 688.48L1145.86 689.41L1146.58 689.19L1147.31 688.41L1148.03 688L1148.75 687.54L1149.47 686.91L1150.2 687.08L1150.92 687.87L1151.64 687.86L1152.36 686.75L1153.09 687.38L1153.81 687.19L1154.53 686.88L1155.25 686.66L1155.98 686.67L1156.7 685.77" fill="none" stroke="#2b4fa6" stroke-width="0.5" stroke-linejoin="round"/><rect x="1048.3" y="669.9" width="108.4" height="31" fill="none" stroke="#2f3a40" stroke-width="0.5"/></svg>
<div class="a" style="left:1048.6px;top:702.8px;width:44.9px;height:7.2px;background:#f4f6f8;"></div>
<div class="a" style="left:1053.4px;top:703.2px;width:5.2px;height:6.4px;background:#c3cad0;"></div>
<div class="t" style="left:1050.4px;top:704px;font-size:17.6px;line-height:21.12px;color:#3a4248;transform:scale(0.25);">‹</div>
<div class="t" style="left:1090.2px;top:704px;font-size:17.6px;line-height:21.12px;color:#3a4248;transform:scale(0.25);">›</div>
<div class="t" style="left:1156.6px;top:703px;font-size:20px;line-height:24px;color:#d3d9de;transform:scale(0.25) translateX(-100%);">Druckskalierung: 0.010</div>
<div class="a" style="left:1048.6px;top:711.6px;width:88.9px;height:8.4px;background:#f1f3f5;border-radius:.8px"></div>
<div class="a" style="left:1131.6px;top:712px;width:5.6px;height:7.6px;background:#9aa3ab;border-radius:.6px"></div>
<div class="a" style="left:1133px;top:715px;border:1.4px solid transparent;border-top:2px solid #2f363b;width:0;height:0"></div>
<div class="t" style="left:1049.4px;top:713px;font-size:19.8px;line-height:23.76px;color:#2f363b;transform:scale(0.25);">Kein Toleranzband</div>
<svg class="a" style="left:1139px;top:711px;" width="19" height="10" viewBox="1139 711 19 10"><circle cx="1143.6" cy="715.6" r="3.5" fill="#3f7fc8" stroke="#cfe0f2" stroke-width="0.6"/><path d="M1140.6 715.2h6M1143.6 712.6v6" stroke="#dcebf8" stroke-width="0.7"/><rect x="1149.2" y="714.6" width="7.4" height="4.2" rx=".6" fill="#d0d6dc"/><rect x="1150.6" y="712.4" width="4.6" height="2.6" fill="#eef1f3"/><rect x="1150.8" y="717" width="4.2" height="2.6" fill="#f7f8f9" stroke="#59626a" stroke-width=".4"/></svg>
<div class="a" style="left:1171px;top:467px;width:134.5px;height:306.8px;background:#626b74;"></div>
<div class="a" style="left:1305.5px;top:467px;width:1.7px;height:306.8px;background:#4a535b;"></div>
<div class="a" style="left:1171px;top:467.2px;width:66px;height:8.2px;background:#4b545c;"></div>
<div class="a" style="left:1237px;top:467.2px;width:68.5px;height:8.2px;background:#69737c;"></div>
<div class="t" style="left:1204px;top:469px;font-size:18px;line-height:21.6px;color:#8d969e;transform:scale(0.25) translateX(-50%);">Hilfe</div>
<div class="t" style="left:1271px;top:469px;font-size:18px;line-height:21.6px;color:#e4e8ec;transform:scale(0.25) translateX(-50%);">Soll-Ist-Vergleich</div>
<div class="a" style="left:1171px;top:477.2px;width:66.6px;height:7.6px;background:#4b545c;"></div>
<div class="a" style="left:1238.4px;top:477.2px;width:67.1px;height:7.6px;background:#4b545c;"></div>
<div class="t" style="left:1204px;top:479px;font-size:17.6px;line-height:21.12px;color:#8d969e;transform:scale(0.25) translateX(-50%);">Manipulationen</div>
<div class="t" style="left:1271px;top:479px;font-size:17.6px;line-height:21.12px;color:#8d969e;transform:scale(0.25) translateX(-50%);">Eigenschaften</div>
<div class="t" style="left:1173.2px;top:487px;font-size:20.2px;line-height:24.24px;color:#e4e8ec;transform:scale(0.25);">Manueller Soll-Ist-Vergleich</div>
<div class="a" style="left:1195px;top:497px;width:17.8px;height:17.4px;background:#4b555d;border-radius:1px"></div>
<div class="a" style="left:1174.2px;top:518px;width:17.6px;height:17px;background:#4b555d;border-radius:1px"></div>
<div class="a" style="left:1216px;top:518px;width:17.2px;height:17px;background:#4b555d;border-radius:1px"></div>
<div class="a" style="left:1195px;top:538.5px;width:17.8px;height:17.5px;background:#4b555d;border-radius:1px"></div>
<div class="a" style="left:1244px;top:497px;width:17.8px;height:17.4px;background:#4b555d;border-radius:1px"></div>
<div class="a" style="left:1280px;top:497px;width:17.8px;height:17.4px;background:#4b555d;border-radius:1px"></div>
<svg class="a" style="left:1173px;top:496px;" width="126" height="61" viewBox="1173 496 126 61"><polygon points="-6,-1.3 0.6,-1.3 0.6,-4 6,0 0.6,4 0.6,1.3 -6,1.3" fill="#a9b2ba" transform="translate(1203.9 505.6) rotate(270)"/><polygon points="-6,-1.3 0.6,-1.3 0.6,-4 6,0 0.6,4 0.6,1.3 -6,1.3" fill="#a9b2ba" transform="translate(1183 526.5) rotate(180)"/><polygon points="-6,-1.3 0.6,-1.3 0.6,-4 6,0 0.6,4 0.6,1.3 -6,1.3" fill="#a9b2ba" transform="translate(1224.6 526.5) rotate(0)"/><polygon points="-6,-1.3 0.6,-1.3 0.6,-4 6,0 0.6,4 0.6,1.3 -6,1.3" fill="#a9b2ba" transform="translate(1203.9 547.4) rotate(90)"/><path d="M1258.08 505.95 A5.2 5.2 0 1 1 1255.1 501.69" fill="none" stroke="#a9b2ba" stroke-width="1.6"/><polygon points="1258.09,503.08 1253.01,504.03 1255.55,498.59" fill="#a9b2ba"/><path d="M1283.72 505.95 A5.2 5.2 0 1 0 1286.7 501.69" fill="none" stroke="#a9b2ba" stroke-width="1.6"/><polygon points="1283.71,503.08 1286.25,498.59 1288.79,504.03" fill="#a9b2ba"/></svg>
<div class="t" style="left:1247.6px;top:522px;font-size:17.6px;line-height:21.12px;color:#e4e8ec;transform:scale(0.25);">Versatz</div>
<div class="a" style="left:1244px;top:528.6px;width:55.8px;height:8.4px;background:#c3cad1;border-radius:1px"></div>
<div class="t" style="left:1245px;top:531px;font-size:18.4px;line-height:22.08px;color:#f4f6f8;transform:scale(0.25);">0,001</div>
<div class="t" style="left:1247.6px;top:542px;font-size:17.6px;line-height:21.12px;color:#e4e8ec;transform:scale(0.25);">Verdrehwinkel</div>
<div class="a" style="left:1244px;top:549.2px;width:55.8px;height:8.4px;background:#c3cad1;border-radius:1px"></div>
<div class="t" style="left:1245px;top:551px;font-size:18.4px;line-height:22.08px;color:#f4f6f8;transform:scale(0.25);">0,01</div>
<div class="a" style="left:1180px;top:565.5px;width:13.4px;height:6.6px;background:#48525a;border-radius:3.3px"></div>
<div class="a" style="left:1181px;top:566.5px;width:4.6px;height:4.6px;background:#9aa3ab;border-radius:50%"></div>
<div class="t" style="left:1195.6px;top:566px;font-size:18.4px;line-height:22.08px;color:#838d96;transform:scale(0.25);">Selektierte Objekte nutzen</div>
<div class="a" style="left:1180px;top:575.8px;width:13.4px;height:6.8px;background:#62bd6a;border-radius:3.4px"></div>
<div class="a" style="left:1187.6px;top:576.8px;width:4.8px;height:4.8px;background:#2f4a44;border-radius:50%"></div>
<div class="t" style="left:1195.6px;top:577px;font-size:18.4px;line-height:22.08px;color:#e4e8ec;transform:scale(0.25);">Vergleichen</div>
<div class="a" style="left:1180px;top:586.2px;width:13.4px;height:6.6px;background:#48525a;border-radius:3.3px"></div>
<div class="a" style="left:1181px;top:587.2px;width:4.6px;height:4.6px;background:#9aa3ab;border-radius:50%"></div>
<div class="t" style="left:1195.6px;top:587px;font-size:18.4px;line-height:22.08px;color:#838d96;transform:scale(0.25);">Ist-Kontur verändern</div>
<div class="a" style="left:1171px;top:597.6px;width:67px;height:8px;background:#69737c;"></div>
<div class="a" style="left:1238px;top:597.6px;width:66.6px;height:8px;background:#4b545c;"></div>
<div class="t" style="left:1206px;top:599px;font-size:18px;line-height:21.6px;color:#e4e8ec;transform:scale(0.25) translateX(-50%);">Ergebnisse#1</div>
<div class="t" style="left:1271.6px;top:599px;font-size:18px;line-height:21.6px;color:#8d969e;transform:scale(0.25) translateX(-50%);">Ergebnisse#2</div>
<div class="t" style="left:1181.6px;top:616px;font-size:20px;line-height:24px;color:#e4e8ec;transform:scale(0.25);">Versatz X</div>
<div class="t" style="left:1300px;top:616px;font-size:19.6px;line-height:23.52px;color:#e4e8ec;transform:scale(0.25) translateX(-100%);">0,020</div>
<div class="t" style="left:1181.6px;top:626px;font-size:20px;line-height:24px;color:#e4e8ec;transform:scale(0.25);">Versatz Z</div>
<div class="t" style="left:1300px;top:626px;font-size:19.6px;line-height:23.52px;color:#e4e8ec;transform:scale(0.25) translateX(-100%);">75,119</div>
<div class="t" style="left:1181.6px;top:637px;font-size:20px;line-height:24px;color:#e4e8ec;transform:scale(0.25);">Versatz Phi</div>
<div class="t" style="left:1300px;top:637px;font-size:19.6px;line-height:23.52px;color:#e4e8ec;transform:scale(0.25) translateX(-100%);">270,00</div>
<div class="t" style="left:1181.6px;top:647px;font-size:20px;line-height:24px;color:#e4e8ec;transform:scale(0.25);">mittlere Abweichung (gesamt)</div>
<div class="t" style="left:1300px;top:647px;font-size:19.6px;line-height:23.52px;color:#e4e8ec;transform:scale(0.25) translateX(-100%);">0,001</div>
<div class="t" style="left:1181.6px;top:657px;font-size:20px;line-height:24px;color:#e4e8ec;transform:scale(0.25);">mittlere Abweichung (außen)</div>
<div class="t" style="left:1300px;top:657px;font-size:19.6px;line-height:23.52px;color:#e4e8ec;transform:scale(0.25) translateX(-100%);">0,001</div>
<div class="t" style="left:1181.6px;top:668px;font-size:20px;line-height:24px;color:#e4e8ec;transform:scale(0.25);">mittlere Abweichung (innen)</div>
<div class="t" style="left:1300px;top:668px;font-size:19.6px;line-height:23.52px;color:#e4e8ec;transform:scale(0.25) translateX(-100%);">0,002</div>
<div class="t" style="left:1181.6px;top:678px;font-size:20px;line-height:24px;color:#e4e8ec;transform:scale(0.25);">mittlere Abweichung (absolut)</div>
<div class="t" style="left:1300px;top:678px;font-size:19.6px;line-height:23.52px;color:#e4e8ec;transform:scale(0.25) translateX(-100%);">0,001</div>
<div class="t" style="left:1181.6px;top:688px;font-size:20px;line-height:24px;color:#e4e8ec;transform:scale(0.25);">mittlere Abweichung (X)</div>
<div class="t" style="left:1300px;top:688px;font-size:19.6px;line-height:23.52px;color:#e4e8ec;transform:scale(0.25) translateX(-100%);">0,001</div>
<div class="t" style="left:1181.6px;top:699px;font-size:20px;line-height:24px;color:#e4e8ec;transform:scale(0.25);">mittlere Abweichung (Z)</div>
<div class="t" style="left:1300px;top:699px;font-size:19.6px;line-height:23.52px;color:#e4e8ec;transform:scale(0.25) translateX(-100%);">0,000</div>
<div class="t" style="left:1181.6px;top:709px;font-size:20px;line-height:24px;color:#e4e8ec;transform:scale(0.25);">mittlere Abweichung (Phi)</div>
<div class="t" style="left:1300px;top:709px;font-size:19.6px;line-height:23.52px;color:#e4e8ec;transform:scale(0.25) translateX(-100%);">-0,01</div>
<div class="t" style="left:1181.6px;top:719px;font-size:20px;line-height:24px;color:#e4e8ec;transform:scale(0.25);">maximale Abweichung (außen)</div>
<div class="t" style="left:1300px;top:719px;font-size:19.6px;line-height:23.52px;color:#e4e8ec;transform:scale(0.25) translateX(-100%);">0,002</div>
<div class="t" style="left:1181.6px;top:730px;font-size:20px;line-height:24px;color:#e4e8ec;transform:scale(0.25);">maximale Abweichung (innen)</div>
<div class="t" style="left:1300px;top:730px;font-size:19.6px;line-height:23.52px;color:#e4e8ec;transform:scale(0.25) translateX(-100%);">0,003</div>
<div class="t" style="left:1181.6px;top:740px;font-size:20px;line-height:24px;color:#e4e8ec;transform:scale(0.25);">maximale Abweichung (X)</div>
<div class="t" style="left:1300px;top:740px;font-size:19.6px;line-height:23.52px;color:#e4e8ec;transform:scale(0.25) translateX(-100%);">0,002</div>
<div class="t" style="left:1181.6px;top:750px;font-size:20px;line-height:24px;color:#e4e8ec;transform:scale(0.25);">maximale Abweichung (Z)</div>
<div class="t" style="left:1300px;top:750px;font-size:19.6px;line-height:23.52px;color:#e4e8ec;transform:scale(0.25) translateX(-100%);">0,001</div>
</section>
<div class="cap" style="left:32px;top:379.8px;transform:scaleX(.934)">Fotorealer Eingabedialog »fored«</div>
<div class="cap" style="left:686px;top:379.8px;transform:scaleX(.921)">Ergebnisanzeige</div>
<div class="cap" style="left:32px;top:785.8px;transform:scaleX(.949)">Vollautomatische und zeitsparende Vermessung</div>
<div class="cap" style="left:686px;top:785.8px;transform:scaleX(.943)">Grafische Auswertung</div>
</body></html>
